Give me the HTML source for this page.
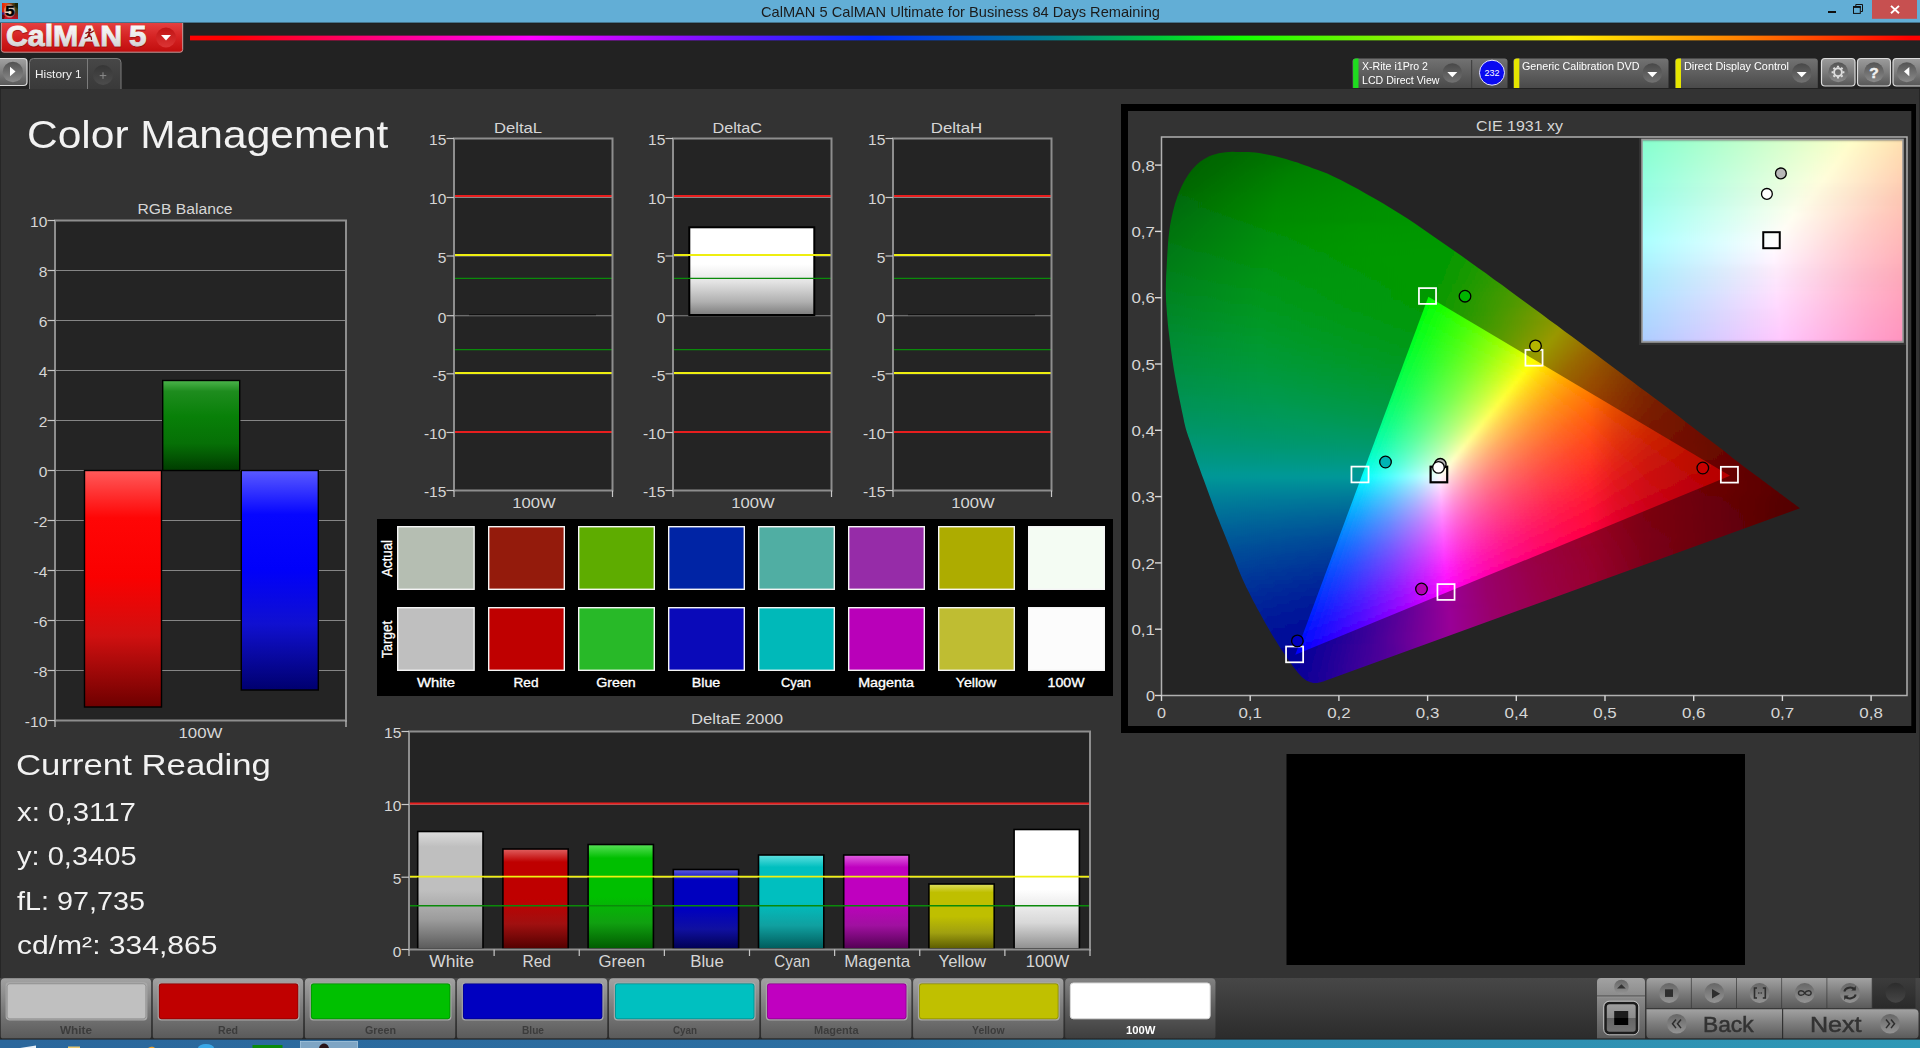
<!DOCTYPE html>
<html lang="en"><head><meta charset="utf-8"><title>CalMAN 5 CalMAN Ultimate for Business</title>
<style>html,body{margin:0;padding:0;background:#333;overflow:hidden}body{width:1920px;height:1048px;position:relative;font-family:"Liberation Sans",sans-serif}svg{position:absolute;left:0;top:0;display:block}svg text{font-family:"Liberation Sans",sans-serif}.t{position:absolute;margin:0;padding:0;white-space:nowrap;transform-origin:0 0;font-weight:normal}</style></head>
<body>
<svg width="1920" height="1048" viewBox="0 0 1920 1048">
<defs><linearGradient id="lg1" x1="0" y1="0" x2="1" y2="0"><stop offset="0" stop-color="#e82200"/><stop offset="0.25" stop-color="#f04818"/><stop offset="0.7" stop-color="#4a3a10"/><stop offset="1" stop-color="#085808"/></linearGradient><linearGradient id="lg2" x1="0" y1="0" x2="0" y2="1"><stop offset="0" stop-color="#a00818" stop-opacity="0"/><stop offset="0.45" stop-color="#a00818" stop-opacity="0.25"/><stop offset="1" stop-color="#c80828" stop-opacity="0.95"/></linearGradient><radialGradient id="ichalo" cx="0.5" cy="0.5" r="0.5"><stop offset="0" stop-color="#eef4d8" stop-opacity="0.95"/><stop offset="0.7" stop-color="#f0e0d0" stop-opacity="0.8"/><stop offset="1" stop-color="#f0d0c8" stop-opacity="0"/></radialGradient><linearGradient id="lg3" x1="0" y1="0" x2="0" y2="1"><stop offset="0" stop-color="#e44040"/><stop offset="0.45" stop-color="#d62424"/><stop offset="1" stop-color="#c00c0c"/></linearGradient><linearGradient id="lg4" x1="0" y1="0" x2="0" y2="1"><stop offset="0" stop-color="#ffffff"/><stop offset="0.5" stop-color="#ececec"/><stop offset="1" stop-color="#c8c8c8"/></linearGradient><linearGradient id="lg5" x1="0" y1="0" x2="0" y2="1"><stop offset="0" stop-color="#c01414"/><stop offset="1" stop-color="#dc3434"/></linearGradient><linearGradient id="lg6" x1="0" y1="0" x2="1" y2="0"><stop offset="0" stop-color="#ff0000"/><stop offset="0.023" stop-color="#ff0000"/><stop offset="0.11" stop-color="#ff0080"/><stop offset="0.197" stop-color="#ff00ff"/><stop offset="0.295" stop-color="#8010ff"/><stop offset="0.393" stop-color="#0028ff"/><stop offset="0.497" stop-color="#008090"/><stop offset="0.56" stop-color="#00c83c"/><stop offset="0.607" stop-color="#10ff00"/><stop offset="0.7" stop-color="#90f000"/><stop offset="0.798" stop-color="#ffee00"/><stop offset="0.896" stop-color="#ff8000"/><stop offset="0.994" stop-color="#ff0000"/></linearGradient><linearGradient id="lg7" x1="0" y1="0" x2="0" y2="1"><stop offset="0" stop-color="#a2a2a2"/><stop offset="0.5" stop-color="#7e7e7e"/><stop offset="1" stop-color="#585858"/></linearGradient><linearGradient id="lg8" x1="0" y1="0" x2="0" y2="1"><stop offset="0" stop-color="#525252"/><stop offset="1" stop-color="#8c8c8c"/></linearGradient><linearGradient id="lg9" x1="0" y1="0" x2="0" y2="1"><stop offset="0" stop-color="#474747"/><stop offset="1" stop-color="#393939"/></linearGradient><linearGradient id="lg10" x1="0" y1="0" x2="0" y2="1"><stop offset="0" stop-color="#363636"/><stop offset="1" stop-color="#4c4c4c"/></linearGradient><linearGradient id="lg11" x1="0" y1="0" x2="0" y2="1"><stop offset="0" stop-color="#727272"/><stop offset="0.5" stop-color="#5e5e5e"/><stop offset="1" stop-color="#4a4a4a"/></linearGradient><linearGradient id="lg12" x1="0" y1="0" x2="0" y2="1"><stop offset="0" stop-color="#484848"/><stop offset="1" stop-color="#727272"/></linearGradient><linearGradient id="lg13" x1="0" y1="0" x2="0" y2="1"><stop offset="0" stop-color="#484848"/><stop offset="1" stop-color="#727272"/></linearGradient><linearGradient id="lg14" x1="0" y1="0" x2="0" y2="1"><stop offset="0" stop-color="#484848"/><stop offset="1" stop-color="#727272"/></linearGradient><linearGradient id="lg15" x1="0" y1="0" x2="0" y2="1"><stop offset="0" stop-color="#9c9c9c"/><stop offset="0.5" stop-color="#7c7c7c"/><stop offset="1" stop-color="#565656"/></linearGradient><linearGradient id="lg16" x1="0" y1="0" x2="0" y2="1"><stop offset="0" stop-color="#545454"/><stop offset="1" stop-color="#8a8a8a"/></linearGradient><linearGradient id="lg17" x1="0" y1="0" x2="0" y2="1"><stop offset="0" stop-color="#545454"/><stop offset="1" stop-color="#8a8a8a"/></linearGradient><linearGradient id="lg18" x1="0" y1="0" x2="0" y2="1"><stop offset="0" stop-color="#545454"/><stop offset="1" stop-color="#8a8a8a"/></linearGradient><linearGradient id="lg19" x1="0" y1="0" x2="0" y2="1"><stop offset="0" stop-color="#ff5a5a"/><stop offset="0.2" stop-color="#ff0606"/><stop offset="0.45" stop-color="#fa0000"/><stop offset="0.7" stop-color="#d01010"/><stop offset="1" stop-color="#6e0000"/></linearGradient><linearGradient id="lg20" x1="0" y1="0" x2="0" y2="1"><stop offset="0" stop-color="#4cb44c"/><stop offset="0.12" stop-color="#1e8c1e"/><stop offset="0.4" stop-color="#088008"/><stop offset="0.7" stop-color="#067006"/><stop offset="1" stop-color="#003c00"/></linearGradient><linearGradient id="lg21" x1="0" y1="0" x2="0" y2="1"><stop offset="0" stop-color="#5a5aff"/><stop offset="0.2" stop-color="#0606ff"/><stop offset="0.45" stop-color="#0000fa"/><stop offset="0.7" stop-color="#1010d0"/><stop offset="1" stop-color="#00006e"/></linearGradient><linearGradient id="lg22" x1="0" y1="0" x2="0" y2="1"><stop offset="0" stop-color="#ffffff"/><stop offset="0.42" stop-color="#ffffff"/><stop offset="0.62" stop-color="#e4e4e4"/><stop offset="0.85" stop-color="#b0b0b0"/><stop offset="1" stop-color="#7c7c7c"/></linearGradient><linearGradient id="lg23" x1="0" y1="0" x2="0" y2="1"><stop offset="0" stop-color="#dcdcdc"/><stop offset="0.13" stop-color="#bfbfbf"/><stop offset="0.5" stop-color="#bfbfbf"/><stop offset="0.75" stop-color="#9c9c9c"/><stop offset="1" stop-color="#5a5a5a"/></linearGradient><linearGradient id="lg24" x1="0" y1="0" x2="0" y2="1"><stop offset="0" stop-color="#e06060"/><stop offset="0.13" stop-color="#bf0000"/><stop offset="0.5" stop-color="#bf0000"/><stop offset="0.75" stop-color="#a01010"/><stop offset="1" stop-color="#520000"/></linearGradient><linearGradient id="lg25" x1="0" y1="0" x2="0" y2="1"><stop offset="0" stop-color="#58e058"/><stop offset="0.13" stop-color="#00bf00"/><stop offset="0.5" stop-color="#00bf00"/><stop offset="0.75" stop-color="#10a010"/><stop offset="1" stop-color="#005a00"/></linearGradient><linearGradient id="lg26" x1="0" y1="0" x2="0" y2="1"><stop offset="0" stop-color="#6060e0"/><stop offset="0.13" stop-color="#0000bf"/><stop offset="0.5" stop-color="#0000bf"/><stop offset="0.75" stop-color="#1010a0"/><stop offset="1" stop-color="#000052"/></linearGradient><linearGradient id="lg27" x1="0" y1="0" x2="0" y2="1"><stop offset="0" stop-color="#60e0e0"/><stop offset="0.13" stop-color="#00bfbf"/><stop offset="0.5" stop-color="#00bfbf"/><stop offset="0.75" stop-color="#10a0a0"/><stop offset="1" stop-color="#005a5a"/></linearGradient><linearGradient id="lg28" x1="0" y1="0" x2="0" y2="1"><stop offset="0" stop-color="#e060e0"/><stop offset="0.13" stop-color="#bf00bf"/><stop offset="0.5" stop-color="#bf00bf"/><stop offset="0.75" stop-color="#a010a0"/><stop offset="1" stop-color="#520052"/></linearGradient><linearGradient id="lg29" x1="0" y1="0" x2="0" y2="1"><stop offset="0" stop-color="#e0e060"/><stop offset="0.13" stop-color="#bfbf00"/><stop offset="0.5" stop-color="#bfbf00"/><stop offset="0.75" stop-color="#a0a010"/><stop offset="1" stop-color="#5a5a00"/></linearGradient><linearGradient id="lg30" x1="0" y1="0" x2="0" y2="1"><stop offset="0" stop-color="#ffffff"/><stop offset="0.5" stop-color="#ffffff"/><stop offset="0.78" stop-color="#d8d8d8"/><stop offset="1" stop-color="#8e8e8e"/></linearGradient><clipPath id="hs"><polygon points="1324.5,681.1 1323.5,681.4 1322.1,681.8 1320.5,682.3 1319.2,682.6 1318.2,682.8 1317.2,682.9 1316.4,682.9 1315.5,682.9 1314.7,682.9 1313.9,682.9 1313.0,682.9 1311.9,682.6 1310.5,682.2 1308.9,681.6 1307.2,680.9 1305.6,680.0 1304.0,678.8 1302.4,677.4 1300.9,675.9 1299.3,674.2 1297.7,672.4 1296.2,670.5 1294.6,668.5 1293.0,666.4 1291.5,664.3 1290.0,662.2 1288.4,659.9 1286.7,657.4 1284.8,654.6 1282.7,651.5 1280.5,648.3 1278.3,644.8 1276.0,641.1 1273.6,637.2 1271.2,633.2 1268.8,629.1 1266.4,625.0 1264.0,620.7 1261.7,616.5 1259.4,612.3 1257.2,608.4 1255.2,604.5 1253.1,600.7 1251.0,596.5 1248.8,592.0 1246.4,587.4 1244.1,582.5 1241.8,577.4 1239.5,571.9 1237.2,566.2 1234.9,560.3 1232.6,554.5 1230.3,548.8 1228.0,543.0 1225.7,537.3 1223.4,531.6 1221.1,525.9 1218.8,520.1 1216.5,514.4 1214.3,508.7 1212.2,503.0 1210.1,497.2 1208.0,491.5 1205.9,485.8 1203.8,480.1 1201.7,474.4 1199.6,468.6 1197.5,462.9 1195.4,456.9 1193.3,450.8 1191.3,445.0 1189.6,440.0 1188.3,436.4 1187.4,433.7 1186.5,431.0 1185.5,427.4 1184.3,422.4 1183.1,416.6 1181.8,410.5 1180.6,404.5 1179.4,398.8 1178.2,393.1 1177.1,387.3 1176.0,381.6 1175.0,375.9 1174.0,370.2 1173.1,364.4 1172.2,358.7 1171.4,353.0 1170.6,347.2 1169.9,341.5 1169.2,335.8 1168.5,330.1 1167.9,324.4 1167.4,318.6 1166.9,312.9 1166.5,307.3 1166.1,301.8 1165.9,296.1 1165.8,290.0 1165.9,283.4 1166.1,276.5 1166.5,269.4 1166.9,262.1 1167.3,254.5 1167.8,246.5 1168.4,238.8 1169.2,231.6 1170.1,225.2 1171.2,219.4 1172.4,213.9 1173.7,208.7 1175.0,203.8 1176.5,199.2 1178.0,194.8 1179.8,190.4 1181.8,186.0 1184.1,181.6 1186.5,177.4 1189.0,173.6 1191.5,170.2 1194.2,167.2 1196.9,164.5 1199.7,162.1 1202.6,160.0 1205.6,158.2 1208.7,156.6 1211.9,155.3 1215.2,154.2 1218.7,153.3 1222.1,152.7 1225.6,152.2 1229.1,151.9 1232.6,151.8 1236.1,151.9 1239.4,151.9 1242.5,151.9 1245.4,151.9 1248.4,152.0 1251.6,152.2 1255.2,152.6 1259.1,153.1 1263.0,153.8 1266.9,154.5 1270.7,155.3 1274.5,156.1 1278.3,157.0 1282.1,158.0 1285.9,159.0 1289.7,160.2 1293.6,161.4 1297.4,162.6 1301.1,163.9 1304.7,165.2 1308.5,166.6 1312.7,168.2 1317.2,169.8 1321.9,171.6 1327.2,173.6 1333.4,176.4 1340.8,180.1 1349.2,184.4 1357.9,189.1 1366.4,193.9 1374.6,198.5 1382.8,203.3 1390.9,208.2 1399.0,213.2 1407.0,218.3 1414.9,223.6 1422.8,229.0 1430.7,234.4 1438.6,239.9 1446.6,245.4 1454.5,250.9 1462.4,256.5 1470.3,262.2 1478.3,267.9 1486.2,273.6 1494.1,279.4 1502.1,285.1 1510.0,290.9 1517.8,296.7 1525.7,302.5 1533.6,308.3 1541.5,314.1 1549.3,319.9 1557.1,325.6 1564.9,331.4 1572.6,337.1 1580.3,342.8 1587.9,348.5 1595.5,354.1 1603.0,359.7 1610.4,365.3 1617.8,370.8 1625.1,376.2 1632.3,381.6 1639.4,386.9 1646.4,392.1 1653.4,397.3 1660.2,402.3 1666.9,407.3 1673.4,412.2 1679.7,417.0 1685.8,421.9 1691.8,426.6 1697.6,431.1 1703.2,435.3 1708.6,439.3 1713.9,443.2 1718.9,447.0 1723.8,450.8 1728.5,454.6 1732.9,458.2 1737.3,461.6 1741.4,464.8 1745.4,467.7 1749.2,470.5 1752.9,473.2 1756.3,475.7 1759.6,478.1 1762.6,480.5 1765.5,482.6 1768.3,484.7 1770.9,486.6 1773.3,488.5 1775.7,490.2 1777.9,491.8 1779.9,493.4 1781.9,494.8 1783.7,496.2 1785.5,497.5 1787.1,498.7 1788.7,499.9 1790.2,501.0 1791.8,502.2 1793.3,503.3 1794.7,504.3 1795.6,505.0 1800.0,508.3"/></clipPath><clipPath id="tri"><polygon points="1730.0,475.8 1428.4,296.8 1295.3,654.8"/></clipPath><clipPath id="ins"><rect x="1642" y="139.5" width="261" height="202.5"/></clipPath><filter id="vb" x="-2%" y="-2%" width="104%" height="104%"><feGaussianBlur stdDeviation="0 1.6"/></filter><linearGradient id="o0" gradientUnits="userSpaceOnUse" x1="1199.96" x2="1289.96"><stop offset="0" stop-color="#006100"/><stop offset="1" stop-color="#070"/></linearGradient><linearGradient id="o1" gradientUnits="userSpaceOnUse" x1="1193.84" x2="1301.84"><stop offset="0" stop-color="#006100"/><stop offset="1" stop-color="#007a00"/></linearGradient><linearGradient id="o2" gradientUnits="userSpaceOnUse" x1="1189.4" x2="1313.4"><stop offset="0" stop-color="#006100"/><stop offset="1" stop-color="#007e00"/></linearGradient><linearGradient id="o3" gradientUnits="userSpaceOnUse" x1="1185.75" x2="1323.75"><stop offset="0" stop-color="#006101"/><stop offset="0.971" stop-color="#008000"/><stop offset="1" stop-color="#008100"/></linearGradient><linearGradient id="o4" gradientUnits="userSpaceOnUse" x1="1182.74" x2="1334.74"><stop offset="0" stop-color="#006102"/><stop offset="0.8289" stop-color="#008000"/><stop offset="1" stop-color="#008400"/></linearGradient><linearGradient id="o5" gradientUnits="userSpaceOnUse" x1="1180.17" x2="1344.17"><stop offset="0" stop-color="#006103"/><stop offset="0.7195" stop-color="#008000"/><stop offset="1" stop-color="#008600"/></linearGradient><linearGradient id="o6" gradientUnits="userSpaceOnUse" x1="1177.89" x2="1351.89"><stop offset="0" stop-color="#006103"/><stop offset="0.6437" stop-color="#008000"/><stop offset="1" stop-color="#080"/></linearGradient><linearGradient id="o7" gradientUnits="userSpaceOnUse" x1="1175.83" x2="1359.83"><stop offset="0" stop-color="#006204"/><stop offset="0.6087" stop-color="#008100"/><stop offset="1" stop-color="#008a00"/></linearGradient><linearGradient id="o8" gradientUnits="userSpaceOnUse" x1="1173.98" x2="1365.98"><stop offset="0" stop-color="#006305"/><stop offset="0.5833" stop-color="#008200"/><stop offset="1" stop-color="#008b00"/></linearGradient><linearGradient id="o9" gradientUnits="userSpaceOnUse" x1="1172.33" x2="1374.33"><stop offset="0" stop-color="#006405"/><stop offset="0.5545" stop-color="#008300"/><stop offset="1" stop-color="#008d00"/></linearGradient><linearGradient id="o10" gradientUnits="userSpaceOnUse" x1="1170.87" x2="1380.87"><stop offset="0" stop-color="#006506"/><stop offset="0.5333" stop-color="#008400"/><stop offset="1" stop-color="#008e00"/></linearGradient><linearGradient id="o11" gradientUnits="userSpaceOnUse" x1="1169.58" x2="1387.58"><stop offset="0" stop-color="#006707"/><stop offset="0.5046" stop-color="#008500"/><stop offset="1" stop-color="#009000"/></linearGradient><linearGradient id="o12" gradientUnits="userSpaceOnUse" x1="1168.43" x2="1394.43"><stop offset="0" stop-color="#006808"/><stop offset="0.4867" stop-color="#008600"/><stop offset="1" stop-color="#009100"/></linearGradient><linearGradient id="o13" gradientUnits="userSpaceOnUse" x1="1167.38" x2="1401.38"><stop offset="0" stop-color="#006909"/><stop offset="0.4701" stop-color="#008700"/><stop offset="1" stop-color="#009200"/></linearGradient><linearGradient id="o14" gradientUnits="userSpaceOnUse" x1="1166.39" x2="1406.39"><stop offset="0" stop-color="#006a09"/><stop offset="0.4583" stop-color="#080"/><stop offset="1" stop-color="#009300"/></linearGradient><linearGradient id="o15" gradientUnits="userSpaceOnUse" x1="1165.52" x2="1413.52"><stop offset="0" stop-color="#006b0a"/><stop offset="0.4435" stop-color="#008901"/><stop offset="1" stop-color="#009400"/></linearGradient><linearGradient id="o16" gradientUnits="userSpaceOnUse" x1="1164.73" x2="1418.73"><stop offset="0" stop-color="#006c0b"/><stop offset="0.4331" stop-color="#008a02"/><stop offset="1" stop-color="#009500"/></linearGradient><linearGradient id="o17" gradientUnits="userSpaceOnUse" x1="1164.02" x2="1426.02"><stop offset="0" stop-color="#006e0c"/><stop offset="0.4198" stop-color="#008a03"/><stop offset="1" stop-color="#009500"/></linearGradient><linearGradient id="o18" gradientUnits="userSpaceOnUse" x1="1163.43" x2="1431.43"><stop offset="0" stop-color="#006f0d"/><stop offset="0.4104" stop-color="#008b04"/><stop offset="0.9851" stop-color="#009600"/><stop offset="1" stop-color="#009600"/></linearGradient><linearGradient id="o19" gradientUnits="userSpaceOnUse" x1="1162.95" x2="1436.95"><stop offset="0" stop-color="#00700e"/><stop offset="0.3942" stop-color="#008c05"/><stop offset="0.7445" stop-color="#009500"/><stop offset="1" stop-color="#009600"/></linearGradient><linearGradient id="o20" gradientUnits="userSpaceOnUse" x1="1162.52" x2="1442.52"><stop offset="0" stop-color="#00710f"/><stop offset="0.3857" stop-color="#008d06"/><stop offset="0.7143" stop-color="#009500"/><stop offset="1" stop-color="#009700"/></linearGradient><linearGradient id="o21" gradientUnits="userSpaceOnUse" x1="1162.19" x2="1448.19"><stop offset="0" stop-color="#007210"/><stop offset="0.3776" stop-color="#008e07"/><stop offset="0.6993" stop-color="#009600"/><stop offset="1" stop-color="#009700"/></linearGradient><linearGradient id="o22" gradientUnits="userSpaceOnUse" x1="1161.88" x2="1453.88"><stop offset="0" stop-color="#007311"/><stop offset="0.3699" stop-color="#008e08"/><stop offset="0.6918" stop-color="#009600"/><stop offset="1" stop-color="#029800"/></linearGradient><linearGradient id="o23" gradientUnits="userSpaceOnUse" x1="1161.62" x2="1459.62"><stop offset="0" stop-color="#007512"/><stop offset="0.3624" stop-color="#008f09"/><stop offset="0.6913" stop-color="#009700"/><stop offset="0.9732" stop-color="#029800"/><stop offset="1" stop-color="#079800"/></linearGradient><linearGradient id="o24" gradientUnits="userSpaceOnUse" x1="1161.37" x2="1465.37"><stop offset="0" stop-color="#007613"/><stop offset="0.3553" stop-color="#00900a"/><stop offset="0.6974" stop-color="#009800"/><stop offset="0.9539" stop-color="#039800"/><stop offset="1" stop-color="#0c9800"/></linearGradient><linearGradient id="o25" gradientUnits="userSpaceOnUse" x1="1161.14" x2="1471.14"><stop offset="0" stop-color="#007714"/><stop offset="0.3484" stop-color="#00910b"/><stop offset="0.6968" stop-color="#009800"/><stop offset="0.929" stop-color="#029900"/><stop offset="1" stop-color="#129800"/></linearGradient><linearGradient id="o26" gradientUnits="userSpaceOnUse" x1="1160.91" x2="1476.91"><stop offset="0" stop-color="#007815"/><stop offset="0.3418" stop-color="#00910d"/><stop offset="0.7025" stop-color="#009800"/><stop offset="0.9114" stop-color="#039900"/><stop offset="1" stop-color="#179900"/></linearGradient><linearGradient id="o27" gradientUnits="userSpaceOnUse" x1="1160.68" x2="1482.68"><stop offset="0" stop-color="#007916"/><stop offset="0.3292" stop-color="#00920e"/><stop offset="0.7081" stop-color="#090"/><stop offset="0.8882" stop-color="#039900"/><stop offset="1" stop-color="#1d9900"/></linearGradient><linearGradient id="o28" gradientUnits="userSpaceOnUse" x1="1160.46" x2="1488.46"><stop offset="0" stop-color="#007a17"/><stop offset="0.3232" stop-color="#00920f"/><stop offset="0.7134" stop-color="#090"/><stop offset="0.8659" stop-color="#029900"/><stop offset="1" stop-color="#239900"/></linearGradient><linearGradient id="o29" gradientUnits="userSpaceOnUse" x1="1160.26" x2="1494.26"><stop offset="0" stop-color="#007b18"/><stop offset="0.3174" stop-color="#009310"/><stop offset="0.7186" stop-color="#090"/><stop offset="0.8503" stop-color="#039900"/><stop offset="1" stop-color="#299900"/></linearGradient><linearGradient id="o30" gradientUnits="userSpaceOnUse" x1="1160.09" x2="1500.09"><stop offset="0" stop-color="#007c1a"/><stop offset="0.3118" stop-color="#009312"/><stop offset="0.7235" stop-color="#090"/><stop offset="0.8294" stop-color="#039900"/><stop offset="1" stop-color="#309900"/></linearGradient><linearGradient id="o31" gradientUnits="userSpaceOnUse" x1="1160" x2="1504"><stop offset="0" stop-color="#007d1b"/><stop offset="0.3081" stop-color="#009413"/><stop offset="0.7326" stop-color="#090"/><stop offset="0.8198" stop-color="#049900"/><stop offset="1" stop-color="#359900"/></linearGradient><linearGradient id="o32" gradientUnits="userSpaceOnUse" x1="1160" x2="1510"><stop offset="0" stop-color="#007e1c"/><stop offset="0.3029" stop-color="#009514"/><stop offset="0.7371" stop-color="#090"/><stop offset="0.8" stop-color="#039900"/><stop offset="1" stop-color="#3c9900"/></linearGradient><linearGradient id="o33" gradientUnits="userSpaceOnUse" x1="1160" x2="1516"><stop offset="0" stop-color="#007f1d"/><stop offset="0.2921" stop-color="#009516"/><stop offset="0.7472" stop-color="#090"/><stop offset="0.7921" stop-color="#069900"/><stop offset="1" stop-color="#490"/></linearGradient><linearGradient id="o34" gradientUnits="userSpaceOnUse" x1="1160" x2="1522"><stop offset="0" stop-color="#00801f"/><stop offset="0.2873" stop-color="#009517"/><stop offset="0.7459" stop-color="#090"/><stop offset="0.9724" stop-color="#429900"/><stop offset="1" stop-color="#4c9900"/></linearGradient><linearGradient id="o35" gradientUnits="userSpaceOnUse" x1="1160" x2="1526"><stop offset="0" stop-color="#008120"/><stop offset="0.2842" stop-color="#009619"/><stop offset="0.7486" stop-color="#029900"/><stop offset="1" stop-color="#529900"/></linearGradient><linearGradient id="o36" gradientUnits="userSpaceOnUse" x1="1160" x2="1532"><stop offset="0" stop-color="#008121"/><stop offset="0.2796" stop-color="#00961a"/><stop offset="0.7312" stop-color="#029900"/><stop offset="0.9892" stop-color="#579900"/><stop offset="1" stop-color="#5b9900"/></linearGradient><linearGradient id="o37" gradientUnits="userSpaceOnUse" x1="1160" x2="1538"><stop offset="0" stop-color="#008223"/><stop offset="0.2751" stop-color="#00961c"/><stop offset="0.7143" stop-color="#029900"/><stop offset="0.963" stop-color="#590"/><stop offset="1" stop-color="#649900"/></linearGradient><linearGradient id="o38" gradientUnits="userSpaceOnUse" x1="1160" x2="1542"><stop offset="0" stop-color="#008324"/><stop offset="0.267" stop-color="#00971d"/><stop offset="0.7068" stop-color="#039902"/><stop offset="0.9529" stop-color="#589900"/><stop offset="1" stop-color="#6b9900"/></linearGradient><linearGradient id="o39" gradientUnits="userSpaceOnUse" x1="1160" x2="1548"><stop offset="0" stop-color="#008426"/><stop offset="0.2629" stop-color="#00971f"/><stop offset="0.6907" stop-color="#029903"/><stop offset="0.9278" stop-color="#569900"/><stop offset="1" stop-color="#759900"/></linearGradient><linearGradient id="o40" gradientUnits="userSpaceOnUse" x1="1160.15" x2="1554.15"><stop offset="0" stop-color="#008527"/><stop offset="0.2589" stop-color="#009720"/><stop offset="0.6751" stop-color="#029905"/><stop offset="0.8223" stop-color="#359900"/><stop offset="1" stop-color="#809900"/></linearGradient><linearGradient id="o41" gradientUnits="userSpaceOnUse" x1="1160.41" x2="1558.41"><stop offset="0" stop-color="#008529"/><stop offset="0.2563" stop-color="#009822"/><stop offset="0.6633" stop-color="#029907"/><stop offset="0.809" stop-color="#359900"/><stop offset="1" stop-color="#899900"/></linearGradient><linearGradient id="o42" gradientUnits="userSpaceOnUse" x1="1160.69" x2="1564.69"><stop offset="0" stop-color="#00862a"/><stop offset="0.2525" stop-color="#009824"/><stop offset="0.6485" stop-color="#029909"/><stop offset="0.802" stop-color="#3a9900"/><stop offset="0.995" stop-color="#929900"/><stop offset="1" stop-color="#959900"/></linearGradient><linearGradient id="o43" gradientUnits="userSpaceOnUse" x1="1160.99" x2="1570.99"><stop offset="0" stop-color="#00872c"/><stop offset="0.2439" stop-color="#009826"/><stop offset="0.6341" stop-color="#02990b"/><stop offset="0.8" stop-color="#409900"/><stop offset="0.9902" stop-color="#999600"/><stop offset="1" stop-color="#999100"/></linearGradient><linearGradient id="o44" gradientUnits="userSpaceOnUse" x1="1161.32" x2="1575.32"><stop offset="0" stop-color="#00882e"/><stop offset="0.2415" stop-color="#009827"/><stop offset="0.6232" stop-color="#01990d"/><stop offset="0.8019" stop-color="#479900"/><stop offset="0.971" stop-color="#999700"/><stop offset="1" stop-color="#980"/></linearGradient><linearGradient id="o45" gradientUnits="userSpaceOnUse" x1="1161.7" x2="1581.7"><stop offset="0" stop-color="#00882f"/><stop offset="0.2381" stop-color="#009829"/><stop offset="0.6095" stop-color="#01990f"/><stop offset="0.8048" stop-color="#519900"/><stop offset="0.9476" stop-color="#999700"/><stop offset="1" stop-color="#997d00"/></linearGradient><linearGradient id="o46" gradientUnits="userSpaceOnUse" x1="1162.11" x2="1586.11"><stop offset="0" stop-color="#008931"/><stop offset="0.2358" stop-color="#00992b"/><stop offset="0.6038" stop-color="#039911"/><stop offset="0.8019" stop-color="#579900"/><stop offset="0.9292" stop-color="#999700"/><stop offset="1" stop-color="#997600"/></linearGradient><linearGradient id="o47" gradientUnits="userSpaceOnUse" x1="1162.54" x2="1590.54"><stop offset="0" stop-color="#008a33"/><stop offset="0.229" stop-color="#00992d"/><stop offset="0.5935" stop-color="#039913"/><stop offset="0.7897" stop-color="#589900"/><stop offset="0.9112" stop-color="#999800"/><stop offset="1" stop-color="#996e00"/></linearGradient><linearGradient id="o48" gradientUnits="userSpaceOnUse" x1="1162.99" x2="1596.99"><stop offset="0" stop-color="#008a35"/><stop offset="0.2258" stop-color="#00992e"/><stop offset="0.5806" stop-color="#039915"/><stop offset="0.7696" stop-color="#579902"/><stop offset="0.8894" stop-color="#999800"/><stop offset="0.9908" stop-color="#976800"/><stop offset="1" stop-color="#946300"/></linearGradient><linearGradient id="o49" gradientUnits="userSpaceOnUse" x1="1163.46" x2="1601.46"><stop offset="0" stop-color="#008b36"/><stop offset="0.2237" stop-color="#009930"/><stop offset="0.5708" stop-color="#039917"/><stop offset="0.758" stop-color="#589904"/><stop offset="0.8721" stop-color="#990"/><stop offset="0.9635" stop-color="#996c00"/><stop offset="1" stop-color="#905b00"/></linearGradient><linearGradient id="o50" gradientUnits="userSpaceOnUse" x1="1163.94" x2="1607.94"><stop offset="0" stop-color="#008c38"/><stop offset="0.2207" stop-color="#009932"/><stop offset="0.5586" stop-color="#03991a"/><stop offset="0.7387" stop-color="#579907"/><stop offset="0.8378" stop-color="#909900"/><stop offset="0.8559" stop-color="#999600"/><stop offset="0.9459" stop-color="#996b00"/><stop offset="0.9865" stop-color="#905700"/><stop offset="1" stop-color="#8c5100"/></linearGradient><linearGradient id="o51" gradientUnits="userSpaceOnUse" x1="1164.45" x2="1612.45"><stop offset="0" stop-color="#008c3a"/><stop offset="0.2188" stop-color="#009934"/><stop offset="0.5491" stop-color="#03991c"/><stop offset="0.7277" stop-color="#58990a"/><stop offset="0.8348" stop-color="#989900"/><stop offset="0.9241" stop-color="#996c00"/><stop offset="0.9643" stop-color="#945b00"/><stop offset="1" stop-color="#8a4b00"/></linearGradient><linearGradient id="o52" gradientUnits="userSpaceOnUse" x1="1164.98" x2="1618.98"><stop offset="0" stop-color="#008d3c"/><stop offset="0.2115" stop-color="#009936"/><stop offset="0.533" stop-color="#01991f"/><stop offset="0.7048" stop-color="#55990d"/><stop offset="0.8194" stop-color="#999700"/><stop offset="0.9075" stop-color="#996a00"/><stop offset="0.9471" stop-color="#955a00"/><stop offset="1" stop-color="#864400"/></linearGradient><linearGradient id="o53" gradientUnits="userSpaceOnUse" x1="1165.52" x2="1623.52"><stop offset="0" stop-color="#008d3e"/><stop offset="0.2096" stop-color="#009938"/><stop offset="0.524" stop-color="#019921"/><stop offset="0.6943" stop-color="#569910"/><stop offset="0.8035" stop-color="#999702"/><stop offset="0.8865" stop-color="#996b00"/><stop offset="0.9345" stop-color="#965900"/><stop offset="1" stop-color="#843e00"/></linearGradient><linearGradient id="o54" gradientUnits="userSpaceOnUse" x1="1166.1" x2="1630.1"><stop offset="0" stop-color="#008e40"/><stop offset="0.2069" stop-color="#00993a"/><stop offset="0.5129" stop-color="#019924"/><stop offset="0.6767" stop-color="#559913"/><stop offset="0.7845" stop-color="#999705"/><stop offset="0.8664" stop-color="#996b00"/><stop offset="0.9224" stop-color="#965500"/><stop offset="1" stop-color="#813800"/></linearGradient><linearGradient id="o55" gradientUnits="userSpaceOnUse" x1="1166.7" x2="1634.7"><stop offset="0" stop-color="#008e42"/><stop offset="0.2051" stop-color="#00993c"/><stop offset="0.5043" stop-color="#019927"/><stop offset="0.6667" stop-color="#569916"/><stop offset="0.7692" stop-color="#999808"/><stop offset="0.8504" stop-color="#996b00"/><stop offset="0.9145" stop-color="#955200"/><stop offset="1" stop-color="#7f3400"/></linearGradient><linearGradient id="o56" gradientUnits="userSpaceOnUse" x1="1167.33" x2="1639.33"><stop offset="0" stop-color="#008f44"/><stop offset="0.2034" stop-color="#00993f"/><stop offset="0.4958" stop-color="#029929"/><stop offset="0.6525" stop-color="#559919"/><stop offset="0.7542" stop-color="#99980c"/><stop offset="0.8305" stop-color="#996c00"/><stop offset="0.9025" stop-color="#965100"/><stop offset="0.9958" stop-color="#7e3100"/><stop offset="1" stop-color="#7d3000"/></linearGradient><linearGradient id="o57" gradientUnits="userSpaceOnUse" x1="1167.98" x2="1645.98"><stop offset="0" stop-color="#008f47"/><stop offset="0.2008" stop-color="#009941"/><stop offset="0.4854" stop-color="#02992c"/><stop offset="0.6402" stop-color="#57991c"/><stop offset="0.7364" stop-color="#99980f"/><stop offset="0.8117" stop-color="#996c02"/><stop offset="0.8912" stop-color="#964d00"/><stop offset="0.9874" stop-color="#7d2e00"/><stop offset="1" stop-color="#7b2b00"/></linearGradient><linearGradient id="o58" gradientUnits="userSpaceOnUse" x1="1168.66" x2="1650.66"><stop offset="0" stop-color="#009049"/><stop offset="0.1992" stop-color="#009943"/><stop offset="0.4772" stop-color="#02992f"/><stop offset="0.6266" stop-color="#569920"/><stop offset="0.722" stop-color="#999813"/><stop offset="0.7967" stop-color="#996b05"/><stop offset="0.8797" stop-color="#974c00"/><stop offset="0.9751" stop-color="#7e2d00"/><stop offset="1" stop-color="#792800"/></linearGradient><linearGradient id="o59" gradientUnits="userSpaceOnUse" x1="1169.36" x2="1655.36"><stop offset="0" stop-color="#00904b"/><stop offset="0.1975" stop-color="#009946"/><stop offset="0.4691" stop-color="#029932"/><stop offset="0.6173" stop-color="#589923"/><stop offset="0.7078" stop-color="#999817"/><stop offset="0.7819" stop-color="#996b08"/><stop offset="0.8724" stop-color="#964900"/><stop offset="0.9671" stop-color="#7d2b00"/><stop offset="1" stop-color="#782400"/></linearGradient><linearGradient id="o60" gradientUnits="userSpaceOnUse" x1="1170.08" x2="1662.08"><stop offset="0" stop-color="#00914e"/><stop offset="0.1992" stop-color="#009948"/><stop offset="0.4593" stop-color="#029935"/><stop offset="0.6016" stop-color="#579926"/><stop offset="0.6911" stop-color="#99981b"/><stop offset="0.7602" stop-color="#996c0b"/><stop offset="0.8618" stop-color="#964600"/><stop offset="0.9593" stop-color="#7c2800"/><stop offset="1" stop-color="#762100"/></linearGradient><linearGradient id="o61" gradientUnits="userSpaceOnUse" x1="1170.84" x2="1666.84"><stop offset="0" stop-color="#009150"/><stop offset="0.1976" stop-color="#00994a"/><stop offset="0.4516" stop-color="#039938"/><stop offset="0.5887" stop-color="#56992a"/><stop offset="0.6774" stop-color="#99981f"/><stop offset="0.746" stop-color="#996c0e"/><stop offset="0.8508" stop-color="#974400"/><stop offset="0.9476" stop-color="#7d2700"/><stop offset="1" stop-color="#741e00"/></linearGradient><linearGradient id="o62" gradientUnits="userSpaceOnUse" x1="1171.62" x2="1671.62"><stop offset="0" stop-color="#009253"/><stop offset="0.2" stop-color="#00994d"/><stop offset="0.444" stop-color="#03993b"/><stop offset="0.58" stop-color="#58992e"/><stop offset="0.664" stop-color="#999823"/><stop offset="0.732" stop-color="#996b11"/><stop offset="0.844" stop-color="#964101"/><stop offset="0.944" stop-color="#7c2400"/><stop offset="1" stop-color="#731b00"/></linearGradient><linearGradient id="o63" gradientUnits="userSpaceOnUse" x1="1172.43" x2="1678.43"><stop offset="0" stop-color="#009255"/><stop offset="0.2016" stop-color="#00994f"/><stop offset="0.4308" stop-color="#01993f"/><stop offset="0.5613" stop-color="#549932"/><stop offset="0.6482" stop-color="#999827"/><stop offset="0.7115" stop-color="#996d15"/><stop offset="0.8103" stop-color="#994605"/><stop offset="0.8419" stop-color="#933b01"/><stop offset="0.9526" stop-color="#781f00"/><stop offset="1" stop-color="#711800"/></linearGradient><linearGradient id="o64" gradientUnits="userSpaceOnUse" x1="1173.25" x2="1683.25"><stop offset="0" stop-color="#009258"/><stop offset="0.2039" stop-color="#009952"/><stop offset="0.4235" stop-color="#029942"/><stop offset="0.5529" stop-color="#569936"/><stop offset="0.6353" stop-color="#99982b"/><stop offset="0.698" stop-color="#996c18"/><stop offset="0.7961" stop-color="#994507"/><stop offset="0.8275" stop-color="#953b03"/><stop offset="0.9333" stop-color="#7a2000"/><stop offset="1" stop-color="#701600"/></linearGradient><linearGradient id="o65" gradientUnits="userSpaceOnUse" x1="1174.08" x2="1688.08"><stop offset="0" stop-color="#00935a"/><stop offset="0.2101" stop-color="#009954"/><stop offset="0.4163" stop-color="#029946"/><stop offset="0.5409" stop-color="#55993a"/><stop offset="0.6226" stop-color="#999830"/><stop offset="0.6848" stop-color="#996c1b"/><stop offset="0.7821" stop-color="#994409"/><stop offset="0.8171" stop-color="#963a05"/><stop offset="0.9222" stop-color="#7b1f00"/><stop offset="1" stop-color="#6f1400"/></linearGradient><linearGradient id="o66" gradientUnits="userSpaceOnUse" x1="1174.91" x2="1692.91"><stop offset="0" stop-color="#00935d"/><stop offset="0.2162" stop-color="#009957"/><stop offset="0.4093" stop-color="#029949"/><stop offset="0.5328" stop-color="#57993e"/><stop offset="0.61" stop-color="#999834"/><stop offset="0.6718" stop-color="#996b1f"/><stop offset="0.7645" stop-color="#99450c"/><stop offset="0.8108" stop-color="#953706"/><stop offset="0.9151" stop-color="#7a1d00"/><stop offset="1" stop-color="#6e1200"/></linearGradient><linearGradient id="o67" gradientUnits="userSpaceOnUse" x1="1175.73" x2="1697.73"><stop offset="0" stop-color="#009360"/><stop offset="0.2222" stop-color="#009959"/><stop offset="0.4023" stop-color="#03994d"/><stop offset="0.5211" stop-color="#569942"/><stop offset="0.5977" stop-color="#999839"/><stop offset="0.6552" stop-color="#996d23"/><stop offset="0.7433" stop-color="#994610"/><stop offset="0.8008" stop-color="#963507"/><stop offset="0.9004" stop-color="#7b1d00"/><stop offset="1" stop-color="#6d1000"/></linearGradient><linearGradient id="o68" gradientUnits="userSpaceOnUse" x1="1176.55" x2="1702.55"><stop offset="0" stop-color="#009463"/><stop offset="0.2319" stop-color="#00995c"/><stop offset="0.3916" stop-color="#019951"/><stop offset="0.5095" stop-color="#559947"/><stop offset="0.5856" stop-color="#99983e"/><stop offset="0.6426" stop-color="#996c27"/><stop offset="0.73" stop-color="#994512"/><stop offset="0.7947" stop-color="#953308"/><stop offset="0.8973" stop-color="#7a1a00"/><stop offset="1" stop-color="#6c0e00"/></linearGradient><linearGradient id="o69" gradientUnits="userSpaceOnUse" x1="1177.38" x2="1709.38"><stop offset="0" stop-color="#009466"/><stop offset="0.2444" stop-color="#00995e"/><stop offset="0.3835" stop-color="#019955"/><stop offset="0.4962" stop-color="#54994c"/><stop offset="0.5714" stop-color="#999743"/><stop offset="0.6278" stop-color="#996b2a"/><stop offset="0.7143" stop-color="#994515"/><stop offset="0.782" stop-color="#96310a"/><stop offset="0.8797" stop-color="#7b1a00"/><stop offset="1" stop-color="#6a0c00"/></linearGradient><linearGradient id="o70" gradientUnits="userSpaceOnUse" x1="1178.24" x2="1714.24"><stop offset="0" stop-color="#009469"/><stop offset="0.2612" stop-color="#009961"/><stop offset="0.3769" stop-color="#02995a"/><stop offset="0.4888" stop-color="#579950"/><stop offset="0.5597" stop-color="#999748"/><stop offset="0.6157" stop-color="#996a2e"/><stop offset="0.7015" stop-color="#994417"/><stop offset="0.7761" stop-color="#962e0b"/><stop offset="0.8769" stop-color="#7b1801"/><stop offset="1" stop-color="#690b00"/></linearGradient><linearGradient id="o71" gradientUnits="userSpaceOnUse" x1="1179.17" x2="1719.17"><stop offset="0" stop-color="#00956c"/><stop offset="0.2889" stop-color="#009963"/><stop offset="0.3704" stop-color="#02995e"/><stop offset="0.4778" stop-color="#569955"/><stop offset="0.5481" stop-color="#99974d"/><stop offset="0.6" stop-color="#996c33"/><stop offset="0.6815" stop-color="#99451b"/><stop offset="0.7667" stop-color="#962d0c"/><stop offset="0.863" stop-color="#7c1702"/><stop offset="1" stop-color="#680900"/></linearGradient><linearGradient id="o72" gradientUnits="userSpaceOnUse" x1="1180.21" x2="1724.21"><stop offset="0" stop-color="#009570"/><stop offset="0.3162" stop-color="#009965"/><stop offset="0.364" stop-color="#039962"/><stop offset="0.4706" stop-color="#58995a"/><stop offset="0.5368" stop-color="#999653"/><stop offset="0.5882" stop-color="#996b37"/><stop offset="0.6691" stop-color="#99441e"/><stop offset="0.761" stop-color="#962a0d"/><stop offset="0.8566" stop-color="#7b1602"/><stop offset="1" stop-color="#670800"/></linearGradient><linearGradient id="o73" gradientUnits="userSpaceOnUse" x1="1181.47" x2="1729.47"><stop offset="0" stop-color="#009573"/><stop offset="0.3285" stop-color="#009969"/><stop offset="0.3577" stop-color="#049967"/><stop offset="0.4599" stop-color="#589960"/><stop offset="0.5219" stop-color="#99995a"/><stop offset="0.573" stop-color="#996c3c"/><stop offset="0.6496" stop-color="#994622"/><stop offset="0.7518" stop-color="#96290f"/><stop offset="0.8467" stop-color="#7b1503"/><stop offset="1" stop-color="#650600"/></linearGradient><linearGradient id="o74" gradientUnits="userSpaceOnUse" x1="1182.9" x2="1734.9"><stop offset="0" stop-color="#009577"/><stop offset="0.3478" stop-color="#03996c"/><stop offset="0.4457" stop-color="#596"/><stop offset="0.5109" stop-color="#999860"/><stop offset="0.5616" stop-color="#996b40"/><stop offset="0.6377" stop-color="#994425"/><stop offset="0.7428" stop-color="#972710"/><stop offset="0.837" stop-color="#7c1304"/><stop offset="1" stop-color="#640500"/></linearGradient><linearGradient id="o75" gradientUnits="userSpaceOnUse" x1="1184.28" x2="1740.28"><stop offset="0" stop-color="#00967a"/><stop offset="0.3381" stop-color="#019971"/><stop offset="0.4353" stop-color="#55996c"/><stop offset="0.5" stop-color="#999665"/><stop offset="0.5468" stop-color="#996c46"/><stop offset="0.6187" stop-color="#994629"/><stop offset="0.7338" stop-color="#972511"/><stop offset="0.8273" stop-color="#7c1205"/><stop offset="1" stop-color="#630400"/></linearGradient><linearGradient id="o76" gradientUnits="userSpaceOnUse" x1="1185.64" x2="1745.64"><stop offset="0" stop-color="#00967e"/><stop offset="0.3321" stop-color="#029977"/><stop offset="0.425" stop-color="#559972"/><stop offset="0.4857" stop-color="#98996e"/><stop offset="0.5357" stop-color="#996a4a"/><stop offset="0.6071" stop-color="#99442c"/><stop offset="0.7286" stop-color="#962212"/><stop offset="0.8214" stop-color="#7b1106"/><stop offset="1" stop-color="#610300"/></linearGradient><linearGradient id="o77" gradientUnits="userSpaceOnUse" x1="1187.01" x2="1751.01"><stop offset="0" stop-color="#009682"/><stop offset="0.3227" stop-color="#01997c"/><stop offset="0.4149" stop-color="#549978"/><stop offset="0.4752" stop-color="#999874"/><stop offset="0.5213" stop-color="#996b50"/><stop offset="0.5922" stop-color="#994430"/><stop offset="0.7092" stop-color="#992315"/><stop offset="0.8191" stop-color="#7a0f06"/><stop offset="1" stop-color="#600200"/></linearGradient><linearGradient id="o78" gradientUnits="userSpaceOnUse" x1="1188.39" x2="1756.39"><stop offset="0" stop-color="#009686"/><stop offset="0.3169" stop-color="#029982"/><stop offset="0.4049" stop-color="#54997f"/><stop offset="0.4648" stop-color="#99977a"/><stop offset="0.5106" stop-color="#996a54"/><stop offset="0.581" stop-color="#994333"/><stop offset="0.6972" stop-color="#992217"/><stop offset="0.8204" stop-color="#790c06"/><stop offset="1" stop-color="#5f0000"/></linearGradient><linearGradient id="o79" gradientUnits="userSpaceOnUse" x1="1189.78" x2="1761.78"><stop offset="0" stop-color="#00978b"/><stop offset="0.3077" stop-color="#098"/><stop offset="0.3951" stop-color="#549985"/><stop offset="0.451" stop-color="#989984"/><stop offset="0.4965" stop-color="#996b5b"/><stop offset="0.5629" stop-color="#994439"/><stop offset="0.6713" stop-color="#99241b"/><stop offset="0.7063" stop-color="#961c15"/><stop offset="0.7972" stop-color="#7b0d08"/><stop offset="0.986" stop-color="#5f0000"/><stop offset="1" stop-color="#5d0000"/></linearGradient><linearGradient id="o80" gradientUnits="userSpaceOnUse" x1="1191.18" x2="1767.18"><stop offset="0" stop-color="#00978f"/><stop offset="0.3021" stop-color="#02998e"/><stop offset="0.3854" stop-color="#54998d"/><stop offset="0.441" stop-color="#99988b"/><stop offset="0.4826" stop-color="#996c62"/><stop offset="0.5451" stop-color="#99463e"/><stop offset="0.6493" stop-color="#992520"/><stop offset="0.6979" stop-color="#961b16"/><stop offset="0.7882" stop-color="#7c0c09"/><stop offset="0.9826" stop-color="#5e0000"/><stop offset="1" stop-color="#5c0000"/></linearGradient><linearGradient id="o81" gradientUnits="userSpaceOnUse" x1="1192.62" x2="1772.62"><stop offset="0" stop-color="#009794"/><stop offset="0.2931" stop-color="#009995"/><stop offset="0.3759" stop-color="#549994"/><stop offset="0.431" stop-color="#999792"/><stop offset="0.4724" stop-color="#996a66"/><stop offset="0.5345" stop-color="#994442"/><stop offset="0.6379" stop-color="#992422"/><stop offset="0.6931" stop-color="#951817"/><stop offset="0.7862" stop-color="#7a0a09"/><stop offset="0.9862" stop-color="#5c0000"/><stop offset="1" stop-color="#5a0000"/></linearGradient><linearGradient id="o82" gradientUnits="userSpaceOnUse" x1="1194.07" x2="1776.07"><stop offset="0" stop-color="#009697"/><stop offset="0.2887" stop-color="#029799"/><stop offset="0.3711" stop-color="#579699"/><stop offset="0.4227" stop-color="#999598"/><stop offset="0.4639" stop-color="#99696b"/><stop offset="0.5258" stop-color="#994345"/><stop offset="0.6289" stop-color="#992224"/><stop offset="0.6873" stop-color="#961718"/><stop offset="0.7766" stop-color="#7b090a"/><stop offset="0.9759" stop-color="#5d0000"/><stop offset="1" stop-color="#590000"/></linearGradient><linearGradient id="o83" gradientUnits="userSpaceOnUse" x1="1195.54" x2="1781.54"><stop offset="0" stop-color="#009297"/><stop offset="0.2833" stop-color="#039099"/><stop offset="0.3652" stop-color="#568f99"/><stop offset="0.4164" stop-color="#988d99"/><stop offset="0.4608" stop-color="#99616a"/><stop offset="0.5256" stop-color="#993d43"/><stop offset="0.6314" stop-color="#991e23"/><stop offset="0.6792" stop-color="#961519"/><stop offset="0.7679" stop-color="#7b080b"/><stop offset="0.9556" stop-color="#5f0000"/><stop offset="1" stop-color="#570000"/></linearGradient><linearGradient id="o84" gradientUnits="userSpaceOnUse" x1="1197.02" x2="1787.02"><stop offset="0" stop-color="#008d97"/><stop offset="0.2746" stop-color="#018a99"/><stop offset="0.3593" stop-color="#568799"/><stop offset="0.4136" stop-color="#998497"/><stop offset="0.4542" stop-color="#995d6c"/><stop offset="0.5186" stop-color="#993a45"/><stop offset="0.6237" stop-color="#991c24"/><stop offset="0.6712" stop-color="#97131a"/><stop offset="0.7593" stop-color="#7c070c"/><stop offset="0.9356" stop-color="#610000"/><stop offset="1" stop-color="#560000"/></linearGradient><linearGradient id="o85" gradientUnits="userSpaceOnUse" x1="1198.5" x2="1792.5"><stop offset="0" stop-color="#008998"/><stop offset="0.2694" stop-color="#038499"/><stop offset="0.3535" stop-color="#568099"/><stop offset="0.4074" stop-color="#997e99"/><stop offset="0.4478" stop-color="#99596e"/><stop offset="0.5118" stop-color="#993747"/><stop offset="0.6162" stop-color="#991a25"/><stop offset="0.6667" stop-color="#95111b"/><stop offset="0.7576" stop-color="#7b050c"/><stop offset="0.9394" stop-color="#5f0000"/><stop offset="1" stop-color="#540000"/></linearGradient><linearGradient id="o86" gradientUnits="userSpaceOnUse" x1="1199.97" x2="1797.97"><stop offset="0" stop-color="#008598"/><stop offset="0.2609" stop-color="#017e99"/><stop offset="0.3478" stop-color="#567a99"/><stop offset="0.4047" stop-color="#997496"/><stop offset="0.4482" stop-color="#99506a"/><stop offset="0.5151" stop-color="#993044"/><stop offset="0.6254" stop-color="#991523"/><stop offset="0.6589" stop-color="#96101c"/><stop offset="0.7458" stop-color="#7b050d"/><stop offset="0.9398" stop-color="#5d0000"/><stop offset="1" stop-color="#520000"/></linearGradient><linearGradient id="o87" gradientUnits="userSpaceOnUse" x1="1201.43" x2="1803.43"><stop offset="0" stop-color="#008098"/><stop offset="0.2558" stop-color="#027899"/><stop offset="0.3422" stop-color="#557399"/><stop offset="0.3987" stop-color="#996f98"/><stop offset="0.4419" stop-color="#994c6c"/><stop offset="0.5083" stop-color="#992d45"/><stop offset="0.6179" stop-color="#991324"/><stop offset="0.6512" stop-color="#960e1d"/><stop offset="0.7375" stop-color="#7b040e"/><stop offset="0.9734" stop-color="#500"/><stop offset="1" stop-color="#500000"/></linearGradient><linearGradient id="o88" gradientUnits="userSpaceOnUse" x1="1202.88" x2="1806.88"><stop offset="0" stop-color="#007c98"/><stop offset="0.2483" stop-color="#017399"/><stop offset="0.3377" stop-color="#556d99"/><stop offset="0.394" stop-color="#986999"/><stop offset="0.4404" stop-color="#99466b"/><stop offset="0.5066" stop-color="#992a45"/><stop offset="0.6192" stop-color="#991024"/><stop offset="0.649" stop-color="#950c1e"/><stop offset="0.7384" stop-color="#7a020e"/><stop offset="0.9768" stop-color="#530000"/><stop offset="1" stop-color="#4f0000"/></linearGradient><linearGradient id="o89" gradientUnits="userSpaceOnUse" x1="1204.33" x2="1806.33"><stop offset="0" stop-color="#007898"/><stop offset="0.2458" stop-color="#026e99"/><stop offset="0.3355" stop-color="#556799"/><stop offset="0.3953" stop-color="#996197"/><stop offset="0.4419" stop-color="#99406a"/><stop offset="0.5116" stop-color="#992544"/><stop offset="0.6279" stop-color="#990d23"/><stop offset="0.6545" stop-color="#93091d"/><stop offset="0.7475" stop-color="#79000d"/><stop offset="0.9934" stop-color="#500000"/><stop offset="1" stop-color="#4f0000"/></linearGradient><linearGradient id="o90" gradientUnits="userSpaceOnUse" x1="1205.79" x2="1807.79"><stop offset="0" stop-color="#007498"/><stop offset="0.2392" stop-color="#016999"/><stop offset="0.3322" stop-color="#556299"/><stop offset="0.392" stop-color="#995c99"/><stop offset="0.4385" stop-color="#993d6c"/><stop offset="0.5083" stop-color="#992245"/><stop offset="0.6246" stop-color="#990c24"/><stop offset="0.6512" stop-color="#93081e"/><stop offset="0.7442" stop-color="#79000e"/><stop offset="0.9967" stop-color="#4f0000"/><stop offset="1" stop-color="#4e0000"/></linearGradient><linearGradient id="o91" gradientUnits="userSpaceOnUse" x1="1207.29" x2="1807.29"><stop offset="0" stop-color="#007098"/><stop offset="0.2367" stop-color="#026499"/><stop offset="0.3333" stop-color="#585c99"/><stop offset="0.3933" stop-color="#995496"/><stop offset="0.44" stop-color="#99386b"/><stop offset="0.5133" stop-color="#991e44"/><stop offset="0.6333" stop-color="#990923"/><stop offset="0.7333" stop-color="#7b0010"/><stop offset="0.99" stop-color="#500000"/><stop offset="1" stop-color="#4e0000"/></linearGradient><linearGradient id="o92" gradientUnits="userSpaceOnUse" x1="1208.8" x2="1802.8"><stop offset="0" stop-color="#006d98"/><stop offset="0.2323" stop-color="#015f99"/><stop offset="0.33" stop-color="#545799"/><stop offset="0.3939" stop-color="#994f98"/><stop offset="0.4411" stop-color="#99346d"/><stop offset="0.5152" stop-color="#991c46"/><stop offset="0.6364" stop-color="#990724"/><stop offset="0.7407" stop-color="#7a0010"/><stop offset="1" stop-color="#500000"/></linearGradient><linearGradient id="o93" gradientUnits="userSpaceOnUse" x1="1210.36" x2="1790.36"><stop offset="0" stop-color="#006998"/><stop offset="0.2345" stop-color="#025b99"/><stop offset="0.3379" stop-color="#585199"/><stop offset="0.4" stop-color="#994a99"/><stop offset="0.4517" stop-color="#992f6c"/><stop offset="0.5276" stop-color="#991846"/><stop offset="0.6586" stop-color="#970423"/><stop offset="0.7483" stop-color="#7c0012"/><stop offset="1" stop-color="#540001"/></linearGradient><linearGradient id="o94" gradientUnits="userSpaceOnUse" x1="1211.95" x2="1779.95"><stop offset="0" stop-color="#006598"/><stop offset="0.2324" stop-color="#015799"/><stop offset="0.338" stop-color="#544d99"/><stop offset="0.4085" stop-color="#994397"/><stop offset="0.4613" stop-color="#992a6b"/><stop offset="0.5423" stop-color="#991544"/><stop offset="0.6725" stop-color="#960223"/><stop offset="0.7641" stop-color="#7b0012"/><stop offset="1" stop-color="#570002"/></linearGradient><linearGradient id="o95" gradientUnits="userSpaceOnUse" x1="1213.54" x2="1769.54"><stop offset="0" stop-color="#006198"/><stop offset="0.2338" stop-color="#025299"/><stop offset="0.3453" stop-color="#584899"/><stop offset="0.4137" stop-color="#993f98"/><stop offset="0.4676" stop-color="#99276c"/><stop offset="0.5504" stop-color="#991246"/><stop offset="0.6835" stop-color="#960124"/><stop offset="0.777" stop-color="#7b0013"/><stop offset="1" stop-color="#5a0003"/></linearGradient><linearGradient id="o96" gradientUnits="userSpaceOnUse" x1="1215.15" x2="1759.15"><stop offset="0" stop-color="#005e98"/><stop offset="0.2316" stop-color="#014f99"/><stop offset="0.3456" stop-color="#554399"/><stop offset="0.4191" stop-color="#993a99"/><stop offset="0.4779" stop-color="#99236b"/><stop offset="0.5662" stop-color="#990f44"/><stop offset="0.6949" stop-color="#960025"/><stop offset="0.7904" stop-color="#7c0014"/><stop offset="1" stop-color="#5d0004"/></linearGradient><linearGradient id="o97" gradientUnits="userSpaceOnUse" x1="1216.76" x2="1746.76"><stop offset="0" stop-color="#005a98"/><stop offset="0.234" stop-color="#024a99"/><stop offset="0.3547" stop-color="#583f99"/><stop offset="0.4302" stop-color="#993497"/><stop offset="0.4906" stop-color="#991f6a"/><stop offset="0.5811" stop-color="#990c44"/><stop offset="0.7094" stop-color="#970026"/><stop offset="0.8075" stop-color="#7c0015"/><stop offset="1" stop-color="#600006"/></linearGradient><linearGradient id="o98" gradientUnits="userSpaceOnUse" x1="1218.36" x2="1736.36"><stop offset="0" stop-color="#005798"/><stop offset="0.2317" stop-color="#014799"/><stop offset="0.3552" stop-color="#553b99"/><stop offset="0.4363" stop-color="#993098"/><stop offset="0.4981" stop-color="#991c6c"/><stop offset="0.5907" stop-color="#990a45"/><stop offset="0.7143" stop-color="#990029"/><stop offset="0.8263" stop-color="#7b0015"/><stop offset="1" stop-color="#630007"/></linearGradient><linearGradient id="o99" gradientUnits="userSpaceOnUse" x1="1219.96" x2="1725.96"><stop offset="0" stop-color="#005398"/><stop offset="0.2332" stop-color="#024399"/><stop offset="0.3636" stop-color="#583699"/><stop offset="0.4427" stop-color="#992c99"/><stop offset="0.5059" stop-color="#99196d"/><stop offset="0.6047" stop-color="#990745"/><stop offset="0.7154" stop-color="#99002c"/><stop offset="0.7431" stop-color="#940027"/><stop offset="0.8538" stop-color="#790014"/><stop offset="1" stop-color="#650008"/></linearGradient><linearGradient id="o100" gradientUnits="userSpaceOnUse" x1="1221.57" x2="1713.57"><stop offset="0" stop-color="#005098"/><stop offset="0.2317" stop-color="#014099"/><stop offset="0.3659" stop-color="#539"/><stop offset="0.4553" stop-color="#992797"/><stop offset="0.5244" stop-color="#99146a"/><stop offset="0.6301" stop-color="#990443"/><stop offset="0.7561" stop-color="#960029"/><stop offset="0.8659" stop-color="#7b0016"/><stop offset="1" stop-color="#68000a"/></linearGradient><linearGradient id="o101" gradientUnits="userSpaceOnUse" x1="1223.18" x2="1703.18"><stop offset="0" stop-color="#004c98"/><stop offset="0.2333" stop-color="#033c99"/><stop offset="0.375" stop-color="#582e99"/><stop offset="0.4625" stop-color="#992398"/><stop offset="0.5333" stop-color="#99116b"/><stop offset="0.6417" stop-color="#990244"/><stop offset="0.7708" stop-color="#96002a"/><stop offset="0.8833" stop-color="#7b0016"/><stop offset="1" stop-color="#6b000c"/></linearGradient><linearGradient id="o102" gradientUnits="userSpaceOnUse" x1="1224.79" x2="1692.79"><stop offset="0" stop-color="#004998"/><stop offset="0.2308" stop-color="#023999"/><stop offset="0.3761" stop-color="#552b99"/><stop offset="0.4701" stop-color="#991f99"/><stop offset="0.5427" stop-color="#990e6c"/><stop offset="0.6538" stop-color="#990045"/><stop offset="0.7863" stop-color="#97002b"/><stop offset="0.9017" stop-color="#7b0017"/><stop offset="1" stop-color="#6d000e"/></linearGradient><linearGradient id="o103" gradientUnits="userSpaceOnUse" x1="1226.4" x2="1680.4"><stop offset="0" stop-color="#004698"/><stop offset="0.2335" stop-color="#033699"/><stop offset="0.3877" stop-color="#582799"/><stop offset="0.4846" stop-color="#991a97"/><stop offset="0.5595" stop-color="#990b6b"/><stop offset="0.6784" stop-color="#904"/><stop offset="0.8062" stop-color="#97002c"/><stop offset="0.9251" stop-color="#7b0018"/><stop offset="1" stop-color="#700011"/></linearGradient><linearGradient id="o104" gradientUnits="userSpaceOnUse" x1="1227.98" x2="1669.98"><stop offset="0" stop-color="#004398"/><stop offset="0.2308" stop-color="#023399"/><stop offset="0.3891" stop-color="#552499"/><stop offset="0.4932" stop-color="#991798"/><stop offset="0.5701" stop-color="#99086d"/><stop offset="0.6787" stop-color="#990049"/><stop offset="0.8281" stop-color="#96002c"/><stop offset="0.9502" stop-color="#7a0018"/><stop offset="1" stop-color="#730013"/></linearGradient><linearGradient id="o105" gradientUnits="userSpaceOnUse" x1="1229.56" x2="1659.56"><stop offset="0" stop-color="#003f98"/><stop offset="0.2326" stop-color="#032f99"/><stop offset="0.4" stop-color="#582099"/><stop offset="0.5023" stop-color="#991399"/><stop offset="0.586" stop-color="#99056c"/><stop offset="0.693" stop-color="#99004a"/><stop offset="0.8465" stop-color="#96002d"/><stop offset="0.9767" stop-color="#7a0018"/><stop offset="1" stop-color="#760016"/></linearGradient><linearGradient id="o106" gradientUnits="userSpaceOnUse" x1="1231.13" x2="1649.13"><stop offset="0" stop-color="#003c98"/><stop offset="0.2297" stop-color="#022d99"/><stop offset="0.4067" stop-color="#581c99"/><stop offset="0.5167" stop-color="#990f97"/><stop offset="0.6029" stop-color="#99026b"/><stop offset="0.7368" stop-color="#904"/><stop offset="0.866" stop-color="#97002e"/><stop offset="1" stop-color="#7a0019"/></linearGradient><linearGradient id="o107" gradientUnits="userSpaceOnUse" x1="1232.72" x2="1636.72"><stop offset="0" stop-color="#003998"/><stop offset="0.2327" stop-color="#032a99"/><stop offset="0.4158" stop-color="#581999"/><stop offset="0.5297" stop-color="#990c98"/><stop offset="0.6188" stop-color="#99006c"/><stop offset="0.7574" stop-color="#990045"/><stop offset="0.8911" stop-color="#97002e"/><stop offset="1" stop-color="#7e001d"/></linearGradient><linearGradient id="o108" gradientUnits="userSpaceOnUse" x1="1234.37" x2="1626.37"><stop offset="0" stop-color="#003698"/><stop offset="0.2296" stop-color="#022799"/><stop offset="0.4235" stop-color="#581699"/><stop offset="0.5459" stop-color="#990896"/><stop offset="0.6429" stop-color="#99006a"/><stop offset="0.7908" stop-color="#990043"/><stop offset="0.9133" stop-color="#97002f"/><stop offset="1" stop-color="#830021"/></linearGradient><linearGradient id="o109" gradientUnits="userSpaceOnUse" x1="1236.07" x2="1616.07"><stop offset="0" stop-color="#003398"/><stop offset="0.2316" stop-color="#032499"/><stop offset="0.4316" stop-color="#581399"/><stop offset="0.5579" stop-color="#990597"/><stop offset="0.6579" stop-color="#99006b"/><stop offset="0.8105" stop-color="#904"/><stop offset="0.9421" stop-color="#96002f"/><stop offset="1" stop-color="#880025"/></linearGradient><linearGradient id="o110" gradientUnits="userSpaceOnUse" x1="1237.88" x2="1603.88"><stop offset="0" stop-color="#003098"/><stop offset="0.2295" stop-color="#022299"/><stop offset="0.4426" stop-color="#581099"/><stop offset="0.5738" stop-color="#990297"/><stop offset="0.6776" stop-color="#99006b"/><stop offset="0.8361" stop-color="#990045"/><stop offset="0.9727" stop-color="#960030"/><stop offset="1" stop-color="#8f002b"/></linearGradient><linearGradient id="o111" gradientUnits="userSpaceOnUse" x1="1239.78" x2="1593.78"><stop offset="0" stop-color="#002d98"/><stop offset="0.226" stop-color="#021f99"/><stop offset="0.4463" stop-color="#560d99"/><stop offset="0.5876" stop-color="#990098"/><stop offset="0.6949" stop-color="#99006c"/><stop offset="0.8644" stop-color="#990045"/><stop offset="1" stop-color="#960031"/></linearGradient><linearGradient id="o112" gradientUnits="userSpaceOnUse" x1="1241.74" x2="1581.74"><stop offset="0" stop-color="#002a98"/><stop offset="0.2294" stop-color="#031c99"/><stop offset="0.4647" stop-color="#590a99"/><stop offset="0.6059" stop-color="#990098"/><stop offset="0.7235" stop-color="#99006b"/><stop offset="0.9" stop-color="#990045"/><stop offset="1" stop-color="#990037"/></linearGradient><linearGradient id="o113" gradientUnits="userSpaceOnUse" x1="1243.74" x2="1571.74"><stop offset="0" stop-color="#002898"/><stop offset="0.2256" stop-color="#031a99"/><stop offset="0.4695" stop-color="#570799"/><stop offset="0.5976" stop-color="#8e0099"/><stop offset="0.628" stop-color="#990096"/><stop offset="0.75" stop-color="#99006a"/><stop offset="0.939" stop-color="#904"/><stop offset="1" stop-color="#99003b"/></linearGradient><linearGradient id="o114" gradientUnits="userSpaceOnUse" x1="1245.77" x2="1559.77"><stop offset="0" stop-color="#002598"/><stop offset="0.2229" stop-color="#021899"/><stop offset="0.4841" stop-color="#570599"/><stop offset="0.6369" stop-color="#960099"/><stop offset="0.7962" stop-color="#906"/><stop offset="1" stop-color="#990041"/></linearGradient><linearGradient id="o115" gradientUnits="userSpaceOnUse" x1="1247.84" x2="1549.84"><stop offset="0" stop-color="#002298"/><stop offset="0.2185" stop-color="#021699"/><stop offset="0.4901" stop-color="#550299"/><stop offset="0.6689" stop-color="#990096"/><stop offset="0.8079" stop-color="#99006a"/><stop offset="1" stop-color="#990046"/></linearGradient><linearGradient id="o116" gradientUnits="userSpaceOnUse" x1="1249.97" x2="1537.97"><stop offset="0" stop-color="#001f98"/><stop offset="0.2222" stop-color="#031399"/><stop offset="0.5139" stop-color="#580099"/><stop offset="0.6944" stop-color="#990097"/><stop offset="0.8403" stop-color="#99006a"/><stop offset="1" stop-color="#99004d"/></linearGradient><linearGradient id="o117" gradientUnits="userSpaceOnUse" x1="1252.14" x2="1528.14"><stop offset="0" stop-color="#001c98"/><stop offset="0.2174" stop-color="#031199"/><stop offset="0.5217" stop-color="#570099"/><stop offset="0.7174" stop-color="#990097"/><stop offset="0.8696" stop-color="#99006b"/><stop offset="1" stop-color="#990053"/></linearGradient><linearGradient id="o118" gradientUnits="userSpaceOnUse" x1="1254.33" x2="1516.33"><stop offset="0" stop-color="#001a98"/><stop offset="0.2137" stop-color="#020f99"/><stop offset="0.5191" stop-color="#510099"/><stop offset="0.7481" stop-color="#990097"/><stop offset="0.9084" stop-color="#99006b"/><stop offset="1" stop-color="#99005a"/></linearGradient><linearGradient id="o119" gradientUnits="userSpaceOnUse" x1="1256.53" x2="1504.53"><stop offset="0" stop-color="#001798"/><stop offset="0.2097" stop-color="#020d99"/><stop offset="0.5081" stop-color="#490099"/><stop offset="0.7823" stop-color="#990097"/><stop offset="0.9597" stop-color="#99006a"/><stop offset="1" stop-color="#990063"/></linearGradient><linearGradient id="o120" gradientUnits="userSpaceOnUse" x1="1258.76" x2="1494.76"><stop offset="0" stop-color="#001498"/><stop offset="0.2034" stop-color="#020b99"/><stop offset="0.4831" stop-color="#3f0099"/><stop offset="0.8136" stop-color="#990097"/><stop offset="1" stop-color="#99006b"/></linearGradient><linearGradient id="o121" gradientUnits="userSpaceOnUse" x1="1261.02" x2="1483.02"><stop offset="0" stop-color="#001298"/><stop offset="0.2072" stop-color="#030999"/><stop offset="0.4775" stop-color="#3a0099"/><stop offset="0.8288" stop-color="#930099"/><stop offset="0.8739" stop-color="#990092"/><stop offset="1" stop-color="#990075"/></linearGradient><linearGradient id="o122" gradientUnits="userSpaceOnUse" x1="1263.33" x2="1471.33"><stop offset="0" stop-color="#000f98"/><stop offset="0.2019" stop-color="#030799"/><stop offset="0.4712" stop-color="#350099"/><stop offset="0.8558" stop-color="#8e0099"/><stop offset="0.9038" stop-color="#990097"/><stop offset="1" stop-color="#990080"/></linearGradient><linearGradient id="o123" gradientUnits="userSpaceOnUse" x1="1265.69" x2="1461.69"><stop offset="0" stop-color="#000d98"/><stop offset="0.1939" stop-color="#030599"/><stop offset="0.5" stop-color="#380099"/><stop offset="0.9082" stop-color="#910099"/><stop offset="0.9592" stop-color="#990094"/><stop offset="1" stop-color="#99008b"/></linearGradient><linearGradient id="o124" gradientUnits="userSpaceOnUse" x1="1268.09" x2="1450.09"><stop offset="0" stop-color="#000a98"/><stop offset="0.1868" stop-color="#030399"/><stop offset="0.6923" stop-color="#580099"/><stop offset="1" stop-color="#909"/></linearGradient><linearGradient id="o125" gradientUnits="userSpaceOnUse" x1="1270.55" x2="1438.55"><stop offset="0" stop-color="#000797"/><stop offset="0.1786" stop-color="#030199"/><stop offset="0.7381" stop-color="#580099"/><stop offset="1" stop-color="#8a0099"/></linearGradient><linearGradient id="o126" gradientUnits="userSpaceOnUse" x1="1273.07" x2="1429.07"><stop offset="0" stop-color="#000597"/><stop offset="0.1667" stop-color="#030099"/><stop offset="0.7692" stop-color="#570099"/><stop offset="1" stop-color="#7f0099"/></linearGradient><linearGradient id="o127" gradientUnits="userSpaceOnUse" x1="1275.69" x2="1417.69"><stop offset="0" stop-color="#000297"/><stop offset="0.1549" stop-color="#030098"/><stop offset="0.831" stop-color="#580099"/><stop offset="1" stop-color="#720099"/></linearGradient><linearGradient id="o128" gradientUnits="userSpaceOnUse" x1="1278.38" x2="1406.38"><stop offset="0" stop-color="#000097"/><stop offset="0.1406" stop-color="#030098"/><stop offset="0.8906" stop-color="#570099"/><stop offset="1" stop-color="#609"/></linearGradient><linearGradient id="o129" gradientUnits="userSpaceOnUse" x1="1281.11" x2="1395.11"><stop offset="0" stop-color="#000097"/><stop offset="0.1404" stop-color="#040098"/><stop offset="1" stop-color="#5b0099"/></linearGradient><linearGradient id="o130" gradientUnits="userSpaceOnUse" x1="1283.84" x2="1383.84"><stop offset="0" stop-color="#000097"/><stop offset="0.18" stop-color="#090098"/><stop offset="1" stop-color="#500099"/></linearGradient><linearGradient id="o131" gradientUnits="userSpaceOnUse" x1="1286.71" x2="1372.71"><stop offset="0" stop-color="#000097"/><stop offset="1" stop-color="#460099"/></linearGradient><linearGradient id="o132" gradientUnits="userSpaceOnUse" x1="1289.76" x2="1361.76"><stop offset="0" stop-color="#020096"/><stop offset="1" stop-color="#3c0099"/></linearGradient><linearGradient id="o133" gradientUnits="userSpaceOnUse" x1="1293.12" x2="1351.12"><stop offset="0" stop-color="#060096"/><stop offset="1" stop-color="#340099"/></linearGradient><linearGradient id="o134" gradientUnits="userSpaceOnUse" x1="1297.1" x2="1339.1"><stop offset="0" stop-color="#090096"/><stop offset="1" stop-color="#2a0098"/></linearGradient><linearGradient id="i0" gradientUnits="userSpaceOnUse" x1="1420.1" x2="1446.1"><stop offset="0" stop-color="#00ff02"/><stop offset="0.3846" stop-color="#02ff00"/><stop offset="1" stop-color="#16ff00"/></linearGradient><linearGradient id="i1" gradientUnits="userSpaceOnUse" x1="1418.98" x2="1450.98"><stop offset="0" stop-color="#00ff04"/><stop offset="0.3125" stop-color="#02ff01"/><stop offset="1" stop-color="#1fff00"/></linearGradient><linearGradient id="i2" gradientUnits="userSpaceOnUse" x1="1417.87" x2="1455.87"><stop offset="0" stop-color="#00ff06"/><stop offset="0.2632" stop-color="#02ff03"/><stop offset="0.7368" stop-color="#1aff00"/><stop offset="1" stop-color="#28ff00"/></linearGradient><linearGradient id="i3" gradientUnits="userSpaceOnUse" x1="1416.75" x2="1460.75"><stop offset="0" stop-color="#00ff09"/><stop offset="0.2273" stop-color="#02ff05"/><stop offset="0.6818" stop-color="#1dff00"/><stop offset="1" stop-color="#30ff00"/></linearGradient><linearGradient id="i4" gradientUnits="userSpaceOnUse" x1="1415.64" x2="1465.64"><stop offset="0" stop-color="#00ff0b"/><stop offset="0.2" stop-color="#02ff07"/><stop offset="0.72" stop-color="#25ff00"/><stop offset="1" stop-color="#3aff00"/></linearGradient><linearGradient id="i5" gradientUnits="userSpaceOnUse" x1="1414.52" x2="1470.52"><stop offset="0" stop-color="#00ff0d"/><stop offset="0.1786" stop-color="#02ff0a"/><stop offset="0.75" stop-color="#2eff00"/><stop offset="1" stop-color="#43ff00"/></linearGradient><linearGradient id="i6" gradientUnits="userSpaceOnUse" x1="1413.41" x2="1475.41"><stop offset="0" stop-color="#00ff0f"/><stop offset="0.1613" stop-color="#02ff0c"/><stop offset="0.7742" stop-color="#38ff00"/><stop offset="1" stop-color="#4dff00"/></linearGradient><linearGradient id="i7" gradientUnits="userSpaceOnUse" x1="1412.29" x2="1480.29"><stop offset="0" stop-color="#00ff12"/><stop offset="0.1471" stop-color="#02ff0e"/><stop offset="0.7941" stop-color="#42ff00"/><stop offset="1" stop-color="#58ff00"/></linearGradient><linearGradient id="i8" gradientUnits="userSpaceOnUse" x1="1411.18" x2="1487.18"><stop offset="0" stop-color="#00ff14"/><stop offset="0.1316" stop-color="#02ff11"/><stop offset="0.7895" stop-color="#4cff00"/><stop offset="1" stop-color="#6f0"/></linearGradient><linearGradient id="i9" gradientUnits="userSpaceOnUse" x1="1410.06" x2="1492.06"><stop offset="0" stop-color="#00ff16"/><stop offset="0.122" stop-color="#02ff13"/><stop offset="0.7317" stop-color="#4cff01"/><stop offset="1" stop-color="#71ff00"/></linearGradient><linearGradient id="i10" gradientUnits="userSpaceOnUse" x1="1408.95" x2="1496.95"><stop offset="0" stop-color="#00ff19"/><stop offset="0.1136" stop-color="#02ff16"/><stop offset="0.6818" stop-color="#4dff03"/><stop offset="0.8409" stop-color="#65ff00"/><stop offset="1" stop-color="#7dff00"/></linearGradient><linearGradient id="i11" gradientUnits="userSpaceOnUse" x1="1407.83" x2="1501.83"><stop offset="0" stop-color="#00ff1b"/><stop offset="0.1064" stop-color="#02ff18"/><stop offset="0.6383" stop-color="#4eff06"/><stop offset="0.8298" stop-color="#6cff00"/><stop offset="1" stop-color="#89ff00"/></linearGradient><linearGradient id="i12" gradientUnits="userSpaceOnUse" x1="1406.72" x2="1506.72"><stop offset="0" stop-color="#00ff1e"/><stop offset="0.1" stop-color="#02ff1b"/><stop offset="0.58" stop-color="#4bff09"/><stop offset="0.84" stop-color="#78ff00"/><stop offset="1" stop-color="#96ff00"/></linearGradient><linearGradient id="i13" gradientUnits="userSpaceOnUse" x1="1405.6" x2="1511.6"><stop offset="0" stop-color="#00ff21"/><stop offset="0.0943" stop-color="#02ff1d"/><stop offset="0.5472" stop-color="#4cff0c"/><stop offset="0.8491" stop-color="#85ff00"/><stop offset="1" stop-color="#a3ff00"/></linearGradient><linearGradient id="i14" gradientUnits="userSpaceOnUse" x1="1404.49" x2="1516.49"><stop offset="0" stop-color="#00ff23"/><stop offset="0.0893" stop-color="#02ff20"/><stop offset="0.5179" stop-color="#4dff0e"/><stop offset="0.8571" stop-color="#92ff00"/><stop offset="1" stop-color="#b1ff00"/></linearGradient><linearGradient id="i15" gradientUnits="userSpaceOnUse" x1="1403.37" x2="1521.37"><stop offset="0" stop-color="#00ff26"/><stop offset="0.0847" stop-color="#02ff23"/><stop offset="0.4915" stop-color="#4eff11"/><stop offset="0.8475" stop-color="#9bff00"/><stop offset="1" stop-color="#c0ff00"/></linearGradient><linearGradient id="i16" gradientUnits="userSpaceOnUse" x1="1402.26" x2="1526.26"><stop offset="0" stop-color="#00ff29"/><stop offset="0.0806" stop-color="#02ff25"/><stop offset="0.4677" stop-color="#4fff14"/><stop offset="0.8065" stop-color="#9dff02"/><stop offset="0.9516" stop-color="#c2ff00"/><stop offset="1" stop-color="#cfff00"/></linearGradient><linearGradient id="i17" gradientUnits="userSpaceOnUse" x1="1401.14" x2="1531.14"><stop offset="0" stop-color="#00ff2c"/><stop offset="0.0769" stop-color="#02ff28"/><stop offset="0.4308" stop-color="#4cff18"/><stop offset="0.7538" stop-color="#9aff06"/><stop offset="0.8769" stop-color="#bcff00"/><stop offset="1" stop-color="#dfff00"/></linearGradient><linearGradient id="i18" gradientUnits="userSpaceOnUse" x1="1400.03" x2="1536.03"><stop offset="0" stop-color="#00ff2e"/><stop offset="0.0735" stop-color="#02ff2b"/><stop offset="0.4118" stop-color="#4dff1b"/><stop offset="0.7206" stop-color="#9cff09"/><stop offset="0.8824" stop-color="#cbff00"/><stop offset="1" stop-color="#f0ff00"/></linearGradient><linearGradient id="i19" gradientUnits="userSpaceOnUse" x1="1398.91" x2="1540.91"><stop offset="0" stop-color="#00ff31"/><stop offset="0.0704" stop-color="#02ff2e"/><stop offset="0.3944" stop-color="#4eff1e"/><stop offset="0.6761" stop-color="#9aff0d"/><stop offset="0.8873" stop-color="#dbff00"/><stop offset="0.9859" stop-color="#fcff00"/><stop offset="1" stop-color="#fffd00"/></linearGradient><linearGradient id="i20" gradientUnits="userSpaceOnUse" x1="1397.8" x2="1547.8"><stop offset="0" stop-color="#00ff34"/><stop offset="0.0667" stop-color="#02ff31"/><stop offset="0.3733" stop-color="#4eff21"/><stop offset="0.64" stop-color="#9cff10"/><stop offset="0.88" stop-color="#ecff00"/><stop offset="0.9333" stop-color="#fffe00"/><stop offset="1" stop-color="#ffe800"/></linearGradient><linearGradient id="i21" gradientUnits="userSpaceOnUse" x1="1396.68" x2="1552.68"><stop offset="0" stop-color="#00ff37"/><stop offset="0.0513" stop-color="#00ff35"/><stop offset="0.2564" stop-color="#33ff2a"/><stop offset="0.5256" stop-color="#81ff19"/><stop offset="0.7564" stop-color="#ceff09"/><stop offset="0.8846" stop-color="#feff00"/><stop offset="1" stop-color="#ffd800"/></linearGradient><linearGradient id="i22" gradientUnits="userSpaceOnUse" x1="1395.57" x2="1557.57"><stop offset="0" stop-color="#00ff3b"/><stop offset="0.0494" stop-color="#00ff38"/><stop offset="0.2469" stop-color="#33ff2d"/><stop offset="0.4938" stop-color="#7eff1d"/><stop offset="0.716" stop-color="#ccff0d"/><stop offset="0.8395" stop-color="#fcff03"/><stop offset="0.8642" stop-color="#fff801"/><stop offset="0.9877" stop-color="#ffce00"/><stop offset="1" stop-color="#ffca00"/></linearGradient><linearGradient id="i23" gradientUnits="userSpaceOnUse" x1="1394.45" x2="1562.45"><stop offset="0" stop-color="#00ff3e"/><stop offset="0.0476" stop-color="#00ff3b"/><stop offset="0.2381" stop-color="#34ff30"/><stop offset="0.4762" stop-color="#80ff21"/><stop offset="0.6905" stop-color="#ceff11"/><stop offset="0.8095" stop-color="#ffff06"/><stop offset="0.8929" stop-color="#ffdf00"/><stop offset="1" stop-color="#ffbe00"/></linearGradient><linearGradient id="i24" gradientUnits="userSpaceOnUse" x1="1393.34" x2="1567.34"><stop offset="0" stop-color="#00ff41"/><stop offset="0.046" stop-color="#00ff3e"/><stop offset="0.2184" stop-color="#31ff34"/><stop offset="0.4483" stop-color="#7dff25"/><stop offset="0.6552" stop-color="#ccff15"/><stop offset="0.7701" stop-color="#feff0b"/><stop offset="0.8966" stop-color="#ffd000"/><stop offset="1" stop-color="#ffb200"/></linearGradient><linearGradient id="i25" gradientUnits="userSpaceOnUse" x1="1392.22" x2="1572.22"><stop offset="0" stop-color="#0f4"/><stop offset="0.0444" stop-color="#00ff42"/><stop offset="0.2111" stop-color="#32ff38"/><stop offset="0.4333" stop-color="#7fff28"/><stop offset="0.6333" stop-color="#cfff18"/><stop offset="0.7333" stop-color="#fcff10"/><stop offset="0.7444" stop-color="#fffd0e"/><stop offset="0.8444" stop-color="#ffd504"/><stop offset="0.9111" stop-color="#ffbf00"/><stop offset="1" stop-color="#ffa600"/></linearGradient><linearGradient id="i26" gradientUnits="userSpaceOnUse" x1="1391.11" x2="1577.11"><stop offset="0" stop-color="#00ff48"/><stop offset="0.043" stop-color="#00ff45"/><stop offset="0.2043" stop-color="#32ff3b"/><stop offset="0.4194" stop-color="#80ff2c"/><stop offset="0.6129" stop-color="#d2ff1c"/><stop offset="0.7097" stop-color="#ffff13"/><stop offset="0.8065" stop-color="#ffd508"/><stop offset="0.914" stop-color="#ffb200"/><stop offset="1" stop-color="#ff9c00"/></linearGradient><linearGradient id="i27" gradientUnits="userSpaceOnUse" x1="1389.99" x2="1581.99"><stop offset="0" stop-color="#00ff4b"/><stop offset="0.0417" stop-color="#00ff49"/><stop offset="0.1979" stop-color="#33ff3f"/><stop offset="0.3958" stop-color="#7eff30"/><stop offset="0.5729" stop-color="#cbff22"/><stop offset="0.6771" stop-color="#fdff18"/><stop offset="0.7917" stop-color="#ffcf0a"/><stop offset="0.9062" stop-color="#fa0"/><stop offset="1" stop-color="#ff9200"/></linearGradient><linearGradient id="i28" gradientUnits="userSpaceOnUse" x1="1388.88" x2="1586.88"><stop offset="0" stop-color="#00ff4f"/><stop offset="0.0404" stop-color="#00ff4c"/><stop offset="0.1818" stop-color="#30ff43"/><stop offset="0.3737" stop-color="#7bff35"/><stop offset="0.5455" stop-color="#c8ff26"/><stop offset="0.6465" stop-color="#fcff1d"/><stop offset="0.6566" stop-color="#fffd1c"/><stop offset="0.7475" stop-color="#ffd30f"/><stop offset="0.8586" stop-color="#ffad04"/><stop offset="0.9293" stop-color="#ff9a00"/><stop offset="1" stop-color="#ff8900"/></linearGradient><linearGradient id="i29" gradientUnits="userSpaceOnUse" x1="1387.76" x2="1591.76"><stop offset="0" stop-color="#00ff52"/><stop offset="0.0392" stop-color="#00ff50"/><stop offset="0.1765" stop-color="#30ff47"/><stop offset="0.3627" stop-color="#7cff39"/><stop offset="0.5294" stop-color="#cbff2a"/><stop offset="0.6275" stop-color="#ffff21"/><stop offset="0.7157" stop-color="#ffd413"/><stop offset="0.8235" stop-color="#ffae07"/><stop offset="0.9216" stop-color="#ff9200"/><stop offset="0.9902" stop-color="#ff8300"/><stop offset="1" stop-color="#fd8000"/></linearGradient><linearGradient id="i30" gradientUnits="userSpaceOnUse" x1="1386.65" x2="1596.65"><stop offset="0" stop-color="#00ff56"/><stop offset="0.0381" stop-color="#00ff53"/><stop offset="0.1714" stop-color="#31ff4a"/><stop offset="0.3524" stop-color="#7eff3d"/><stop offset="0.5143" stop-color="#ceff2e"/><stop offset="0.6" stop-color="#fdff26"/><stop offset="0.6571" stop-color="#ffe31c"/><stop offset="0.7524" stop-color="#ffbb0f"/><stop offset="0.8667" stop-color="#ff9704"/><stop offset="0.9429" stop-color="#ff8500"/><stop offset="0.9714" stop-color="#fe7e00"/><stop offset="1" stop-color="#f67500"/></linearGradient><linearGradient id="i31" gradientUnits="userSpaceOnUse" x1="1385.53" x2="1601.53"><stop offset="0" stop-color="#00ff5a"/><stop offset="0.037" stop-color="#00ff57"/><stop offset="0.1574" stop-color="#2eff4f"/><stop offset="0.3333" stop-color="#7bff41"/><stop offset="0.4907" stop-color="#cf3"/><stop offset="0.5741" stop-color="#fbff2b"/><stop offset="0.5833" stop-color="#fffd2a"/><stop offset="0.6574" stop-color="#ffd61c"/><stop offset="0.75" stop-color="#ffb110"/><stop offset="0.8704" stop-color="#ff8e04"/><stop offset="0.9444" stop-color="#ff7c00"/><stop offset="1" stop-color="#f16b00"/></linearGradient><linearGradient id="i32" gradientUnits="userSpaceOnUse" x1="1384.42" x2="1608.42"><stop offset="0" stop-color="#00ff5d"/><stop offset="0.0357" stop-color="#00ff5b"/><stop offset="0.1518" stop-color="#2eff53"/><stop offset="0.3214" stop-color="#7dff45"/><stop offset="0.4643" stop-color="#c9ff38"/><stop offset="0.5536" stop-color="#ffff2f"/><stop offset="0.625" stop-color="#ffd821"/><stop offset="0.7143" stop-color="#ffb214"/><stop offset="0.8304" stop-color="#ff8e07"/><stop offset="0.9196" stop-color="#fe7800"/><stop offset="1" stop-color="#e96000"/></linearGradient><linearGradient id="i33" gradientUnits="userSpaceOnUse" x1="1383.3" x2="1613.3"><stop offset="0" stop-color="#00ff61"/><stop offset="0.0348" stop-color="#00ff5f"/><stop offset="0.1478" stop-color="#2fff57"/><stop offset="0.3043" stop-color="#7aff4a"/><stop offset="0.4435" stop-color="#c7ff3e"/><stop offset="0.5304" stop-color="#fdff34"/><stop offset="0.5565" stop-color="#fff12f"/><stop offset="0.6348" stop-color="#ffc820"/><stop offset="0.7304" stop-color="#ffa312"/><stop offset="0.8522" stop-color="#ff8005"/><stop offset="0.9043" stop-color="#fd7401"/><stop offset="1" stop-color="#e55800"/></linearGradient><linearGradient id="i34" gradientUnits="userSpaceOnUse" x1="1382.19" x2="1618.19"><stop offset="0" stop-color="#00ff65"/><stop offset="0.0339" stop-color="#00ff63"/><stop offset="0.1356" stop-color="#2bff5c"/><stop offset="0.2881" stop-color="#77ff4f"/><stop offset="0.4237" stop-color="#c4ff43"/><stop offset="0.5085" stop-color="#fbff3a"/><stop offset="0.5169" stop-color="#fffd39"/><stop offset="0.5847" stop-color="#ffd529"/><stop offset="0.6695" stop-color="#ffb01a"/><stop offset="0.7797" stop-color="#ff8b0c"/><stop offset="0.8814" stop-color="#ff7203"/><stop offset="0.9576" stop-color="#ea5b00"/><stop offset="1" stop-color="#e05100"/></linearGradient><linearGradient id="i35" gradientUnits="userSpaceOnUse" x1="1381.08" x2="1623.08"><stop offset="0" stop-color="#00ff69"/><stop offset="0.0331" stop-color="#00ff67"/><stop offset="0.1322" stop-color="#2cff60"/><stop offset="0.281" stop-color="#78ff54"/><stop offset="0.4132" stop-color="#c7ff47"/><stop offset="0.4959" stop-color="#ffff3f"/><stop offset="0.562" stop-color="#ffd62e"/><stop offset="0.6446" stop-color="#ffb01f"/><stop offset="0.7521" stop-color="#ff8b10"/><stop offset="0.8678" stop-color="#fe6e04"/><stop offset="0.9421" stop-color="#e95700"/><stop offset="1" stop-color="#dc4a00"/></linearGradient><linearGradient id="i36" gradientUnits="userSpaceOnUse" x1="1379.96" x2="1627.96"><stop offset="0" stop-color="#00ff6e"/><stop offset="0.0323" stop-color="#00ff6b"/><stop offset="0.129" stop-color="#2cff64"/><stop offset="0.2742" stop-color="#7aff58"/><stop offset="0.4032" stop-color="#caff4c"/><stop offset="0.4758" stop-color="#fdff44"/><stop offset="0.4919" stop-color="#fff640"/><stop offset="0.5565" stop-color="#ffcf30"/><stop offset="0.6371" stop-color="#ffaa20"/><stop offset="0.7419" stop-color="#ff8611"/><stop offset="0.8468" stop-color="#ff6c06"/><stop offset="0.9355" stop-color="#e65200"/><stop offset="1" stop-color="#d94400"/></linearGradient><linearGradient id="i37" gradientUnits="userSpaceOnUse" x1="1378.85" x2="1632.85"><stop offset="0" stop-color="#00ff72"/><stop offset="0.0315" stop-color="#00ff70"/><stop offset="0.1181" stop-color="#29ff69"/><stop offset="0.2598" stop-color="#77ff5e"/><stop offset="0.3858" stop-color="#c8ff52"/><stop offset="0.4646" stop-color="#fffd49"/><stop offset="0.5276" stop-color="#ffd437"/><stop offset="0.6063" stop-color="#ffad26"/><stop offset="0.7008" stop-color="#ff8b17"/><stop offset="0.8346" stop-color="#fe6807"/><stop offset="0.9291" stop-color="#e34d00"/><stop offset="1" stop-color="#d53e00"/></linearGradient><linearGradient id="i38" gradientUnits="userSpaceOnUse" x1="1377.73" x2="1637.73"><stop offset="0" stop-color="#00ff76"/><stop offset="0.0308" stop-color="#00ff74"/><stop offset="0.1154" stop-color="#29ff6e"/><stop offset="0.2462" stop-color="#74ff63"/><stop offset="0.3692" stop-color="#c5ff58"/><stop offset="0.4462" stop-color="#ffff4f"/><stop offset="0.5077" stop-color="#ffd53c"/><stop offset="0.5846" stop-color="#ffae2a"/><stop offset="0.6769" stop-color="#ff8b1a"/><stop offset="0.8" stop-color="#ff6a0b"/><stop offset="0.8154" stop-color="#ff660a"/><stop offset="0.9077" stop-color="#e44b01"/><stop offset="1" stop-color="#d23900"/></linearGradient><linearGradient id="i39" gradientUnits="userSpaceOnUse" x1="1376.62" x2="1642.62"><stop offset="0" stop-color="#00ff7b"/><stop offset="0.0301" stop-color="#00ff79"/><stop offset="0.1053" stop-color="#26ff73"/><stop offset="0.2331" stop-color="#71ff69"/><stop offset="0.3459" stop-color="#bdff5e"/><stop offset="0.4286" stop-color="#fcff55"/><stop offset="0.4436" stop-color="#fff650"/><stop offset="0.5038" stop-color="#ffcd3d"/><stop offset="0.5789" stop-color="#ffa82c"/><stop offset="0.6767" stop-color="#ff841b"/><stop offset="0.8045" stop-color="#fe620b"/><stop offset="0.8947" stop-color="#e44802"/><stop offset="1" stop-color="#cf3500"/></linearGradient><linearGradient id="i40" gradientUnits="userSpaceOnUse" x1="1375.5" x2="1647.5"><stop offset="0" stop-color="#00ff80"/><stop offset="0.0294" stop-color="#00ff7e"/><stop offset="0.0956" stop-color="#22ff79"/><stop offset="0.2206" stop-color="#6eff6f"/><stop offset="0.3309" stop-color="#baff64"/><stop offset="0.4191" stop-color="#fffe5a"/><stop offset="0.4706" stop-color="#ffd848"/><stop offset="0.5368" stop-color="#ffb235"/><stop offset="0.625" stop-color="#ff8e23"/><stop offset="0.7353" stop-color="#ff6d13"/><stop offset="0.7868" stop-color="#ff600d"/><stop offset="0.8824" stop-color="#e34503"/><stop offset="0.9706" stop-color="#d13500"/><stop offset="1" stop-color="#cd3000"/></linearGradient><linearGradient id="i41" gradientUnits="userSpaceOnUse" x1="1374.39" x2="1652.39"><stop offset="0" stop-color="#00ff84"/><stop offset="0.0288" stop-color="#00ff82"/><stop offset="0.0935" stop-color="#23ff7e"/><stop offset="0.2158" stop-color="#6fff74"/><stop offset="0.3237" stop-color="#bdff6a"/><stop offset="0.4029" stop-color="#feff61"/><stop offset="0.4604" stop-color="#ffd44b"/><stop offset="0.5252" stop-color="#ffaf38"/><stop offset="0.6115" stop-color="#ff8b26"/><stop offset="0.7194" stop-color="#ff6a15"/><stop offset="0.777" stop-color="#fe5d0e"/><stop offset="0.8633" stop-color="#e44405"/><stop offset="0.9568" stop-color="#d13200"/><stop offset="1" stop-color="#ca2c00"/></linearGradient><linearGradient id="i42" gradientUnits="userSpaceOnUse" x1="1373.27" x2="1657.27"><stop offset="0" stop-color="#00ff89"/><stop offset="0.0282" stop-color="#00ff87"/><stop offset="0.0845" stop-color="#1fff83"/><stop offset="0.2042" stop-color="#6cff7a"/><stop offset="0.3099" stop-color="#bbff70"/><stop offset="0.3873" stop-color="#fcff68"/><stop offset="0.4014" stop-color="#fff562"/><stop offset="0.4577" stop-color="#ffcc4c"/><stop offset="0.5282" stop-color="#ffa538"/><stop offset="0.6127" stop-color="#ff8326"/><stop offset="0.7254" stop-color="#ff6315"/><stop offset="0.7676" stop-color="#fd590f"/><stop offset="0.8521" stop-color="#e34106"/><stop offset="0.9577" stop-color="#ce2e00"/><stop offset="1" stop-color="#c82800"/></linearGradient><linearGradient id="i43" gradientUnits="userSpaceOnUse" x1="1372.16" x2="1664.16"><stop offset="0" stop-color="#00ff8e"/><stop offset="0.0274" stop-color="#00ff8c"/><stop offset="0.0822" stop-color="#1fff88"/><stop offset="0.1918" stop-color="#68ff80"/><stop offset="0.2945" stop-color="#b8ff76"/><stop offset="0.3767" stop-color="#fffe6d"/><stop offset="0.4247" stop-color="#ffd657"/><stop offset="0.4863" stop-color="#ffb042"/><stop offset="0.5616" stop-color="#ff8d2f"/><stop offset="0.6575" stop-color="#ff6d1e"/><stop offset="0.7466" stop-color="#ff5711"/><stop offset="0.8288" stop-color="#e44008"/><stop offset="0.9384" stop-color="#cd2c00"/><stop offset="1" stop-color="#c52400"/></linearGradient><linearGradient id="i44" gradientUnits="userSpaceOnUse" x1="1371.04" x2="1669.04"><stop offset="0" stop-color="#00ff93"/><stop offset="0.0268" stop-color="#00ff91"/><stop offset="0.0738" stop-color="#1bff8e"/><stop offset="0.1812" stop-color="#65ff86"/><stop offset="0.2819" stop-color="#b5ff7d"/><stop offset="0.3624" stop-color="#feff74"/><stop offset="0.4161" stop-color="#ffd35b"/><stop offset="0.4765" stop-color="#ffad45"/><stop offset="0.5503" stop-color="#ff8b32"/><stop offset="0.651" stop-color="#ff691f"/><stop offset="0.7383" stop-color="#fe5313"/><stop offset="0.8188" stop-color="#e33d09"/><stop offset="0.9262" stop-color="#cd2a00"/><stop offset="1" stop-color="#c32100"/></linearGradient><linearGradient id="i45" gradientUnits="userSpaceOnUse" x1="1369.93" x2="1673.93"><stop offset="0" stop-color="#00ff98"/><stop offset="0.0263" stop-color="#00ff97"/><stop offset="0.0724" stop-color="#1cff94"/><stop offset="0.1776" stop-color="#66ff8b"/><stop offset="0.2697" stop-color="#b2ff83"/><stop offset="0.3487" stop-color="#fcff7b"/><stop offset="0.3553" stop-color="#fffc79"/><stop offset="0.4013" stop-color="#ffd462"/><stop offset="0.4605" stop-color="#ffad4b"/><stop offset="0.5329" stop-color="#ff8b36"/><stop offset="0.625" stop-color="#ff6b23"/><stop offset="0.7237" stop-color="#ff5215"/><stop offset="0.8092" stop-color="#e23a0a"/><stop offset="0.9145" stop-color="#cc2701"/><stop offset="1" stop-color="#c21d00"/></linearGradient><linearGradient id="i46" gradientUnits="userSpaceOnUse" x1="1368.81" x2="1678.81"><stop offset="0" stop-color="#00ff9e"/><stop offset="0.0258" stop-color="#00ff9c"/><stop offset="0.0645" stop-color="#18ff9a"/><stop offset="0.1677" stop-color="#63ff92"/><stop offset="0.2581" stop-color="#afff8a"/><stop offset="0.3419" stop-color="#fffe81"/><stop offset="0.3871" stop-color="#ffd568"/><stop offset="0.4452" stop-color="#ffae50"/><stop offset="0.5161" stop-color="#ff8b3b"/><stop offset="0.6065" stop-color="#ff6a27"/><stop offset="0.7161" stop-color="#fe4e16"/><stop offset="0.7935" stop-color="#e3380b"/><stop offset="0.8968" stop-color="#cd2602"/><stop offset="0.9935" stop-color="#c11b00"/><stop offset="1" stop-color="#c01b00"/></linearGradient><linearGradient id="i47" gradientUnits="userSpaceOnUse" x1="1367.7" x2="1683.7"><stop offset="0" stop-color="#00ffa3"/><stop offset="0.0253" stop-color="#00ffa2"/><stop offset="0.0633" stop-color="#18ff9f"/><stop offset="0.1646" stop-color="#64ff98"/><stop offset="0.2532" stop-color="#b2ff90"/><stop offset="0.3291" stop-color="#feff89"/><stop offset="0.3797" stop-color="#ffd16c"/><stop offset="0.4367" stop-color="#ffab54"/><stop offset="0.5063" stop-color="#ff883d"/><stop offset="0.5949" stop-color="#ff6829"/><stop offset="0.7025" stop-color="#ff4c18"/><stop offset="0.7848" stop-color="#e3360c"/><stop offset="0.8861" stop-color="#cd2403"/><stop offset="0.9747" stop-color="#c11a00"/><stop offset="1" stop-color="#bf1800"/></linearGradient><linearGradient id="i48" gradientUnits="userSpaceOnUse" x1="1366.58" x2="1688.58"><stop offset="0" stop-color="#00ffa9"/><stop offset="0.0248" stop-color="#00ffa8"/><stop offset="0.0621" stop-color="#19ffa5"/><stop offset="0.1615" stop-color="#66ff9e"/><stop offset="0.2484" stop-color="#b5ff97"/><stop offset="0.3168" stop-color="#fcff91"/><stop offset="0.323" stop-color="#fffc8e"/><stop offset="0.3665" stop-color="#ffd373"/><stop offset="0.4224" stop-color="#ffab59"/><stop offset="0.4907" stop-color="#ff8842"/><stop offset="0.5776" stop-color="#ff672d"/><stop offset="0.6957" stop-color="#fe4919"/><stop offset="0.7702" stop-color="#e4340e"/><stop offset="0.8696" stop-color="#cd2305"/><stop offset="0.9689" stop-color="#c01800"/><stop offset="1" stop-color="#bd1500"/></linearGradient><linearGradient id="i49" gradientUnits="userSpaceOnUse" x1="1365.47" x2="1693.47"><stop offset="0" stop-color="#00ffaf"/><stop offset="0.0244" stop-color="#00ffae"/><stop offset="0.0549" stop-color="#14ffac"/><stop offset="0.1463" stop-color="#5dffa6"/><stop offset="0.2317" stop-color="#acff9f"/><stop offset="0.311" stop-color="#fffe97"/><stop offset="0.3537" stop-color="#ffd47b"/><stop offset="0.4024" stop-color="#ffaf62"/><stop offset="0.4634" stop-color="#ff8d4b"/><stop offset="0.5427" stop-color="#ff6d35"/><stop offset="0.6463" stop-color="#ff4f20"/><stop offset="0.6829" stop-color="#ff471b"/><stop offset="0.7683" stop-color="#e1300e"/><stop offset="0.8659" stop-color="#cc2005"/><stop offset="0.9695" stop-color="#bf1500"/><stop offset="1" stop-color="#bc1300"/></linearGradient><linearGradient id="i50" gradientUnits="userSpaceOnUse" x1="1364.35" x2="1698.35"><stop offset="0" stop-color="#00ffb5"/><stop offset="0.024" stop-color="#00ffb4"/><stop offset="0.0539" stop-color="#15ffb2"/><stop offset="0.1437" stop-color="#5fffac"/><stop offset="0.2275" stop-color="#afffa6"/><stop offset="0.2994" stop-color="#feffa0"/><stop offset="0.3473" stop-color="#ffd07e"/><stop offset="0.3952" stop-color="#ffac65"/><stop offset="0.4611" stop-color="#ff874c"/><stop offset="0.5449" stop-color="#ff6634"/><stop offset="0.6527" stop-color="#ff4920"/><stop offset="0.6766" stop-color="#ff441c"/><stop offset="0.7485" stop-color="#e43010"/><stop offset="0.8443" stop-color="#cd2007"/><stop offset="0.9701" stop-color="#bd1300"/><stop offset="1" stop-color="#bb1000"/></linearGradient><linearGradient id="i51" gradientUnits="userSpaceOnUse" x1="1363.24" x2="1703.24"><stop offset="0" stop-color="#0fb"/><stop offset="0.0235" stop-color="#00ffba"/><stop offset="0.0529" stop-color="#15ffb8"/><stop offset="0.1412" stop-color="#60ffb3"/><stop offset="0.2176" stop-color="#abffae"/><stop offset="0.2882" stop-color="#fbffa8"/><stop offset="0.2941" stop-color="#fffca5"/><stop offset="0.3294" stop-color="#ffd68a"/><stop offset="0.3765" stop-color="#ffb06e"/><stop offset="0.4353" stop-color="#ff8d55"/><stop offset="0.5118" stop-color="#ff6c3d"/><stop offset="0.6118" stop-color="#ff4e27"/><stop offset="0.6706" stop-color="#fd401d"/><stop offset="0.7412" stop-color="#e32e11"/><stop offset="0.8353" stop-color="#cd1e07"/><stop offset="0.9647" stop-color="#bc1100"/><stop offset="1" stop-color="#ba0e00"/></linearGradient><linearGradient id="i52" gradientUnits="userSpaceOnUse" x1="1362.12" x2="1708.12"><stop offset="0" stop-color="#00ffc1"/><stop offset="0.0231" stop-color="#00ffc0"/><stop offset="0.0462" stop-color="#11ffbf"/><stop offset="0.1329" stop-color="#5cffba"/><stop offset="0.2081" stop-color="#a8ffb5"/><stop offset="0.2832" stop-color="#fffeaf"/><stop offset="0.3179" stop-color="#ffd892"/><stop offset="0.3642" stop-color="#ffb175"/><stop offset="0.422" stop-color="#ff8d5a"/><stop offset="0.4971" stop-color="#ff6c41"/><stop offset="0.5954" stop-color="#ff4d2a"/><stop offset="0.659" stop-color="#ff3f1f"/><stop offset="0.7283" stop-color="#e42c13"/><stop offset="0.8208" stop-color="#cd1d09"/><stop offset="0.9422" stop-color="#bd1000"/><stop offset="1" stop-color="#b90c00"/></linearGradient><linearGradient id="i53" gradientUnits="userSpaceOnUse" x1="1361.01" x2="1713.01"><stop offset="0" stop-color="#00ffc8"/><stop offset="0.0227" stop-color="#00ffc7"/><stop offset="0.0455" stop-color="#11ffc6"/><stop offset="0.1307" stop-color="#5effc2"/><stop offset="0.2045" stop-color="#abffbd"/><stop offset="0.2727" stop-color="#fdffb8"/><stop offset="0.3182" stop-color="#ffce92"/><stop offset="0.3636" stop-color="#ffa975"/><stop offset="0.4205" stop-color="#ff875b"/><stop offset="0.4943" stop-color="#ff6742"/><stop offset="0.5909" stop-color="#ff4a2b"/><stop offset="0.6534" stop-color="#fe3b20"/><stop offset="0.7216" stop-color="#e32a14"/><stop offset="0.8125" stop-color="#cd1b09"/><stop offset="0.9375" stop-color="#bd0e00"/><stop offset="1" stop-color="#b80a00"/></linearGradient><linearGradient id="i54" gradientUnits="userSpaceOnUse" x1="1359.89" x2="1717.89"><stop offset="0" stop-color="#00ffcf"/><stop offset="0.0223" stop-color="#00ffce"/><stop offset="0.0447" stop-color="#11ffcd"/><stop offset="0.1229" stop-color="#5affc9"/><stop offset="0.1955" stop-color="#a8ffc5"/><stop offset="0.2626" stop-color="#fbffc1"/><stop offset="0.2682" stop-color="#fffcbe"/><stop offset="0.3017" stop-color="#ffd59f"/><stop offset="0.3464" stop-color="#ffae80"/><stop offset="0.4022" stop-color="#ff8a63"/><stop offset="0.4749" stop-color="#ff6948"/><stop offset="0.5698" stop-color="#ff4a2f"/><stop offset="0.6425" stop-color="#ff3a22"/><stop offset="0.7151" stop-color="#e22714"/><stop offset="0.8045" stop-color="#cc190a"/><stop offset="0.9274" stop-color="#bc0d01"/><stop offset="1" stop-color="#b70800"/></linearGradient><linearGradient id="i55" gradientUnits="userSpaceOnUse" x1="1358.78" x2="1724.78"><stop offset="0" stop-color="#00ffd6"/><stop offset="0.0219" stop-color="#00ffd5"/><stop offset="0.0437" stop-color="#11ffd4"/><stop offset="0.1202" stop-color="#5bffd1"/><stop offset="0.1913" stop-color="#abffce"/><stop offset="0.2568" stop-color="#fffeca"/><stop offset="0.2896" stop-color="#ffd6a8"/><stop offset="0.3279" stop-color="#ffb38a"/><stop offset="0.377" stop-color="#ff906e"/><stop offset="0.4426" stop-color="#ff6f52"/><stop offset="0.5301" stop-color="#ff5038"/><stop offset="0.6339" stop-color="#fe3623"/><stop offset="0.6995" stop-color="#e32616"/><stop offset="0.7869" stop-color="#cd180b"/><stop offset="0.9071" stop-color="#bd0c02"/><stop offset="1" stop-color="#b60600"/></linearGradient><linearGradient id="i56" gradientUnits="userSpaceOnUse" x1="1357.66" x2="1729.66"><stop offset="0" stop-color="#0fd"/><stop offset="0.0215" stop-color="#00ffdc"/><stop offset="0.043" stop-color="#12ffdc"/><stop offset="0.1183" stop-color="#5dffd9"/><stop offset="0.1828" stop-color="#a7ffd6"/><stop offset="0.2419" stop-color="#f5ffd4"/><stop offset="0.2473" stop-color="#fdffd3"/><stop offset="0.2688" stop-color="#ffe4bc"/><stop offset="0.3065" stop-color="#ffbd9a"/><stop offset="0.3548" stop-color="#ff977a"/><stop offset="0.414" stop-color="#ff765d"/><stop offset="0.4946" stop-color="#ff5641"/><stop offset="0.6022" stop-color="#ff3928"/><stop offset="0.6237" stop-color="#ff3525"/><stop offset="0.6935" stop-color="#e32317"/><stop offset="0.7796" stop-color="#cd160c"/><stop offset="0.8978" stop-color="#bc0b03"/><stop offset="1" stop-color="#b50400"/></linearGradient><linearGradient id="i57" gradientUnits="userSpaceOnUse" x1="1356.55" x2="1734.55"><stop offset="0" stop-color="#00ffe4"/><stop offset="0.0212" stop-color="#00ffe4"/><stop offset="0.037" stop-color="#0dffe3"/><stop offset="0.1111" stop-color="#58ffe1"/><stop offset="0.1746" stop-color="#a4ffdf"/><stop offset="0.2328" stop-color="#f3ffdd"/><stop offset="0.2381" stop-color="#faffdd"/><stop offset="0.2434" stop-color="#fffcda"/><stop offset="0.2751" stop-color="#ffd3b6"/><stop offset="0.3122" stop-color="#ffb096"/><stop offset="0.3598" stop-color="#ff8d77"/><stop offset="0.4233" stop-color="#ff6c59"/><stop offset="0.5079" stop-color="#ff4d3e"/><stop offset="0.619" stop-color="#fe3125"/><stop offset="0.6825" stop-color="#e42218"/><stop offset="0.7672" stop-color="#cd150d"/><stop offset="0.8783" stop-color="#bd0a04"/><stop offset="0.9841" stop-color="#b60300"/><stop offset="1" stop-color="#b50200"/></linearGradient><linearGradient id="i58" gradientUnits="userSpaceOnUse" x1="1355.43" x2="1735.43"><stop offset="0" stop-color="#00ffec"/><stop offset="0.0211" stop-color="#00ffeb"/><stop offset="0.0368" stop-color="#0dffeb"/><stop offset="0.1105" stop-color="#5affea"/><stop offset="0.1737" stop-color="#a7ffe8"/><stop offset="0.2368" stop-color="#ffffe6"/><stop offset="0.2684" stop-color="#ffd5c0"/><stop offset="0.3053" stop-color="#ffb09e"/><stop offset="0.3526" stop-color="#ff8d7d"/><stop offset="0.4158" stop-color="#ff6b5e"/><stop offset="0.4947" stop-color="#ff4e43"/><stop offset="0.6053" stop-color="#ff3229"/><stop offset="0.6211" stop-color="#fd2e26"/><stop offset="0.6842" stop-color="#e32019"/><stop offset="0.7684" stop-color="#cd130e"/><stop offset="0.8842" stop-color="#bc0804"/><stop offset="0.9947" stop-color="#b50200"/><stop offset="1" stop-color="#b50100"/></linearGradient><linearGradient id="i59" gradientUnits="userSpaceOnUse" x1="1354.32" x2="1734.32"><stop offset="0" stop-color="#00fff4"/><stop offset="0.0211" stop-color="#00fff3"/><stop offset="0.0368" stop-color="#0dfff3"/><stop offset="0.1053" stop-color="#56fff3"/><stop offset="0.1684" stop-color="#a3fff2"/><stop offset="0.2263" stop-color="#f5fff1"/><stop offset="0.2316" stop-color="#fdfff1"/><stop offset="0.2421" stop-color="#fff2e4"/><stop offset="0.2737" stop-color="#ffcbbf"/><stop offset="0.3105" stop-color="#ffa89e"/><stop offset="0.3579" stop-color="#ff867e"/><stop offset="0.4211" stop-color="#ff665f"/><stop offset="0.5053" stop-color="#ff4842"/><stop offset="0.6211" stop-color="#ff2d28"/><stop offset="0.6842" stop-color="#e41e1b"/><stop offset="0.7684" stop-color="#cd120f"/><stop offset="0.8789" stop-color="#bd0806"/><stop offset="1" stop-color="#b50100"/></linearGradient><linearGradient id="i60" gradientUnits="userSpaceOnUse" x1="1353.2" x2="1735.2"><stop offset="0" stop-color="#00fffc"/><stop offset="0.0209" stop-color="#00fffc"/><stop offset="0.0366" stop-color="#0efffc"/><stop offset="0.1047" stop-color="#57fffc"/><stop offset="0.1675" stop-color="#a6fffc"/><stop offset="0.2199" stop-color="#f2fffc"/><stop offset="0.2251" stop-color="#fafffc"/><stop offset="0.2304" stop-color="#fffcf9"/><stop offset="0.2618" stop-color="#ffd2cf"/><stop offset="0.2984" stop-color="#ffadaa"/><stop offset="0.3455" stop-color="#ff8987"/><stop offset="0.4084" stop-color="#ff6866"/><stop offset="0.4869" stop-color="#ff4b49"/><stop offset="0.5969" stop-color="#ff2f2e"/><stop offset="0.623" stop-color="#fd2a29"/><stop offset="0.6859" stop-color="#e31c1b"/><stop offset="0.7696" stop-color="#cd1010"/><stop offset="0.8848" stop-color="#bd0606"/><stop offset="1" stop-color="#b50000"/></linearGradient><linearGradient id="i61" gradientUnits="userSpaceOnUse" x1="1352.09" x2="1734.09"><stop offset="0" stop-color="#00faff"/><stop offset="0.0209" stop-color="#00faff"/><stop offset="0.0366" stop-color="#0dfaff"/><stop offset="0.1047" stop-color="#57f9ff"/><stop offset="0.1675" stop-color="#a5f8ff"/><stop offset="0.2304" stop-color="#fff7fe"/><stop offset="0.2618" stop-color="#ffcdd3"/><stop offset="0.2984" stop-color="#ffa9ae"/><stop offset="0.3455" stop-color="#ff868b"/><stop offset="0.4084" stop-color="#ff6569"/><stop offset="0.4869" stop-color="#ff484c"/><stop offset="0.5969" stop-color="#ff2d30"/><stop offset="0.623" stop-color="#ff282b"/><stop offset="0.6859" stop-color="#e41b1d"/><stop offset="0.7696" stop-color="#cd0f11"/><stop offset="0.8796" stop-color="#bd0607"/><stop offset="1" stop-color="#b50000"/></linearGradient><linearGradient id="i62" gradientUnits="userSpaceOnUse" x1="1350.97" x2="1734.97"><stop offset="0" stop-color="#00f2ff"/><stop offset="0.0208" stop-color="#00f2ff"/><stop offset="0.0365" stop-color="#0df1ff"/><stop offset="0.1042" stop-color="#55f0ff"/><stop offset="0.1667" stop-color="#a2efff"/><stop offset="0.224" stop-color="#f3eeff"/><stop offset="0.2292" stop-color="#fbedff"/><stop offset="0.2344" stop-color="#ffeafb"/><stop offset="0.2656" stop-color="#ffc3d2"/><stop offset="0.3021" stop-color="#ffa0ae"/><stop offset="0.349" stop-color="#ff7f8b"/><stop offset="0.4115" stop-color="#ff606a"/><stop offset="0.4948" stop-color="#ff434b"/><stop offset="0.6042" stop-color="#ff2930"/><stop offset="0.625" stop-color="#fe252c"/><stop offset="0.6875" stop-color="#e3181e"/><stop offset="0.7708" stop-color="#cd0d12"/><stop offset="0.8854" stop-color="#bd0407"/><stop offset="0.9948" stop-color="#b50001"/><stop offset="1" stop-color="#b50001"/></linearGradient><linearGradient id="i63" gradientUnits="userSpaceOnUse" x1="1349.86" x2="1733.86"><stop offset="0" stop-color="#00eaff"/><stop offset="0.0208" stop-color="#00eaff"/><stop offset="0.0365" stop-color="#0de9ff"/><stop offset="0.1094" stop-color="#5ae7ff"/><stop offset="0.1719" stop-color="#a6e5ff"/><stop offset="0.2292" stop-color="#f6e3ff"/><stop offset="0.2344" stop-color="#fee3ff"/><stop offset="0.2708" stop-color="#ffb9d1"/><stop offset="0.3073" stop-color="#ff98ad"/><stop offset="0.3542" stop-color="#ff798b"/><stop offset="0.4167" stop-color="#ff5b6a"/><stop offset="0.5" stop-color="#ff3f4c"/><stop offset="0.6146" stop-color="#ff2530"/><stop offset="0.625" stop-color="#ff242e"/><stop offset="0.6927" stop-color="#e2161e"/><stop offset="0.776" stop-color="#cd0c12"/><stop offset="0.8906" stop-color="#bc0308"/><stop offset="1" stop-color="#b50001"/></linearGradient><linearGradient id="i64" gradientUnits="userSpaceOnUse" x1="1348.74" x2="1726.74"><stop offset="0" stop-color="#00e3ff"/><stop offset="0.0212" stop-color="#00e2ff"/><stop offset="0.037" stop-color="#0de1ff"/><stop offset="0.1111" stop-color="#58dfff"/><stop offset="0.1746" stop-color="#a3dcff"/><stop offset="0.2328" stop-color="#f1daff"/><stop offset="0.2434" stop-color="#ffd8fe"/><stop offset="0.2751" stop-color="#ffb4d5"/><stop offset="0.3122" stop-color="#ff94b1"/><stop offset="0.3598" stop-color="#ff768e"/><stop offset="0.4233" stop-color="#ff586d"/><stop offset="0.5079" stop-color="#ff3d4e"/><stop offset="0.619" stop-color="#ff2433"/><stop offset="0.6402" stop-color="#fe212e"/><stop offset="0.7037" stop-color="#e31520"/><stop offset="0.7884" stop-color="#cd0b14"/><stop offset="0.9048" stop-color="#bd0209"/><stop offset="1" stop-color="#b60003"/></linearGradient><linearGradient id="i65" gradientUnits="userSpaceOnUse" x1="1347.63" x2="1719.63"><stop offset="0" stop-color="#00dbff"/><stop offset="0.0215" stop-color="#00daff"/><stop offset="0.043" stop-color="#12daff"/><stop offset="0.1183" stop-color="#5cd7ff"/><stop offset="0.1882" stop-color="#add3ff"/><stop offset="0.2473" stop-color="#fbd0ff"/><stop offset="0.2527" stop-color="#ffccfb"/><stop offset="0.2849" stop-color="#ffabd4"/><stop offset="0.3226" stop-color="#ff8db0"/><stop offset="0.371" stop-color="#ff6f8e"/><stop offset="0.4355" stop-color="#ff536d"/><stop offset="0.5215" stop-color="#ff394f"/><stop offset="0.6398" stop-color="#ff2132"/><stop offset="0.6559" stop-color="#fd1e2f"/><stop offset="0.7204" stop-color="#e31321"/><stop offset="0.8065" stop-color="#cd0914"/><stop offset="0.9247" stop-color="#bc000a"/><stop offset="1" stop-color="#b70005"/></linearGradient><linearGradient id="i66" gradientUnits="userSpaceOnUse" x1="1346.51" x2="1712.51"><stop offset="0" stop-color="#00d4ff"/><stop offset="0.0219" stop-color="#00d3ff"/><stop offset="0.0437" stop-color="#11d2ff"/><stop offset="0.1202" stop-color="#5bcfff"/><stop offset="0.1913" stop-color="#aacbff"/><stop offset="0.2514" stop-color="#f7c7ff"/><stop offset="0.2568" stop-color="#fec7ff"/><stop offset="0.2951" stop-color="#ffa2d2"/><stop offset="0.3388" stop-color="#ff82ab"/><stop offset="0.3934" stop-color="#ff6488"/><stop offset="0.4645" stop-color="#ff4967"/><stop offset="0.5574" stop-color="#ff3049"/><stop offset="0.6667" stop-color="#fe1c31"/><stop offset="0.7322" stop-color="#e41122"/><stop offset="0.8197" stop-color="#cd0815"/><stop offset="0.9344" stop-color="#bd000b"/><stop offset="1" stop-color="#b80007"/></linearGradient><linearGradient id="i67" gradientUnits="userSpaceOnUse" x1="1345.4" x2="1705.4"><stop offset="0" stop-color="#00cdff"/><stop offset="0.0222" stop-color="#0cf"/><stop offset="0.0444" stop-color="#11cbff"/><stop offset="0.1222" stop-color="#59c7ff"/><stop offset="0.1944" stop-color="#a7c3ff"/><stop offset="0.2611" stop-color="#f9beff"/><stop offset="0.2667" stop-color="#ffbcfd"/><stop offset="0.3" stop-color="#ff9dd6"/><stop offset="0.3444" stop-color="#ff7eaf"/><stop offset="0.4" stop-color="#ff618b"/><stop offset="0.4722" stop-color="#ff466a"/><stop offset="0.5667" stop-color="#ff2e4b"/><stop offset="0.6778" stop-color="#ff1b33"/><stop offset="0.7556" stop-color="#e10e22"/><stop offset="0.8444" stop-color="#cc0615"/><stop offset="0.9556" stop-color="#bd000b"/><stop offset="1" stop-color="#b90008"/></linearGradient><linearGradient id="i68" gradientUnits="userSpaceOnUse" x1="1344.28" x2="1698.28"><stop offset="0" stop-color="#00c6ff"/><stop offset="0.0226" stop-color="#00c5ff"/><stop offset="0.0452" stop-color="#11c4ff"/><stop offset="0.1299" stop-color="#5dbfff"/><stop offset="0.2034" stop-color="#aabaff"/><stop offset="0.2712" stop-color="#fcb5ff"/><stop offset="0.2768" stop-color="#ffb2fb"/><stop offset="0.3107" stop-color="#ff95d5"/><stop offset="0.3559" stop-color="#ff77af"/><stop offset="0.4124" stop-color="#ff5c8b"/><stop offset="0.4859" stop-color="#ff426a"/><stop offset="0.5819" stop-color="#ff2b4c"/><stop offset="0.6949" stop-color="#ff1834"/><stop offset="0.7627" stop-color="#e40e24"/><stop offset="0.8531" stop-color="#cd0517"/><stop offset="0.9548" stop-color="#bf000e"/><stop offset="1" stop-color="#bb000a"/></linearGradient><linearGradient id="i69" gradientUnits="userSpaceOnUse" x1="1343.17" x2="1691.17"><stop offset="0" stop-color="#00c0ff"/><stop offset="0.023" stop-color="#00bfff"/><stop offset="0.046" stop-color="#11bdff"/><stop offset="0.1322" stop-color="#5cb8ff"/><stop offset="0.2069" stop-color="#a7b3ff"/><stop offset="0.2759" stop-color="#f7adff"/><stop offset="0.2816" stop-color="#feadff"/><stop offset="0.3218" stop-color="#ff8cd4"/><stop offset="0.3678" stop-color="#ff70ae"/><stop offset="0.4253" stop-color="#ff568b"/><stop offset="0.5" stop-color="#ff3e6b"/><stop offset="0.5977" stop-color="#ff274d"/><stop offset="0.7126" stop-color="#fd1534"/><stop offset="0.7816" stop-color="#e30c25"/><stop offset="0.8736" stop-color="#cd0318"/><stop offset="0.9655" stop-color="#c0000f"/><stop offset="1" stop-color="#bd000c"/></linearGradient><linearGradient id="i70" gradientUnits="userSpaceOnUse" x1="1342.05" x2="1684.05"><stop offset="0" stop-color="#00baff"/><stop offset="0.0234" stop-color="#00b8ff"/><stop offset="0.0526" stop-color="#15b7ff"/><stop offset="0.1404" stop-color="#60b1ff"/><stop offset="0.2164" stop-color="#ababff"/><stop offset="0.2865" stop-color="#faa5ff"/><stop offset="0.2924" stop-color="#ffa3fd"/><stop offset="0.3275" stop-color="#ff88d8"/><stop offset="0.3743" stop-color="#ff6db2"/><stop offset="0.4327" stop-color="#ff538e"/><stop offset="0.5088" stop-color="#ff3b6d"/><stop offset="0.6082" stop-color="#ff254f"/><stop offset="0.7251" stop-color="#ff1436"/><stop offset="0.7953" stop-color="#e40a27"/><stop offset="0.8889" stop-color="#cd0219"/><stop offset="0.9942" stop-color="#bf000f"/><stop offset="1" stop-color="#be000f"/></linearGradient><linearGradient id="i71" gradientUnits="userSpaceOnUse" x1="1340.94" x2="1674.94"><stop offset="0" stop-color="#00b3ff"/><stop offset="0.024" stop-color="#00b2ff"/><stop offset="0.0539" stop-color="#15b0ff"/><stop offset="0.1437" stop-color="#5eaaff"/><stop offset="0.2275" stop-color="#aea3ff"/><stop offset="0.2994" stop-color="#fc9dff"/><stop offset="0.3114" stop-color="#ff95f4"/><stop offset="0.3533" stop-color="#ff79cc"/><stop offset="0.4072" stop-color="#ff5ea5"/><stop offset="0.4731" stop-color="#ff4683"/><stop offset="0.5569" stop-color="#ff3063"/><stop offset="0.6707" stop-color="#ff1b46"/><stop offset="0.7485" stop-color="#fe1137"/><stop offset="0.8204" stop-color="#e30827"/><stop offset="0.9162" stop-color="#cd011a"/><stop offset="1" stop-color="#c10012"/></linearGradient><linearGradient id="i72" gradientUnits="userSpaceOnUse" x1="1339.82" x2="1667.82"><stop offset="0" stop-color="#00adff"/><stop offset="0.0244" stop-color="#00acff"/><stop offset="0.0549" stop-color="#14aaff"/><stop offset="0.1524" stop-color="#62a3ff"/><stop offset="0.2378" stop-color="#b19cff"/><stop offset="0.311" stop-color="#ff95ff"/><stop offset="0.3537" stop-color="#ff79d5"/><stop offset="0.4024" stop-color="#ff60b0"/><stop offset="0.4634" stop-color="#ff498e"/><stop offset="0.5427" stop-color="#ff336e"/><stop offset="0.6463" stop-color="#ff1f50"/><stop offset="0.7622" stop-color="#ff0f39"/><stop offset="0.8415" stop-color="#e20628"/><stop offset="0.939" stop-color="#cd001a"/><stop offset="1" stop-color="#c40014"/></linearGradient><linearGradient id="i73" gradientUnits="userSpaceOnUse" x1="1338.71" x2="1660.71"><stop offset="0" stop-color="#00a8ff"/><stop offset="0.0248" stop-color="#00a6ff"/><stop offset="0.0621" stop-color="#18a4ff"/><stop offset="0.1615" stop-color="#669cff"/><stop offset="0.2484" stop-color="#b495ff"/><stop offset="0.3168" stop-color="#fa8eff"/><stop offset="0.323" stop-color="#ff8cfd"/><stop offset="0.3665" stop-color="#ff71d4"/><stop offset="0.4161" stop-color="#ff5ab0"/><stop offset="0.4845" stop-color="#ff428b"/><stop offset="0.5714" stop-color="#ff2d6a"/><stop offset="0.6832" stop-color="#ff194c"/><stop offset="0.7826" stop-color="#fe0d39"/><stop offset="0.8571" stop-color="#e30529"/><stop offset="0.9503" stop-color="#ce001c"/><stop offset="1" stop-color="#c70017"/></linearGradient><linearGradient id="i74" gradientUnits="userSpaceOnUse" x1="1337.59" x2="1653.59"><stop offset="0" stop-color="#00a2ff"/><stop offset="0.0253" stop-color="#00a0ff"/><stop offset="0.0633" stop-color="#189eff"/><stop offset="0.1646" stop-color="#6496ff"/><stop offset="0.2532" stop-color="#b18eff"/><stop offset="0.3291" stop-color="#fd86ff"/><stop offset="0.3481" stop-color="#ff7bee"/><stop offset="0.3924" stop-color="#ff64c9"/><stop offset="0.4494" stop-color="#ff4da4"/><stop offset="0.5253" stop-color="#ff3781"/><stop offset="0.6203" stop-color="#ff2361"/><stop offset="0.7468" stop-color="#f14"/><stop offset="0.7975" stop-color="#ff0b3b"/><stop offset="0.8797" stop-color="#e3032a"/><stop offset="0.962" stop-color="#d0001e"/><stop offset="1" stop-color="#ca001a"/></linearGradient><linearGradient id="i75" gradientUnits="userSpaceOnUse" x1="1336.48" x2="1646.48"><stop offset="0" stop-color="#009cff"/><stop offset="0.0258" stop-color="#009bff"/><stop offset="0.0645" stop-color="#1898ff"/><stop offset="0.1677" stop-color="#6390ff"/><stop offset="0.2581" stop-color="#ae88ff"/><stop offset="0.3419" stop-color="#ff7fff"/><stop offset="0.3871" stop-color="#ff66d6"/><stop offset="0.4452" stop-color="#ff4eaf"/><stop offset="0.5161" stop-color="#ff398b"/><stop offset="0.6065" stop-color="#ff256b"/><stop offset="0.729" stop-color="#ff134c"/><stop offset="0.8194" stop-color="#fe093c"/><stop offset="0.8968" stop-color="#e4022b"/><stop offset="1" stop-color="#cd001d"/></linearGradient><linearGradient id="i76" gradientUnits="userSpaceOnUse" x1="1335.36" x2="1639.36"><stop offset="0" stop-color="#0097ff"/><stop offset="0.0263" stop-color="#0095ff"/><stop offset="0.0724" stop-color="#1c92ff"/><stop offset="0.1776" stop-color="#6689ff"/><stop offset="0.2763" stop-color="#b780ff"/><stop offset="0.3487" stop-color="#fb79ff"/><stop offset="0.3553" stop-color="#ff77fd"/><stop offset="0.4013" stop-color="#ff60d5"/><stop offset="0.4605" stop-color="#ff49ae"/><stop offset="0.5329" stop-color="#ff358c"/><stop offset="0.625" stop-color="#ff226b"/><stop offset="0.75" stop-color="#ff104d"/><stop offset="0.8355" stop-color="#ff073e"/><stop offset="0.9276" stop-color="#e1002b"/><stop offset="1" stop-color="#d10020"/></linearGradient><linearGradient id="i77" gradientUnits="userSpaceOnUse" x1="1334.25" x2="1632.25"><stop offset="0" stop-color="#0092ff"/><stop offset="0.0268" stop-color="#0090ff"/><stop offset="0.0738" stop-color="#1b8dff"/><stop offset="0.1812" stop-color="#6584ff"/><stop offset="0.2819" stop-color="#b47aff"/><stop offset="0.3624" stop-color="#fd72ff"/><stop offset="0.396" stop-color="#ff62e3"/><stop offset="0.4497" stop-color="#ff4cbd"/><stop offset="0.5168" stop-color="#ff389a"/><stop offset="0.604" stop-color="#ff2578"/><stop offset="0.7181" stop-color="#ff1459"/><stop offset="0.8591" stop-color="#ff053e"/><stop offset="0.9396" stop-color="#e4002d"/><stop offset="1" stop-color="#d60024"/></linearGradient><linearGradient id="i78" gradientUnits="userSpaceOnUse" x1="1333.14" x2="1625.14"><stop offset="0" stop-color="#008dff"/><stop offset="0.0274" stop-color="#008bff"/><stop offset="0.0822" stop-color="#1f87ff"/><stop offset="0.1986" stop-color="#6d7dff"/><stop offset="0.3014" stop-color="#bd73ff"/><stop offset="0.3767" stop-color="#ff6bff"/><stop offset="0.4247" stop-color="#ff55d7"/><stop offset="0.4863" stop-color="#ff40b1"/><stop offset="0.5616" stop-color="#ff2e8e"/><stop offset="0.6575" stop-color="#ff1c6e"/><stop offset="0.7877" stop-color="#ff0b4f"/><stop offset="0.8836" stop-color="#fd023e"/><stop offset="0.9658" stop-color="#e3002e"/><stop offset="1" stop-color="#db0028"/></linearGradient><linearGradient id="i79" gradientUnits="userSpaceOnUse" x1="1332.02" x2="1618.02"><stop offset="0" stop-color="#08f"/><stop offset="0.028" stop-color="#0086ff"/><stop offset="0.0839" stop-color="#1f82ff"/><stop offset="0.2028" stop-color="#6c78ff"/><stop offset="0.3077" stop-color="#ba6dff"/><stop offset="0.3846" stop-color="#fb65ff"/><stop offset="0.3916" stop-color="#ff63fc"/><stop offset="0.4406" stop-color="#ff4fd6"/><stop offset="0.5035" stop-color="#ff3bb1"/><stop offset="0.5804" stop-color="#ff298e"/><stop offset="0.6853" stop-color="#ff186d"/><stop offset="0.8182" stop-color="#ff084f"/><stop offset="0.9021" stop-color="#ff0141"/><stop offset="0.986" stop-color="#e4002f"/><stop offset="1" stop-color="#e1002d"/></linearGradient><linearGradient id="i80" gradientUnits="userSpaceOnUse" x1="1330.91" x2="1610.91"><stop offset="0" stop-color="#0083ff"/><stop offset="0.0286" stop-color="#0081ff"/><stop offset="0.0929" stop-color="#237cff"/><stop offset="0.2143" stop-color="#6f72ff"/><stop offset="0.3214" stop-color="#bd67ff"/><stop offset="0.4" stop-color="#fe5eff"/><stop offset="0.4643" stop-color="#ff47d0"/><stop offset="0.5357" stop-color="#ff33a9"/><stop offset="0.6214" stop-color="#ff2187"/><stop offset="0.7357" stop-color="#f16"/><stop offset="0.8857" stop-color="#ff0248"/><stop offset="0.9286" stop-color="#fe0041"/><stop offset="1" stop-color="#e70032"/></linearGradient><linearGradient id="i81" gradientUnits="userSpaceOnUse" x1="1329.79" x2="1603.79"><stop offset="0" stop-color="#007eff"/><stop offset="0.0292" stop-color="#007cff"/><stop offset="0.0949" stop-color="#27f"/><stop offset="0.219" stop-color="#6d6dff"/><stop offset="0.3285" stop-color="#ba62ff"/><stop offset="0.4161" stop-color="#ff58fe"/><stop offset="0.4672" stop-color="#ff45d8"/><stop offset="0.5328" stop-color="#ff33b3"/><stop offset="0.6204" stop-color="#ff218e"/><stop offset="0.7299" stop-color="#ff116d"/><stop offset="0.8759" stop-color="#ff024f"/><stop offset="0.9489" stop-color="#ff0043"/><stop offset="1" stop-color="#ee0038"/></linearGradient><linearGradient id="i82" gradientUnits="userSpaceOnUse" x1="1328.68" x2="1596.68"><stop offset="0" stop-color="#007aff"/><stop offset="0.0299" stop-color="#07f"/><stop offset="0.1045" stop-color="#2672ff"/><stop offset="0.2313" stop-color="#7167ff"/><stop offset="0.3433" stop-color="#bd5cff"/><stop offset="0.4254" stop-color="#fc53ff"/><stop offset="0.4328" stop-color="#ff51fc"/><stop offset="0.4925" stop-color="#ff3dd3"/><stop offset="0.5672" stop-color="#ff2bac"/><stop offset="0.6567" stop-color="#ff1b89"/><stop offset="0.7761" stop-color="#ff0c68"/><stop offset="0.9179" stop-color="#ff004d"/><stop offset="0.9776" stop-color="#fe0043"/><stop offset="1" stop-color="#f6003e"/></linearGradient><linearGradient id="i83" gradientUnits="userSpaceOnUse" x1="1327.56" x2="1587.56"><stop offset="0" stop-color="#0075ff"/><stop offset="0.0308" stop-color="#0073ff"/><stop offset="0.1154" stop-color="#296cff"/><stop offset="0.2462" stop-color="#7461ff"/><stop offset="0.3692" stop-color="#c555ff"/><stop offset="0.4462" stop-color="#fe4dff"/><stop offset="0.5154" stop-color="#ff38d2"/><stop offset="0.5923" stop-color="#ff27ab"/><stop offset="0.6923" stop-color="#ff1687"/><stop offset="0.8154" stop-color="#ff0867"/><stop offset="0.9231" stop-color="#ff0052"/><stop offset="1" stop-color="#ff0046"/></linearGradient><linearGradient id="i84" gradientUnits="userSpaceOnUse" x1="1326.45" x2="1580.45"><stop offset="0" stop-color="#0071ff"/><stop offset="0.0315" stop-color="#006eff"/><stop offset="0.1181" stop-color="#2968ff"/><stop offset="0.2598" stop-color="#775cff"/><stop offset="0.3858" stop-color="#c74fff"/><stop offset="0.4646" stop-color="#ff46fe"/><stop offset="0.5276" stop-color="#ff35d5"/><stop offset="0.6063" stop-color="#ff24ae"/><stop offset="0.7008" stop-color="#ff158c"/><stop offset="0.8268" stop-color="#ff076b"/><stop offset="0.9213" stop-color="#ff0058"/><stop offset="1" stop-color="#ff004b"/></linearGradient><linearGradient id="i85" gradientUnits="userSpaceOnUse" x1="1325.33" x2="1573.33"><stop offset="0" stop-color="#006cff"/><stop offset="0.0323" stop-color="#006aff"/><stop offset="0.129" stop-color="#2c63ff"/><stop offset="0.2742" stop-color="#7a56ff"/><stop offset="0.4032" stop-color="#ca4aff"/><stop offset="0.4758" stop-color="#fc42ff"/><stop offset="0.4919" stop-color="#ff3ef6"/><stop offset="0.5565" stop-color="#ff2ecf"/><stop offset="0.6371" stop-color="#ff1eaa"/><stop offset="0.7419" stop-color="#ff0f87"/><stop offset="0.879" stop-color="#ff0266"/><stop offset="1" stop-color="#ff0051"/></linearGradient><linearGradient id="i86" gradientUnits="userSpaceOnUse" x1="1324.22" x2="1566.22"><stop offset="0" stop-color="#0068ff"/><stop offset="0.0331" stop-color="#06f"/><stop offset="0.1322" stop-color="#2c5eff"/><stop offset="0.281" stop-color="#7852ff"/><stop offset="0.4132" stop-color="#c745ff"/><stop offset="0.4959" stop-color="#fe3cff"/><stop offset="0.5702" stop-color="#ff2ad3"/><stop offset="0.6529" stop-color="#ff1bad"/><stop offset="0.7603" stop-color="#ff0d89"/><stop offset="0.9008" stop-color="#ff0068"/><stop offset="1" stop-color="#ff0056"/></linearGradient><linearGradient id="i87" gradientUnits="userSpaceOnUse" x1="1323.1" x2="1559.1"><stop offset="0" stop-color="#0064ff"/><stop offset="0.0339" stop-color="#0062ff"/><stop offset="0.1356" stop-color="#2b5aff"/><stop offset="0.2881" stop-color="#774eff"/><stop offset="0.4237" stop-color="#c441ff"/><stop offset="0.5169" stop-color="#ff36fe"/><stop offset="0.5847" stop-color="#ff27d6"/><stop offset="0.6695" stop-color="#ff18b0"/><stop offset="0.7797" stop-color="#ff0b8c"/><stop offset="0.9068" stop-color="#ff006d"/><stop offset="1" stop-color="#ff005c"/></linearGradient><linearGradient id="i88" gradientUnits="userSpaceOnUse" x1="1321.99" x2="1551.99"><stop offset="0" stop-color="#0060ff"/><stop offset="0.0348" stop-color="#005eff"/><stop offset="0.1478" stop-color="#2f55ff"/><stop offset="0.3043" stop-color="#7a48ff"/><stop offset="0.4435" stop-color="#c73bff"/><stop offset="0.5304" stop-color="#fc32ff"/><stop offset="0.5478" stop-color="#ff2ef6"/><stop offset="0.6261" stop-color="#ff1fcd"/><stop offset="0.7217" stop-color="#ff11a6"/><stop offset="0.8435" stop-color="#ff0483"/><stop offset="0.9217" stop-color="#ff0071"/><stop offset="1" stop-color="#ff0062"/></linearGradient><linearGradient id="i89" gradientUnits="userSpaceOnUse" x1="1320.87" x2="1544.87"><stop offset="0" stop-color="#005cff"/><stop offset="0.0357" stop-color="#005aff"/><stop offset="0.1518" stop-color="#2e51ff"/><stop offset="0.3214" stop-color="#7d43ff"/><stop offset="0.4732" stop-color="#ce35ff"/><stop offset="0.5536" stop-color="#fe2dff"/><stop offset="0.6339" stop-color="#ff1dd4"/><stop offset="0.7232" stop-color="#ff11af"/><stop offset="0.8393" stop-color="#ff048c"/><stop offset="0.9107" stop-color="#ff007b"/><stop offset="1" stop-color="#ff0069"/></linearGradient><linearGradient id="i90" gradientUnits="userSpaceOnUse" x1="1319.76" x2="1537.76"><stop offset="0" stop-color="#0058ff"/><stop offset="0.0367" stop-color="#0056ff"/><stop offset="0.156" stop-color="#2e4dff"/><stop offset="0.3303" stop-color="#7b3fff"/><stop offset="0.4862" stop-color="#cb31ff"/><stop offset="0.578" stop-color="#ff27fe"/><stop offset="0.6514" stop-color="#ff1ad7"/><stop offset="0.7431" stop-color="#ff0eb2"/><stop offset="0.8624" stop-color="#ff028e"/><stop offset="1" stop-color="#ff0070"/></linearGradient><linearGradient id="i91" gradientUnits="userSpaceOnUse" x1="1318.64" x2="1530.64"><stop offset="0" stop-color="#0054ff"/><stop offset="0.0377" stop-color="#0052ff"/><stop offset="0.1698" stop-color="#3149ff"/><stop offset="0.3491" stop-color="#7e3bff"/><stop offset="0.5094" stop-color="#ce2cff"/><stop offset="0.5943" stop-color="#fd23ff"/><stop offset="0.6226" stop-color="#ff1ef1"/><stop offset="0.7075" stop-color="#ff12ca"/><stop offset="0.8113" stop-color="#ff06a5"/><stop offset="0.8962" stop-color="#ff008e"/><stop offset="1" stop-color="#f07"/></linearGradient><linearGradient id="i92" gradientUnits="userSpaceOnUse" x1="1317.53" x2="1523.53"><stop offset="0" stop-color="#0051ff"/><stop offset="0.0388" stop-color="#004eff"/><stop offset="0.1748" stop-color="#3045ff"/><stop offset="0.3592" stop-color="#7c37ff"/><stop offset="0.5243" stop-color="#cb28ff"/><stop offset="0.6214" stop-color="#ff1eff"/><stop offset="0.7087" stop-color="#ff11d5"/><stop offset="0.8155" stop-color="#ff05ae"/><stop offset="0.8932" stop-color="#ff0098"/><stop offset="1" stop-color="#ff007f"/></linearGradient><linearGradient id="i93" gradientUnits="userSpaceOnUse" x1="1316.41" x2="1516.41"><stop offset="0" stop-color="#004dff"/><stop offset="0.04" stop-color="#004bff"/><stop offset="0.18" stop-color="#3041ff"/><stop offset="0.37" stop-color="#7b33ff"/><stop offset="0.54" stop-color="#c824ff"/><stop offset="0.65" stop-color="#ff19fd"/><stop offset="0.74" stop-color="#ff0dd4"/><stop offset="0.85" stop-color="#ff02ae"/><stop offset="0.99" stop-color="#ff008a"/><stop offset="1" stop-color="#f08"/></linearGradient><linearGradient id="i94" gradientUnits="userSpaceOnUse" x1="1315.3" x2="1507.3"><stop offset="0" stop-color="#004aff"/><stop offset="0.0417" stop-color="#0047ff"/><stop offset="0.1979" stop-color="#333dff"/><stop offset="0.4062" stop-color="#822eff"/><stop offset="0.5833" stop-color="#cf1eff"/><stop offset="0.6771" stop-color="#fd15ff"/><stop offset="0.7188" stop-color="#ff10ed"/><stop offset="0.8229" stop-color="#ff05c4"/><stop offset="0.8958" stop-color="#ff00ad"/><stop offset="1" stop-color="#ff0093"/></linearGradient><linearGradient id="i95" gradientUnits="userSpaceOnUse" x1="1314.18" x2="1500.18"><stop offset="0" stop-color="#0046ff"/><stop offset="0.043" stop-color="#04f"/><stop offset="0.2043" stop-color="#3239ff"/><stop offset="0.4194" stop-color="#802aff"/><stop offset="0.6129" stop-color="#d11aff"/><stop offset="0.7097" stop-color="#f1f"/><stop offset="0.8065" stop-color="#ff06d6"/><stop offset="0.8925" stop-color="#ff00b9"/><stop offset="1" stop-color="#ff009d"/></linearGradient><linearGradient id="i96" gradientUnits="userSpaceOnUse" x1="1313.07" x2="1493.07"><stop offset="0" stop-color="#0043ff"/><stop offset="0.0444" stop-color="#0040ff"/><stop offset="0.2111" stop-color="#3236ff"/><stop offset="0.4333" stop-color="#7f26ff"/><stop offset="0.6333" stop-color="#cf16ff"/><stop offset="0.7333" stop-color="#fc0dff"/><stop offset="0.7444" stop-color="#ff0cfd"/><stop offset="0.8444" stop-color="#ff02d5"/><stop offset="0.9667" stop-color="#ff00af"/><stop offset="1" stop-color="#ff00a7"/></linearGradient><linearGradient id="i97" gradientUnits="userSpaceOnUse" x1="1311.95" x2="1485.95"><stop offset="0" stop-color="#0040ff"/><stop offset="0.046" stop-color="#003dff"/><stop offset="0.2184" stop-color="#3133ff"/><stop offset="0.4483" stop-color="#7d23ff"/><stop offset="0.6552" stop-color="#cc13ff"/><stop offset="0.7701" stop-color="#fd08ff"/><stop offset="0.8736" stop-color="#ff00d8"/><stop offset="1" stop-color="#ff00b2"/></linearGradient><linearGradient id="i98" gradientUnits="userSpaceOnUse" x1="1310.84" x2="1478.84"><stop offset="0" stop-color="#003cff"/><stop offset="0.0476" stop-color="#003aff"/><stop offset="0.2381" stop-color="#342fff"/><stop offset="0.4762" stop-color="#801fff"/><stop offset="0.6905" stop-color="#ce0eff"/><stop offset="0.8095" stop-color="#ff04ff"/><stop offset="0.881" stop-color="#ff00e3"/><stop offset="1" stop-color="#ff00be"/></linearGradient><linearGradient id="i99" gradientUnits="userSpaceOnUse" x1="1309.72" x2="1471.72"><stop offset="0" stop-color="#0039ff"/><stop offset="0.0494" stop-color="#0037ff"/><stop offset="0.2469" stop-color="#342bff"/><stop offset="0.5062" stop-color="#821aff"/><stop offset="0.7284" stop-color="#d00aff"/><stop offset="0.8395" stop-color="#fc01ff"/><stop offset="0.8519" stop-color="#ff00fd"/><stop offset="0.963" stop-color="#ff00d6"/><stop offset="1" stop-color="#ff00cb"/></linearGradient><linearGradient id="i100" gradientUnits="userSpaceOnUse" x1="1308.61" x2="1464.61"><stop offset="0" stop-color="#0036ff"/><stop offset="0.0641" stop-color="#0233ff"/><stop offset="0.3462" stop-color="#4c23ff"/><stop offset="0.6026" stop-color="#9912ff"/><stop offset="0.8333" stop-color="#ea00ff"/><stop offset="0.8846" stop-color="#fe00ff"/><stop offset="1" stop-color="#ff00d9"/></linearGradient><linearGradient id="i101" gradientUnits="userSpaceOnUse" x1="1307.49" x2="1457.49"><stop offset="0" stop-color="#03f"/><stop offset="0.0667" stop-color="#0230ff"/><stop offset="0.3733" stop-color="#4e1fff"/><stop offset="0.64" stop-color="#9c0eff"/><stop offset="0.8533" stop-color="#e200ff"/><stop offset="0.9333" stop-color="#f0f"/><stop offset="1" stop-color="#ff00e8"/></linearGradient><linearGradient id="i102" gradientUnits="userSpaceOnUse" x1="1306.38" x2="1450.38"><stop offset="0" stop-color="#0030ff"/><stop offset="0.0694" stop-color="#022dff"/><stop offset="0.3889" stop-color="#4e1cff"/><stop offset="0.6667" stop-color="#9a0bff"/><stop offset="0.8472" stop-color="#d200ff"/><stop offset="0.9722" stop-color="#fc00ff"/><stop offset="1" stop-color="#ff00f8"/></linearGradient><linearGradient id="i103" gradientUnits="userSpaceOnUse" x1="1305.26" x2="1443.26"><stop offset="0" stop-color="#002dff"/><stop offset="0.0725" stop-color="#022aff"/><stop offset="0.4058" stop-color="#4d19ff"/><stop offset="0.7101" stop-color="#9c07ff"/><stop offset="0.8406" stop-color="#c200ff"/><stop offset="1" stop-color="#f400ff"/></linearGradient><linearGradient id="i104" gradientUnits="userSpaceOnUse" x1="1304.15" x2="1436.15"><stop offset="0" stop-color="#002aff"/><stop offset="0.0758" stop-color="#0227ff"/><stop offset="0.4242" stop-color="#4c16ff"/><stop offset="0.7424" stop-color="#9b04ff"/><stop offset="0.8333" stop-color="#b300ff"/><stop offset="1" stop-color="#e300ff"/></linearGradient><linearGradient id="i105" gradientUnits="userSpaceOnUse" x1="1303.03" x2="1429.03"><stop offset="0" stop-color="#0027ff"/><stop offset="0.0794" stop-color="#0224ff"/><stop offset="0.4603" stop-color="#4f12ff"/><stop offset="0.7937" stop-color="#9d00ff"/><stop offset="1" stop-color="#d300ff"/></linearGradient><linearGradient id="i106" gradientUnits="userSpaceOnUse" x1="1301.92" x2="1419.92"><stop offset="0" stop-color="#0025ff"/><stop offset="0.0847" stop-color="#0221ff"/><stop offset="0.4915" stop-color="#4e0fff"/><stop offset="0.8136" stop-color="#9300ff"/><stop offset="1" stop-color="#c000ff"/></linearGradient><linearGradient id="i107" gradientUnits="userSpaceOnUse" x1="1300.8" x2="1412.8"><stop offset="0" stop-color="#02f"/><stop offset="0.0893" stop-color="#021eff"/><stop offset="0.5179" stop-color="#4d0dff"/><stop offset="0.8214" stop-color="#8a00ff"/><stop offset="1" stop-color="#b100ff"/></linearGradient><linearGradient id="i108" gradientUnits="userSpaceOnUse" x1="1299.69" x2="1405.69"><stop offset="0" stop-color="#001fff"/><stop offset="0.0943" stop-color="#021cff"/><stop offset="0.5472" stop-color="#4c0aff"/><stop offset="0.8113" stop-color="#7d00ff"/><stop offset="1" stop-color="#a300ff"/></linearGradient><linearGradient id="i109" gradientUnits="userSpaceOnUse" x1="1298.57" x2="1398.57"><stop offset="0" stop-color="#001dff"/><stop offset="0.1" stop-color="#0219ff"/><stop offset="0.6" stop-color="#4f06ff"/><stop offset="0.8" stop-color="#7100ff"/><stop offset="1" stop-color="#9600ff"/></linearGradient><linearGradient id="i110" gradientUnits="userSpaceOnUse" x1="1297.46" x2="1391.46"><stop offset="0" stop-color="#001aff"/><stop offset="0.1064" stop-color="#0217ff"/><stop offset="0.6383" stop-color="#4e04ff"/><stop offset="0.8085" stop-color="#6900ff"/><stop offset="1" stop-color="#8900ff"/></linearGradient><linearGradient id="i111" gradientUnits="userSpaceOnUse" x1="1296.34" x2="1384.34"><stop offset="0" stop-color="#0017ff"/><stop offset="0.1136" stop-color="#0214ff"/><stop offset="0.6818" stop-color="#4d01ff"/><stop offset="1" stop-color="#7d00ff"/></linearGradient><linearGradient id="i112" gradientUnits="userSpaceOnUse" x1="1295.23" x2="1377.23"><stop offset="0" stop-color="#0015ff"/><stop offset="0.122" stop-color="#0212ff"/><stop offset="0.7317" stop-color="#4d00ff"/><stop offset="1" stop-color="#7100ff"/></linearGradient><linearGradient id="i113" gradientUnits="userSpaceOnUse" x1="1294.11" x2="1370.11"><stop offset="0" stop-color="#0013ff"/><stop offset="0.1316" stop-color="#020fff"/><stop offset="0.7105" stop-color="#4200ff"/><stop offset="1" stop-color="#60f"/></linearGradient><linearGradient id="i114" gradientUnits="userSpaceOnUse" x1="1293" x2="1363"><stop offset="0" stop-color="#0010ff"/><stop offset="0.1429" stop-color="#020dff"/><stop offset="0.6857" stop-color="#3800ff"/><stop offset="1" stop-color="#5b00ff"/></linearGradient><linearGradient id="i115" gradientUnits="userSpaceOnUse" x1="1291.88" x2="1355.88"><stop offset="0" stop-color="#000eff"/><stop offset="0.1562" stop-color="#020aff"/><stop offset="0.6562" stop-color="#2f00ff"/><stop offset="1" stop-color="#5100ff"/></linearGradient><linearGradient id="i116" gradientUnits="userSpaceOnUse" x1="1290.77" x2="1348.77"><stop offset="0" stop-color="#000bff"/><stop offset="0.1724" stop-color="#0208ff"/><stop offset="0.6207" stop-color="#2600ff"/><stop offset="1" stop-color="#4700ff"/></linearGradient><linearGradient id="i117" gradientUnits="userSpaceOnUse" x1="1290" x2="1340"><stop offset="0" stop-color="#0009ff"/><stop offset="0.16" stop-color="#0006ff"/><stop offset="0.6" stop-color="#1d00ff"/><stop offset="1" stop-color="#3a00ff"/></linearGradient><linearGradient id="i118" gradientUnits="userSpaceOnUse" x1="1290" x2="1334"><stop offset="0" stop-color="#0006ff"/><stop offset="0.1818" stop-color="#0104ff"/><stop offset="0.5455" stop-color="#1600ff"/><stop offset="1" stop-color="#30f"/></linearGradient><linearGradient id="i119" gradientUnits="userSpaceOnUse" x1="1290" x2="1326"><stop offset="0" stop-color="#0004ff"/><stop offset="0.1667" stop-color="#0002ff"/><stop offset="1" stop-color="#2800ff"/></linearGradient><linearGradient id="i120" gradientUnits="userSpaceOnUse" x1="1290" x2="1318"><stop offset="0" stop-color="#0001ff"/><stop offset="0.2143" stop-color="#0100ff"/><stop offset="1" stop-color="#1f00ff"/></linearGradient><linearGradient id="i121" gradientUnits="userSpaceOnUse" x1="1290" x2="1312"><stop offset="0" stop-color="#00f"/><stop offset="0.1818" stop-color="#00f"/><stop offset="1" stop-color="#1800ff"/></linearGradient><linearGradient id="n0" gradientUnits="userSpaceOnUse" x1="1642" x2="1903"><stop offset="0" stop-color="#86ffce"/><stop offset="0.6322" stop-color="#e4ffca"/><stop offset="0.8046" stop-color="#fffec8"/><stop offset="1" stop-color="#ffe0af"/></linearGradient><linearGradient id="n1" gradientUnits="userSpaceOnUse" x1="1642" x2="1903"><stop offset="0" stop-color="#87ffd0"/><stop offset="0.6322" stop-color="#e6ffcc"/><stop offset="0.7931" stop-color="#fffeca"/><stop offset="1" stop-color="#ffdeb0"/></linearGradient><linearGradient id="n2" gradientUnits="userSpaceOnUse" x1="1642" x2="1903"><stop offset="0" stop-color="#89ffd2"/><stop offset="0.6322" stop-color="#e8ffce"/><stop offset="0.7816" stop-color="#fffdcc"/><stop offset="1" stop-color="#ffdcb0"/></linearGradient><linearGradient id="n3" gradientUnits="userSpaceOnUse" x1="1642" x2="1903"><stop offset="0" stop-color="#8affd4"/><stop offset="0.6207" stop-color="#e8ffd0"/><stop offset="0.7701" stop-color="#fffdce"/><stop offset="1" stop-color="#ffdbb0"/></linearGradient><linearGradient id="n4" gradientUnits="userSpaceOnUse" x1="1642" x2="1903"><stop offset="0" stop-color="#8bffd6"/><stop offset="0.6207" stop-color="#eaffd2"/><stop offset="0.7586" stop-color="#fffdd0"/><stop offset="1" stop-color="#ffd9b1"/></linearGradient><linearGradient id="n5" gradientUnits="userSpaceOnUse" x1="1642" x2="1903"><stop offset="0" stop-color="#8dffd7"/><stop offset="0.6207" stop-color="#ebffd4"/><stop offset="0.7471" stop-color="#fffdd2"/><stop offset="1" stop-color="#ffd7b1"/></linearGradient><linearGradient id="n6" gradientUnits="userSpaceOnUse" x1="1642" x2="1903"><stop offset="0" stop-color="#8effd9"/><stop offset="0.6092" stop-color="#ecffd6"/><stop offset="0.7356" stop-color="#fffdd4"/><stop offset="1" stop-color="#ffd6b1"/></linearGradient><linearGradient id="n7" gradientUnits="userSpaceOnUse" x1="1642" x2="1903"><stop offset="0" stop-color="#8fffdb"/><stop offset="0.6092" stop-color="#edffd8"/><stop offset="0.7241" stop-color="#fffdd6"/><stop offset="1" stop-color="#ffd4b2"/></linearGradient><linearGradient id="n8" gradientUnits="userSpaceOnUse" x1="1642" x2="1903"><stop offset="0" stop-color="#91ffdd"/><stop offset="0.6092" stop-color="#efffda"/><stop offset="0.7126" stop-color="#fffdd8"/><stop offset="1" stop-color="#ffd2b2"/></linearGradient><linearGradient id="n9" gradientUnits="userSpaceOnUse" x1="1642" x2="1903"><stop offset="0" stop-color="#92ffdf"/><stop offset="0.6092" stop-color="#f1ffdc"/><stop offset="0.7011" stop-color="#fffdda"/><stop offset="1" stop-color="#ffd0b3"/></linearGradient><linearGradient id="n10" gradientUnits="userSpaceOnUse" x1="1642" x2="1903"><stop offset="0" stop-color="#94ffe1"/><stop offset="0.5977" stop-color="#f2ffde"/><stop offset="0.6897" stop-color="#fffddc"/><stop offset="1" stop-color="#ffcfb3"/></linearGradient><linearGradient id="n11" gradientUnits="userSpaceOnUse" x1="1642" x2="1903"><stop offset="0" stop-color="#95ffe3"/><stop offset="0.5977" stop-color="#f4ffe0"/><stop offset="0.6782" stop-color="#fffcde"/><stop offset="1" stop-color="#ffcdb3"/></linearGradient><linearGradient id="n12" gradientUnits="userSpaceOnUse" x1="1642" x2="1903"><stop offset="0" stop-color="#96ffe5"/><stop offset="0.5977" stop-color="#f6ffe3"/><stop offset="0.6667" stop-color="#fffce0"/><stop offset="0.9885" stop-color="#ffcdb5"/><stop offset="1" stop-color="#ffcbb4"/></linearGradient><linearGradient id="n13" gradientUnits="userSpaceOnUse" x1="1642" x2="1903"><stop offset="0" stop-color="#98ffe7"/><stop offset="0.5862" stop-color="#f6ffe5"/><stop offset="0.6552" stop-color="#fffce2"/><stop offset="0.977" stop-color="#ffcdb6"/><stop offset="1" stop-color="#ffcab4"/></linearGradient><linearGradient id="n14" gradientUnits="userSpaceOnUse" x1="1642" x2="1903"><stop offset="0" stop-color="#99ffe9"/><stop offset="0.5862" stop-color="#f8ffe7"/><stop offset="0.6437" stop-color="#fffce4"/><stop offset="0.9655" stop-color="#ffccb8"/><stop offset="1" stop-color="#ffc8b4"/></linearGradient><linearGradient id="n15" gradientUnits="userSpaceOnUse" x1="1642" x2="1903"><stop offset="0" stop-color="#9bffeb"/><stop offset="0.5862" stop-color="#faffe9"/><stop offset="0.6322" stop-color="#fffce6"/><stop offset="0.954" stop-color="#ffccba"/><stop offset="1" stop-color="#ffc7b4"/></linearGradient><linearGradient id="n16" gradientUnits="userSpaceOnUse" x1="1642" x2="1903"><stop offset="0" stop-color="#9cffed"/><stop offset="0.5862" stop-color="#fcffeb"/><stop offset="0.6437" stop-color="#fff8e5"/><stop offset="0.977" stop-color="#ffc8b7"/><stop offset="1" stop-color="#ffc5b5"/></linearGradient><linearGradient id="n17" gradientUnits="userSpaceOnUse" x1="1642" x2="1903"><stop offset="0" stop-color="#9effef"/><stop offset="0.5747" stop-color="#fcffee"/><stop offset="0.6437" stop-color="#fff6e5"/><stop offset="0.977" stop-color="#ffc6b8"/><stop offset="1" stop-color="#ffc3b5"/></linearGradient><linearGradient id="n18" gradientUnits="userSpaceOnUse" x1="1642" x2="1903"><stop offset="0" stop-color="#9ffff1"/><stop offset="0.5862" stop-color="#fffeef"/><stop offset="0.908" stop-color="#ffcdc0"/><stop offset="1" stop-color="#ffc2b5"/></linearGradient><linearGradient id="n19" gradientUnits="userSpaceOnUse" x1="1642" x2="1903"><stop offset="0" stop-color="#a1fff3"/><stop offset="0.5747" stop-color="#fffef1"/><stop offset="0.8851" stop-color="#ffcec3"/><stop offset="1" stop-color="#ffc0b6"/></linearGradient><linearGradient id="n20" gradientUnits="userSpaceOnUse" x1="1642" x2="1903"><stop offset="0" stop-color="#a2fff5"/><stop offset="0.5632" stop-color="#fffdf3"/><stop offset="0.8736" stop-color="#ffcec5"/><stop offset="1" stop-color="#ffbeb6"/></linearGradient><linearGradient id="n21" gradientUnits="userSpaceOnUse" x1="1642" x2="1903"><stop offset="0" stop-color="#a4fff7"/><stop offset="0.5517" stop-color="#fffdf5"/><stop offset="0.8621" stop-color="#ffcec7"/><stop offset="1" stop-color="#ffbdb6"/></linearGradient><linearGradient id="n22" gradientUnits="userSpaceOnUse" x1="1642" x2="1903"><stop offset="0" stop-color="#a5fff9"/><stop offset="0.5402" stop-color="#fffdf7"/><stop offset="0.8506" stop-color="#ffcec9"/><stop offset="1" stop-color="#ffbbb7"/></linearGradient><linearGradient id="n23" gradientUnits="userSpaceOnUse" x1="1642" x2="1903"><stop offset="0" stop-color="#a7fffc"/><stop offset="0.5287" stop-color="#fffdfa"/><stop offset="0.8391" stop-color="#ffcdca"/><stop offset="1" stop-color="#ffbab7"/></linearGradient><linearGradient id="n24" gradientUnits="userSpaceOnUse" x1="1642" x2="1903"><stop offset="0" stop-color="#a9fffe"/><stop offset="0.5172" stop-color="#fffdfc"/><stop offset="0.8276" stop-color="#ffcdcc"/><stop offset="1" stop-color="#ffb8b7"/></linearGradient><linearGradient id="n25" gradientUnits="userSpaceOnUse" x1="1642" x2="1903"><stop offset="0" stop-color="#aafeff"/><stop offset="0.5057" stop-color="#fffdfe"/><stop offset="0.8161" stop-color="#ffcdce"/><stop offset="1" stop-color="#ffb7b8"/></linearGradient><linearGradient id="n26" gradientUnits="userSpaceOnUse" x1="1642" x2="1903"><stop offset="0" stop-color="#aafcff"/><stop offset="0.5057" stop-color="#fffbfe"/><stop offset="0.8161" stop-color="#ffcbce"/><stop offset="1" stop-color="#ffb5b8"/></linearGradient><linearGradient id="n27" gradientUnits="userSpaceOnUse" x1="1642" x2="1903"><stop offset="0" stop-color="#aafaff"/><stop offset="0.5057" stop-color="#fff9fe"/><stop offset="0.8161" stop-color="#ffc9cf"/><stop offset="1" stop-color="#ffb4b8"/></linearGradient><linearGradient id="n28" gradientUnits="userSpaceOnUse" x1="1642" x2="1903"><stop offset="0" stop-color="#aaf7ff"/><stop offset="0.5057" stop-color="#fff6ff"/><stop offset="0.8161" stop-color="#ffc8cf"/><stop offset="1" stop-color="#ffb2b9"/></linearGradient><linearGradient id="n29" gradientUnits="userSpaceOnUse" x1="1642" x2="1903"><stop offset="0" stop-color="#aaf5ff"/><stop offset="0.5057" stop-color="#fff4ff"/><stop offset="0.8161" stop-color="#ffc6cf"/><stop offset="1" stop-color="#ffb0b9"/></linearGradient><linearGradient id="n30" gradientUnits="userSpaceOnUse" x1="1642" x2="1903"><stop offset="0" stop-color="#aaf3ff"/><stop offset="0.5057" stop-color="#fff2ff"/><stop offset="0.8161" stop-color="#ffc4cf"/><stop offset="1" stop-color="#ffafb9"/></linearGradient><linearGradient id="n31" gradientUnits="userSpaceOnUse" x1="1642" x2="1903"><stop offset="0" stop-color="#abf1ff"/><stop offset="0.5172" stop-color="#ffeefd"/><stop offset="0.8391" stop-color="#ffc0cd"/><stop offset="1" stop-color="#ffadb9"/></linearGradient><linearGradient id="n32" gradientUnits="userSpaceOnUse" x1="1642" x2="1903"><stop offset="0" stop-color="#abefff"/><stop offset="0.5172" stop-color="#ffecfd"/><stop offset="0.8391" stop-color="#ffbecd"/><stop offset="1" stop-color="#ffacba"/></linearGradient><linearGradient id="n33" gradientUnits="userSpaceOnUse" x1="1642" x2="1903"><stop offset="0" stop-color="#abedff"/><stop offset="0.5172" stop-color="#ffeafd"/><stop offset="0.8391" stop-color="#ffbccd"/><stop offset="1" stop-color="#ffaaba"/></linearGradient><linearGradient id="n34" gradientUnits="userSpaceOnUse" x1="1642" x2="1903"><stop offset="0" stop-color="#abebff"/><stop offset="0.5172" stop-color="#ffe8fe"/><stop offset="0.8391" stop-color="#ffbbcd"/><stop offset="1" stop-color="#ffa9ba"/></linearGradient><linearGradient id="n35" gradientUnits="userSpaceOnUse" x1="1642" x2="1903"><stop offset="0" stop-color="#abe9ff"/><stop offset="0.5172" stop-color="#ffe6fe"/><stop offset="0.8391" stop-color="#ffb9ce"/><stop offset="1" stop-color="#ffa7bb"/></linearGradient><linearGradient id="n36" gradientUnits="userSpaceOnUse" x1="1642" x2="1903"><stop offset="0" stop-color="#abe7ff"/><stop offset="0.5172" stop-color="#ffe4fe"/><stop offset="0.8391" stop-color="#ffb7ce"/><stop offset="1" stop-color="#ffa6bb"/></linearGradient><linearGradient id="n37" gradientUnits="userSpaceOnUse" x1="1642" x2="1903"><stop offset="0" stop-color="#abe4ff"/><stop offset="0.5172" stop-color="#ffe2fe"/><stop offset="0.8391" stop-color="#ffb6ce"/><stop offset="1" stop-color="#ffa4bb"/></linearGradient><linearGradient id="n38" gradientUnits="userSpaceOnUse" x1="1642" x2="1903"><stop offset="0" stop-color="#abe2ff"/><stop offset="0.5172" stop-color="#ffdffe"/><stop offset="0.8391" stop-color="#ffb4ce"/><stop offset="1" stop-color="#ffa3bc"/></linearGradient><linearGradient id="n39" gradientUnits="userSpaceOnUse" x1="1642" x2="1903"><stop offset="0" stop-color="#ace0ff"/><stop offset="0.5172" stop-color="#ffddfe"/><stop offset="0.8391" stop-color="#ffb3cf"/><stop offset="1" stop-color="#ffa2bc"/></linearGradient><linearGradient id="n40" gradientUnits="userSpaceOnUse" x1="1642" x2="1903"><stop offset="0" stop-color="#acdeff"/><stop offset="0.5172" stop-color="#ffdbff"/><stop offset="0.8391" stop-color="#ffb1cf"/><stop offset="1" stop-color="#ffa0bc"/></linearGradient><linearGradient id="n41" gradientUnits="userSpaceOnUse" x1="1642" x2="1903"><stop offset="0" stop-color="#acdcff"/><stop offset="0.5172" stop-color="#ffd9ff"/><stop offset="0.8391" stop-color="#ffafcf"/><stop offset="1" stop-color="#ff9fbc"/></linearGradient><linearGradient id="n42" gradientUnits="userSpaceOnUse" x1="1642" x2="1903"><stop offset="0" stop-color="#acdaff"/><stop offset="0.5287" stop-color="#ffd6fd"/><stop offset="0.8621" stop-color="#ffabcd"/><stop offset="1" stop-color="#ff9dbd"/></linearGradient><linearGradient id="n43" gradientUnits="userSpaceOnUse" x1="1642" x2="1903"><stop offset="0" stop-color="#acd8ff"/><stop offset="0.5287" stop-color="#ffd4fd"/><stop offset="0.8621" stop-color="#ffaacd"/><stop offset="1" stop-color="#ff9cbd"/></linearGradient><linearGradient id="n44" gradientUnits="userSpaceOnUse" x1="1642" x2="1903"><stop offset="0" stop-color="#acd7ff"/><stop offset="0.5287" stop-color="#ffd2fd"/><stop offset="0.8621" stop-color="#ffa8cd"/><stop offset="1" stop-color="#ff9abd"/></linearGradient><linearGradient id="n45" gradientUnits="userSpaceOnUse" x1="1642" x2="1903"><stop offset="0" stop-color="#acd5ff"/><stop offset="0.5287" stop-color="#ffd0fd"/><stop offset="0.8621" stop-color="#ffa7cd"/><stop offset="1" stop-color="#ff99be"/></linearGradient><linearGradient id="n46" gradientUnits="userSpaceOnUse" x1="1642" x2="1903"><stop offset="0" stop-color="#acd3ff"/><stop offset="0.5287" stop-color="#ffcefe"/><stop offset="0.8621" stop-color="#ffa5ce"/><stop offset="1" stop-color="#ff98be"/></linearGradient><linearGradient id="n47" gradientUnits="userSpaceOnUse" x1="1642" x2="1903"><stop offset="0" stop-color="#add1ff"/><stop offset="0.5287" stop-color="#ffccfe"/><stop offset="0.8621" stop-color="#ffa4ce"/><stop offset="1" stop-color="#ff96be"/></linearGradient><linearGradient id="n48" gradientUnits="userSpaceOnUse" x1="1642" x2="1903"><stop offset="0" stop-color="#adcfff"/><stop offset="0.5287" stop-color="#ffcafe"/><stop offset="0.8621" stop-color="#ffa2ce"/><stop offset="1" stop-color="#ff95be"/></linearGradient><linearGradient id="n49" gradientUnits="userSpaceOnUse" x1="1642" x2="1903"><stop offset="0" stop-color="#adcdff"/><stop offset="0.5287" stop-color="#ffc8fe"/><stop offset="0.8621" stop-color="#ffa1ce"/><stop offset="1" stop-color="#ff93bf"/></linearGradient><linearGradient id="lg31" x1="0" y1="0" x2="0" y2="1"><stop offset="0" stop-color="#474747"/><stop offset="1" stop-color="#2b2b2b"/></linearGradient><linearGradient id="lg32" x1="0" y1="0" x2="0" y2="1"><stop offset="0" stop-color="#a2a2a2"/><stop offset="0.5" stop-color="#7c7c7c"/><stop offset="1" stop-color="#5a5a5a"/></linearGradient><linearGradient id="lg33" x1="0" y1="0" x2="0" y2="1"><stop offset="0" stop-color="#828282"/><stop offset="0.5" stop-color="#5c5c5c"/><stop offset="1" stop-color="#3e3e3e"/></linearGradient><linearGradient id="lg34" x1="0" y1="0" x2="0" y2="1"><stop offset="0" stop-color="#666666"/><stop offset="1" stop-color="#949494"/></linearGradient><linearGradient id="lg35" x1="0" y1="0" x2="0" y2="1"><stop offset="0" stop-color="#a0a0a0"/><stop offset="0.5" stop-color="#8c8c8c"/><stop offset="0.5" stop-color="#646464"/><stop offset="1" stop-color="#747474"/></linearGradient><linearGradient id="lg36" x1="0" y1="0" x2="0" y2="1"><stop offset="0" stop-color="#666666"/><stop offset="1" stop-color="#949494"/></linearGradient><linearGradient id="lg37" x1="0" y1="0" x2="0" y2="1"><stop offset="0" stop-color="#666666"/><stop offset="1" stop-color="#949494"/></linearGradient><linearGradient id="lg38" x1="0" y1="0" x2="0" y2="1"><stop offset="0" stop-color="#666666"/><stop offset="1" stop-color="#949494"/></linearGradient><linearGradient id="lg39" x1="0" y1="0" x2="0" y2="1"><stop offset="0" stop-color="#666666"/><stop offset="1" stop-color="#949494"/></linearGradient><linearGradient id="lg40" x1="0" y1="0" x2="0" y2="1"><stop offset="0" stop-color="#666666"/><stop offset="1" stop-color="#949494"/></linearGradient><linearGradient id="lg41" x1="0" y1="0" x2="0" y2="1"><stop offset="0" stop-color="#3c3c3c"/><stop offset="1" stop-color="#2a2a2a"/></linearGradient><linearGradient id="lg42" x1="0" y1="0" x2="0" y2="1"><stop offset="0" stop-color="#2c2c2c"/><stop offset="1" stop-color="#464646"/></linearGradient><linearGradient id="lg43" x1="0" y1="0" x2="0" y2="1"><stop offset="0" stop-color="#666666"/><stop offset="1" stop-color="#949494"/></linearGradient><linearGradient id="lg44" x1="0" y1="0" x2="0" y2="1"><stop offset="0" stop-color="#666666"/><stop offset="1" stop-color="#949494"/></linearGradient><linearGradient id="lg45" x1="0" y1="0" x2="1" y2="0"><stop offset="0" stop-color="#2b679c"/><stop offset="0.45" stop-color="#2c6fa2"/><stop offset="0.6" stop-color="#2e86ad"/><stop offset="1" stop-color="#2f98b6"/></linearGradient></defs>
<rect x="0" y="0" width="1920" height="23" fill="#62aed6"/>
<rect x="0" y="23" width="1920" height="66" fill="#222222"/>
<rect x="0" y="89" width="1920" height="951" fill="#333333"/>
<rect x="0" y="89" width="1" height="889" fill="#262626"/>
<rect x="1919" y="89" width="1" height="889" fill="#262626"/>
<rect x="2" y="3" width="16" height="16" fill="url(#lg1)"/>
<rect x="2" y="3" width="16" height="16" fill="url(#lg2)"/>
<path d="M2 19v-7l3 4.500 -1 2.500zM18 3v6l-3.500 -3 0.500 -3z" fill="#140808" opacity="0.6"/>
<rect x="2.2" y="12.4" width="2.6" height="2.2" fill="#2820a0" opacity="0.8"/>
<ellipse cx="9.600" cy="11" rx="6.200" ry="7.400" fill="url(#ichalo)"/>
<text x="9.8" y="16.4" font-size="14.8" fill="#000" text-anchor="middle" font-weight="bold" textLength="9.6" lengthAdjust="spacingAndGlyphs" stroke="#000" stroke-width="0.4">5</text>
<rect x="1828" y="11" width="8" height="2" fill="#111"/>
<path d="M1855.800 6v-1.500h6.700v7h-1.800" fill="none" stroke="#111" stroke-width="1"/>
<rect x="1853.5" y="7" width="6.8" height="6.4" fill="none" stroke="#111" stroke-width="1"/>
<rect x="1853" y="6" width="7.8" height="1.8" fill="#111"/>
<rect x="1872" y="0" width="45" height="18.8" fill="#c75050"/>
<path d="M1891 5.900l8 7.400M1899 5.900l-8 7.400" stroke="#fff" stroke-width="1.900" fill="none"/>
<rect x="0" y="22.6" width="1920" height="0.8" fill="#1c1c1c"/>
<path d="M1 23H183V49.500a3 3 0 0 1 -3 3H4a3 3 0 0 1 -3 -3Z" fill="url(#lg3)"/>
<path d="M1.300 23V49.500a2.700 2.700 0 0 0 2.700 2.700H180a2.700 2.700 0 0 0 2.700 -2.700V23" fill="none" stroke="#b8a8a8" stroke-opacity="0.9" stroke-width="1"/>
<text x="6.3" y="46.6" font-size="30" fill="#6a0808" font-weight="bold" textLength="116.3" lengthAdjust="spacingAndGlyphs" opacity="0.45" stroke="#6a0808" stroke-width="1.2">CalMAN</text>
<text x="5.9" y="45.7" font-size="30" fill="url(#lg4)" font-weight="bold" textLength="116.3" lengthAdjust="spacingAndGlyphs" stroke="url(#lg4)" stroke-width="0.9">CalMAN</text>
<text x="129.4" y="46.6" font-size="30" fill="#6a0808" font-weight="bold" textLength="17.5" lengthAdjust="spacingAndGlyphs" opacity="0.45" stroke="#6a0808" stroke-width="1.2">5</text>
<text x="129" y="45.7" font-size="30" fill="url(#lg4)" font-weight="bold" textLength="17.5" lengthAdjust="spacingAndGlyphs" stroke="url(#lg4)" stroke-width="0.9">5</text>
<circle cx="89.8" cy="29.7" r="1.5" fill="#8a1010"/>
<path d="M85.800 33.300l2.500 -1.300 2.600 0.600 2.700 -1.600M89.800 32.200l-1.200 3.200 2.600 1.600 0.300 2.400M88.600 35.400l-1.300 2 -2.300 0.700" stroke="#8a1010" stroke-width="1.300" fill="none" stroke-linecap="round" stroke-linejoin="round"/>
<circle cx="166" cy="37.5" r="10" fill="url(#lg5)"/>
<path d="M161 35h10l-5 5.500z" fill="#fff"/>
<rect x="190" y="36" width="1730" height="4" fill="url(#lg6)"/>
<rect x="190" y="35.2" width="1730" height="0.8" fill="url(#lg6)" opacity="0.45"/>
<rect x="190" y="40" width="1730" height="0.8" fill="url(#lg6)" opacity="0.45"/>
<path d="M-2 58.500H23.500a3.500 3.500 0 0 1 3.500 3.500V82a3.500 3.500 0 0 1 -3.500 3.500H-2Z" fill="url(#lg7)" stroke="#dcdcdc" stroke-width="1.200"/>
<circle cx="12.9" cy="72" r="10.2" fill="url(#lg8)"/>
<path d="M10 66.700v9.600l5.500 -4.800z" fill="#fff"/>
<path d="M29.500 89V62.500a4 4 0 0 1 4 -4H117a4 4 0 0 1 4 4V89" fill="url(#lg9)" stroke="#7c7c7c" stroke-width="1"/>
<line x1="87.5" y1="59" x2="87.5" y2="89" stroke="#7c7c7c" stroke-width="1"/>
<circle cx="103" cy="75" r="10" fill="url(#lg10)"/>
<path d="M103 72.300v6.600M99.700 75.600h6.600" stroke="#8c8c8c" stroke-width="1"/>
<path d="M1352.5 88V61.500a3 3 0 0 1 3 -3H1504.5a3 3 0 0 1 3 3V88Z" fill="url(#lg11)"/>
<path d="M1353.1 88V61.500a3 3 0 0 1 3 -3H1358.5V88Z" fill="#1fdc1f"/>
<circle cx="1452.3" cy="73" r="9.8" fill="url(#lg12)"/>
<path d="M1447.3 71.900h10l-5 5.400z" fill="#fff"/>
<line x1="1471.7" y1="60" x2="1471.7" y2="88" stroke="#3a3a3a" stroke-width="1"/>
<circle cx="1492" cy="72.7" r="12.5" fill="#0a0af0" stroke="#e8e8ff" stroke-width="1"/>
<text x="1492" y="76" font-size="9.5" fill="#fff" text-anchor="middle" textLength="15" lengthAdjust="spacingAndGlyphs">232</text>
<path d="M1513.3 88V61.500a3 3 0 0 1 3 -3H1665.5a3 3 0 0 1 3 3V88Z" fill="url(#lg11)"/>
<path d="M1513.9 88V61.500a3 3 0 0 1 3 -3H1519.3V88Z" fill="#e6e600"/>
<circle cx="1652.3" cy="73" r="9.8" fill="url(#lg13)"/>
<path d="M1647.3 71.900h10l-5 5.400z" fill="#fff"/>
<path d="M1675 88V61.500a3 3 0 0 1 3 -3H1814.8a3 3 0 0 1 3 3V88Z" fill="url(#lg11)"/>
<path d="M1675.6 88V61.500a3 3 0 0 1 3 -3H1681V88Z" fill="#e6e600"/>
<circle cx="1801.7" cy="73" r="9.8" fill="url(#lg14)"/>
<path d="M1796.7 71.900h10l-5 5.400z" fill="#fff"/>
<rect x="1821.5" y="58.5" width="33.5" height="27.5" fill="url(#lg15)" rx="3.5" stroke="#dcdcdc" stroke-width="1.2"/>
<circle cx="1838.25" cy="72.3" r="10" fill="url(#lg16)"/>
<rect x="1857.5" y="58.5" width="33" height="27.5" fill="url(#lg15)" rx="3.5" stroke="#dcdcdc" stroke-width="1.2"/>
<circle cx="1874" cy="72.3" r="10" fill="url(#lg17)"/>
<path d="M1896.500 58.500H1926V86H1896.500a3.500 3.500 0 0 1 -3.500 -3.500V62a3.500 3.500 0 0 1 3.500 -3.500Z" fill="url(#lg15)" stroke="#dcdcdc" stroke-width="1.200"/>
<circle cx="1906.8" cy="72.3" r="10" fill="url(#lg18)"/>
<path d="M1909.300 67v9.200l-5.300 -4.600z" fill="#fff"/>
<g transform="translate(1838 72.200)" fill="none" stroke="#dedede"><circle r="3.900" stroke-width="1.900"/><path d="M0 -6.400V-4.600M0 6.400V4.600M-6.400 0H-4.600M6.400 0H4.600M-4.500 -4.500L-3.300 -3.300M4.500 4.500L3.300 3.300M-4.500 4.500L-3.300 3.300M4.500 -4.500L3.300 -3.300" stroke-width="2.100"/></g>
<text x="1874" y="77.6" font-size="15.5" fill="#f0f0f0" text-anchor="middle" font-weight="bold" stroke="#f0f0f0" stroke-width="0.5">?</text>
<text x="185" y="213.8" font-size="15.2" fill="#d6d6d6" text-anchor="middle" textLength="95" lengthAdjust="spacingAndGlyphs">RGB Balance</text>
<rect x="55" y="220.5" width="291" height="500" fill="#242424"/>
<line x1="55" y1="670.5" x2="346" y2="670.5" stroke="#858585" stroke-width="1.2"/>
<line x1="55" y1="620.5" x2="346" y2="620.5" stroke="#858585" stroke-width="1.2"/>
<line x1="55" y1="570.5" x2="346" y2="570.5" stroke="#858585" stroke-width="1.2"/>
<line x1="55" y1="520.5" x2="346" y2="520.5" stroke="#858585" stroke-width="1.2"/>
<line x1="55" y1="470.5" x2="346" y2="470.5" stroke="#858585" stroke-width="1.2"/>
<line x1="55" y1="420.5" x2="346" y2="420.5" stroke="#858585" stroke-width="1.2"/>
<line x1="55" y1="370.5" x2="346" y2="370.5" stroke="#858585" stroke-width="1.2"/>
<line x1="55" y1="320.5" x2="346" y2="320.5" stroke="#858585" stroke-width="1.2"/>
<line x1="55" y1="270.5" x2="346" y2="270.5" stroke="#858585" stroke-width="1.2"/>
<rect x="55" y="220.5" width="291" height="500" fill="none" stroke="#8e8e8e" stroke-width="2"/>
<line x1="47.5" y1="720.5" x2="55" y2="720.5" stroke="#c8c8c8" stroke-width="1.2"/>
<line x1="47.5" y1="670.5" x2="55" y2="670.5" stroke="#c8c8c8" stroke-width="1.2"/>
<line x1="47.5" y1="620.5" x2="55" y2="620.5" stroke="#c8c8c8" stroke-width="1.2"/>
<line x1="47.5" y1="570.5" x2="55" y2="570.5" stroke="#c8c8c8" stroke-width="1.2"/>
<line x1="47.5" y1="520.5" x2="55" y2="520.5" stroke="#c8c8c8" stroke-width="1.2"/>
<line x1="47.5" y1="470.5" x2="55" y2="470.5" stroke="#c8c8c8" stroke-width="1.2"/>
<line x1="47.5" y1="420.5" x2="55" y2="420.5" stroke="#c8c8c8" stroke-width="1.2"/>
<line x1="47.5" y1="370.5" x2="55" y2="370.5" stroke="#c8c8c8" stroke-width="1.2"/>
<line x1="47.5" y1="320.5" x2="55" y2="320.5" stroke="#c8c8c8" stroke-width="1.2"/>
<line x1="47.5" y1="270.5" x2="55" y2="270.5" stroke="#c8c8c8" stroke-width="1.2"/>
<line x1="47.5" y1="220.5" x2="55" y2="220.5" stroke="#c8c8c8" stroke-width="1.2"/>
<line x1="55" y1="720.5" x2="55" y2="727" stroke="#c8c8c8" stroke-width="1.2"/>
<line x1="346" y1="720.5" x2="346" y2="727" stroke="#c8c8c8" stroke-width="1.2"/>
<text x="47.3" y="727.1" font-size="15.4" fill="#d6d6d6" text-anchor="end" textLength="22.4764" lengthAdjust="spacingAndGlyphs">-10</text>
<text x="47.3" y="677.1" font-size="15.4" fill="#d6d6d6" text-anchor="end" textLength="13.8283" lengthAdjust="spacingAndGlyphs">-8</text>
<text x="47.3" y="627.1" font-size="15.4" fill="#d6d6d6" text-anchor="end" textLength="13.8283" lengthAdjust="spacingAndGlyphs">-6</text>
<text x="47.3" y="577.1" font-size="15.4" fill="#d6d6d6" text-anchor="end" textLength="13.8283" lengthAdjust="spacingAndGlyphs">-4</text>
<text x="47.3" y="527.1" font-size="15.4" fill="#d6d6d6" text-anchor="end" textLength="13.8283" lengthAdjust="spacingAndGlyphs">-2</text>
<text x="47.3" y="477.1" font-size="15.4" fill="#d6d6d6" text-anchor="end" textLength="8.64813" lengthAdjust="spacingAndGlyphs">0</text>
<text x="47.3" y="427.1" font-size="15.4" fill="#d6d6d6" text-anchor="end" textLength="8.64813" lengthAdjust="spacingAndGlyphs">2</text>
<text x="47.3" y="377.1" font-size="15.4" fill="#d6d6d6" text-anchor="end" textLength="8.64813" lengthAdjust="spacingAndGlyphs">4</text>
<text x="47.3" y="327.1" font-size="15.4" fill="#d6d6d6" text-anchor="end" textLength="8.64813" lengthAdjust="spacingAndGlyphs">6</text>
<text x="47.3" y="277.1" font-size="15.4" fill="#d6d6d6" text-anchor="end" textLength="8.64813" lengthAdjust="spacingAndGlyphs">8</text>
<text x="47.3" y="227.1" font-size="15.4" fill="#d6d6d6" text-anchor="end" textLength="17.2963" lengthAdjust="spacingAndGlyphs">10</text>
<text x="200.5" y="738.3" font-size="15.4" fill="#d6d6d6" text-anchor="middle" textLength="44" lengthAdjust="spacingAndGlyphs">100W</text>
<rect x="84.5" y="470.5" width="77" height="236.5" fill="url(#lg19)" stroke="#000" stroke-width="1.4"/>
<rect x="162.7" y="380.5" width="77" height="90" fill="url(#lg20)" stroke="#000" stroke-width="1.4"/>
<rect x="241.3" y="470.5" width="77" height="219.5" fill="url(#lg21)" stroke="#000" stroke-width="1.4"/>
<text x="518" y="133.3" font-size="15.2" fill="#d6d6d6" text-anchor="middle" textLength="48" lengthAdjust="spacingAndGlyphs">DeltaL</text>
<rect x="454" y="138.5" width="158.5" height="352" fill="#242424"/>
<line x1="454" y1="197.5" x2="612.5" y2="197.5" stroke="#858585" stroke-width="1.1"/>
<line x1="454" y1="256" x2="612.5" y2="256" stroke="#858585" stroke-width="1.1"/>
<line x1="454" y1="315.7" x2="612.5" y2="315.7" stroke="#858585" stroke-width="1.1"/>
<line x1="454" y1="373.8" x2="612.5" y2="373.8" stroke="#858585" stroke-width="1.1"/>
<line x1="454" y1="432.5" x2="612.5" y2="432.5" stroke="#858585" stroke-width="1.1"/>
<line x1="469" y1="314.6" x2="596" y2="314.6" stroke="#111" stroke-width="1.4"/>
<line x1="454" y1="196" x2="612.5" y2="196" stroke="#e81e1e" stroke-width="2.2"/>
<line x1="454" y1="432" x2="612.5" y2="432" stroke="#e81e1e" stroke-width="2.2"/>
<line x1="454" y1="255" x2="612.5" y2="255" stroke="#eeee10" stroke-width="2"/>
<line x1="454" y1="373" x2="612.5" y2="373" stroke="#eeee10" stroke-width="2"/>
<line x1="454" y1="278.4" x2="612.5" y2="278.4" stroke="#0a8a0a" stroke-width="1.3"/>
<line x1="454" y1="349.6" x2="612.5" y2="349.6" stroke="#0a8a0a" stroke-width="1.3"/>
<rect x="454" y="138.5" width="158.5" height="352" fill="none" stroke="#8e8e8e" stroke-width="2"/>
<line x1="446.5" y1="138.5" x2="454" y2="138.5" stroke="#c8c8c8" stroke-width="1.2"/>
<line x1="446.5" y1="197.5" x2="454" y2="197.5" stroke="#c8c8c8" stroke-width="1.2"/>
<line x1="446.5" y1="256" x2="454" y2="256" stroke="#c8c8c8" stroke-width="1.2"/>
<line x1="446.5" y1="315.7" x2="454" y2="315.7" stroke="#c8c8c8" stroke-width="1.2"/>
<line x1="446.5" y1="373.8" x2="454" y2="373.8" stroke="#c8c8c8" stroke-width="1.2"/>
<line x1="446.5" y1="432.5" x2="454" y2="432.5" stroke="#c8c8c8" stroke-width="1.2"/>
<line x1="446.5" y1="490.5" x2="454" y2="490.5" stroke="#c8c8c8" stroke-width="1.2"/>
<line x1="454" y1="490.5" x2="454" y2="497" stroke="#c8c8c8" stroke-width="1.2"/>
<line x1="612.5" y1="490.5" x2="612.5" y2="497" stroke="#c8c8c8" stroke-width="1.2"/>
<text x="446.4" y="145.3" font-size="15.4" fill="#d6d6d6" text-anchor="end" textLength="17.2963" lengthAdjust="spacingAndGlyphs">15</text>
<text x="446.4" y="204.3" font-size="15.4" fill="#d6d6d6" text-anchor="end" textLength="17.2963" lengthAdjust="spacingAndGlyphs">10</text>
<text x="446.4" y="262.7" font-size="15.4" fill="#d6d6d6" text-anchor="end" textLength="8.64813" lengthAdjust="spacingAndGlyphs">5</text>
<text x="446.4" y="322.5" font-size="15.4" fill="#d6d6d6" text-anchor="end" textLength="8.64813" lengthAdjust="spacingAndGlyphs">0</text>
<text x="446.4" y="380.6" font-size="15.4" fill="#d6d6d6" text-anchor="end" textLength="13.8283" lengthAdjust="spacingAndGlyphs">-5</text>
<text x="446.4" y="439.3" font-size="15.4" fill="#d6d6d6" text-anchor="end" textLength="22.4764" lengthAdjust="spacingAndGlyphs">-10</text>
<text x="446.4" y="497.3" font-size="15.4" fill="#d6d6d6" text-anchor="end" textLength="22.4764" lengthAdjust="spacingAndGlyphs">-15</text>
<text x="534" y="507.8" font-size="15.4" fill="#d6d6d6" text-anchor="middle" textLength="43.5" lengthAdjust="spacingAndGlyphs">100W</text>
<text x="737.3" y="133.3" font-size="15.2" fill="#d6d6d6" text-anchor="middle" textLength="49.5" lengthAdjust="spacingAndGlyphs">DeltaC</text>
<rect x="673" y="138.5" width="158.5" height="352" fill="#242424"/>
<line x1="673" y1="197.5" x2="831.5" y2="197.5" stroke="#858585" stroke-width="1.1"/>
<line x1="673" y1="256" x2="831.5" y2="256" stroke="#858585" stroke-width="1.1"/>
<line x1="673" y1="315.7" x2="831.5" y2="315.7" stroke="#858585" stroke-width="1.1"/>
<line x1="673" y1="373.8" x2="831.5" y2="373.8" stroke="#858585" stroke-width="1.1"/>
<line x1="673" y1="432.5" x2="831.5" y2="432.5" stroke="#858585" stroke-width="1.1"/>
<rect x="689.3" y="227.3" width="125" height="87.7" fill="url(#lg22)" stroke="#000" stroke-width="2"/>
<line x1="673" y1="196" x2="831.5" y2="196" stroke="#e81e1e" stroke-width="2.2"/>
<line x1="673" y1="432" x2="831.5" y2="432" stroke="#e81e1e" stroke-width="2.2"/>
<line x1="673" y1="255" x2="831.5" y2="255" stroke="#eeee10" stroke-width="2"/>
<line x1="673" y1="373" x2="831.5" y2="373" stroke="#eeee10" stroke-width="2"/>
<line x1="673" y1="278.4" x2="831.5" y2="278.4" stroke="#0a8a0a" stroke-width="1.3"/>
<line x1="673" y1="349.6" x2="831.5" y2="349.6" stroke="#0a8a0a" stroke-width="1.3"/>
<rect x="673" y="138.5" width="158.5" height="352" fill="none" stroke="#8e8e8e" stroke-width="2"/>
<line x1="665.5" y1="138.5" x2="673" y2="138.5" stroke="#c8c8c8" stroke-width="1.2"/>
<line x1="665.5" y1="197.5" x2="673" y2="197.5" stroke="#c8c8c8" stroke-width="1.2"/>
<line x1="665.5" y1="256" x2="673" y2="256" stroke="#c8c8c8" stroke-width="1.2"/>
<line x1="665.5" y1="315.7" x2="673" y2="315.7" stroke="#c8c8c8" stroke-width="1.2"/>
<line x1="665.5" y1="373.8" x2="673" y2="373.8" stroke="#c8c8c8" stroke-width="1.2"/>
<line x1="665.5" y1="432.5" x2="673" y2="432.5" stroke="#c8c8c8" stroke-width="1.2"/>
<line x1="665.5" y1="490.5" x2="673" y2="490.5" stroke="#c8c8c8" stroke-width="1.2"/>
<line x1="673" y1="490.5" x2="673" y2="497" stroke="#c8c8c8" stroke-width="1.2"/>
<line x1="831.5" y1="490.5" x2="831.5" y2="497" stroke="#c8c8c8" stroke-width="1.2"/>
<text x="665.4" y="145.3" font-size="15.4" fill="#d6d6d6" text-anchor="end" textLength="17.2963" lengthAdjust="spacingAndGlyphs">15</text>
<text x="665.4" y="204.3" font-size="15.4" fill="#d6d6d6" text-anchor="end" textLength="17.2963" lengthAdjust="spacingAndGlyphs">10</text>
<text x="665.4" y="262.7" font-size="15.4" fill="#d6d6d6" text-anchor="end" textLength="8.64813" lengthAdjust="spacingAndGlyphs">5</text>
<text x="665.4" y="322.5" font-size="15.4" fill="#d6d6d6" text-anchor="end" textLength="8.64813" lengthAdjust="spacingAndGlyphs">0</text>
<text x="665.4" y="380.6" font-size="15.4" fill="#d6d6d6" text-anchor="end" textLength="13.8283" lengthAdjust="spacingAndGlyphs">-5</text>
<text x="665.4" y="439.3" font-size="15.4" fill="#d6d6d6" text-anchor="end" textLength="22.4764" lengthAdjust="spacingAndGlyphs">-10</text>
<text x="665.4" y="497.3" font-size="15.4" fill="#d6d6d6" text-anchor="end" textLength="22.4764" lengthAdjust="spacingAndGlyphs">-15</text>
<text x="753" y="507.8" font-size="15.4" fill="#d6d6d6" text-anchor="middle" textLength="43.5" lengthAdjust="spacingAndGlyphs">100W</text>
<text x="956.5" y="133.3" font-size="15.2" fill="#d6d6d6" text-anchor="middle" textLength="51.5" lengthAdjust="spacingAndGlyphs">DeltaH</text>
<rect x="893" y="138.5" width="158.5" height="352" fill="#242424"/>
<line x1="893" y1="197.5" x2="1051.5" y2="197.5" stroke="#858585" stroke-width="1.1"/>
<line x1="893" y1="256" x2="1051.5" y2="256" stroke="#858585" stroke-width="1.1"/>
<line x1="893" y1="315.7" x2="1051.5" y2="315.7" stroke="#858585" stroke-width="1.1"/>
<line x1="893" y1="373.8" x2="1051.5" y2="373.8" stroke="#858585" stroke-width="1.1"/>
<line x1="893" y1="432.5" x2="1051.5" y2="432.5" stroke="#858585" stroke-width="1.1"/>
<line x1="908" y1="314.6" x2="1035" y2="314.6" stroke="#111" stroke-width="1.4"/>
<line x1="893" y1="196" x2="1051.5" y2="196" stroke="#e81e1e" stroke-width="2.2"/>
<line x1="893" y1="432" x2="1051.5" y2="432" stroke="#e81e1e" stroke-width="2.2"/>
<line x1="893" y1="255" x2="1051.5" y2="255" stroke="#eeee10" stroke-width="2"/>
<line x1="893" y1="373" x2="1051.5" y2="373" stroke="#eeee10" stroke-width="2"/>
<line x1="893" y1="278.4" x2="1051.5" y2="278.4" stroke="#0a8a0a" stroke-width="1.3"/>
<line x1="893" y1="349.6" x2="1051.5" y2="349.6" stroke="#0a8a0a" stroke-width="1.3"/>
<rect x="893" y="138.5" width="158.5" height="352" fill="none" stroke="#8e8e8e" stroke-width="2"/>
<line x1="885.5" y1="138.5" x2="893" y2="138.5" stroke="#c8c8c8" stroke-width="1.2"/>
<line x1="885.5" y1="197.5" x2="893" y2="197.5" stroke="#c8c8c8" stroke-width="1.2"/>
<line x1="885.5" y1="256" x2="893" y2="256" stroke="#c8c8c8" stroke-width="1.2"/>
<line x1="885.5" y1="315.7" x2="893" y2="315.7" stroke="#c8c8c8" stroke-width="1.2"/>
<line x1="885.5" y1="373.8" x2="893" y2="373.8" stroke="#c8c8c8" stroke-width="1.2"/>
<line x1="885.5" y1="432.5" x2="893" y2="432.5" stroke="#c8c8c8" stroke-width="1.2"/>
<line x1="885.5" y1="490.5" x2="893" y2="490.5" stroke="#c8c8c8" stroke-width="1.2"/>
<line x1="893" y1="490.5" x2="893" y2="497" stroke="#c8c8c8" stroke-width="1.2"/>
<line x1="1051.5" y1="490.5" x2="1051.5" y2="497" stroke="#c8c8c8" stroke-width="1.2"/>
<text x="885.4" y="145.3" font-size="15.4" fill="#d6d6d6" text-anchor="end" textLength="17.2963" lengthAdjust="spacingAndGlyphs">15</text>
<text x="885.4" y="204.3" font-size="15.4" fill="#d6d6d6" text-anchor="end" textLength="17.2963" lengthAdjust="spacingAndGlyphs">10</text>
<text x="885.4" y="262.7" font-size="15.4" fill="#d6d6d6" text-anchor="end" textLength="8.64813" lengthAdjust="spacingAndGlyphs">5</text>
<text x="885.4" y="322.5" font-size="15.4" fill="#d6d6d6" text-anchor="end" textLength="8.64813" lengthAdjust="spacingAndGlyphs">0</text>
<text x="885.4" y="380.6" font-size="15.4" fill="#d6d6d6" text-anchor="end" textLength="13.8283" lengthAdjust="spacingAndGlyphs">-5</text>
<text x="885.4" y="439.3" font-size="15.4" fill="#d6d6d6" text-anchor="end" textLength="22.4764" lengthAdjust="spacingAndGlyphs">-10</text>
<text x="885.4" y="497.3" font-size="15.4" fill="#d6d6d6" text-anchor="end" textLength="22.4764" lengthAdjust="spacingAndGlyphs">-15</text>
<text x="973" y="507.8" font-size="15.4" fill="#d6d6d6" text-anchor="middle" textLength="43.5" lengthAdjust="spacingAndGlyphs">100W</text>
<rect x="377" y="519" width="736" height="177" fill="#000"/>
<rect x="397.7" y="526.7" width="76.4" height="62.6" fill="#b5beb2" stroke="#f4f4f4" stroke-width="1.4"/>
<rect x="397.7" y="607.7" width="76.4" height="62.6" fill="#bfbfbf" stroke="#f4f4f4" stroke-width="1.4"/>
<text x="436" y="687" font-size="13.6" fill="#fff" text-anchor="middle" textLength="38" lengthAdjust="spacingAndGlyphs" stroke="#fff" stroke-width="0.35">White</text>
<rect x="488.7" y="526.7" width="75.6" height="62.6" fill="#941b0c" stroke="#f4f4f4" stroke-width="1.4"/>
<rect x="488.7" y="607.7" width="75.6" height="62.6" fill="#bf0000" stroke="#f4f4f4" stroke-width="1.4"/>
<text x="526" y="687" font-size="13.6" fill="#fff" text-anchor="middle" textLength="25" lengthAdjust="spacingAndGlyphs" stroke="#fff" stroke-width="0.35">Red</text>
<rect x="578.7" y="526.7" width="75.6" height="62.6" fill="#5eac00" stroke="#f4f4f4" stroke-width="1.4"/>
<rect x="578.7" y="607.7" width="75.6" height="62.6" fill="#28b928" stroke="#f4f4f4" stroke-width="1.4"/>
<text x="616" y="687" font-size="13.6" fill="#fff" text-anchor="middle" textLength="39.5" lengthAdjust="spacingAndGlyphs" stroke="#fff" stroke-width="0.35">Green</text>
<rect x="668.7" y="526.7" width="75.6" height="62.6" fill="#0024a5" stroke="#f4f4f4" stroke-width="1.4"/>
<rect x="668.7" y="607.7" width="75.6" height="62.6" fill="#0a0ab9" stroke="#f4f4f4" stroke-width="1.4"/>
<text x="706" y="687" font-size="13.6" fill="#fff" text-anchor="middle" textLength="28.5" lengthAdjust="spacingAndGlyphs" stroke="#fff" stroke-width="0.35">Blue</text>
<rect x="758.7" y="526.7" width="75.6" height="62.6" fill="#50aea3" stroke="#f4f4f4" stroke-width="1.4"/>
<rect x="758.7" y="607.7" width="75.6" height="62.6" fill="#00b9b9" stroke="#f4f4f4" stroke-width="1.4"/>
<text x="796" y="687" font-size="13.6" fill="#fff" text-anchor="middle" textLength="30" lengthAdjust="spacingAndGlyphs" stroke="#fff" stroke-width="0.35">Cyan</text>
<rect x="848.7" y="526.7" width="75.6" height="62.6" fill="#962ca8" stroke="#f4f4f4" stroke-width="1.4"/>
<rect x="848.7" y="607.7" width="75.6" height="62.6" fill="#b900b9" stroke="#f4f4f4" stroke-width="1.4"/>
<text x="886" y="687" font-size="13.6" fill="#fff" text-anchor="middle" textLength="55.7" lengthAdjust="spacingAndGlyphs" stroke="#fff" stroke-width="0.35">Magenta</text>
<rect x="938.7" y="526.7" width="75.6" height="62.6" fill="#adac00" stroke="#f4f4f4" stroke-width="1.4"/>
<rect x="938.7" y="607.7" width="75.6" height="62.6" fill="#bfbd32" stroke="#f4f4f4" stroke-width="1.4"/>
<text x="976" y="687" font-size="13.6" fill="#fff" text-anchor="middle" textLength="40.5" lengthAdjust="spacingAndGlyphs" stroke="#fff" stroke-width="0.35">Yellow</text>
<rect x="1028.7" y="526.7" width="75.6" height="62.6" fill="#f4fcf3" stroke="#f4f4f4" stroke-width="1.4"/>
<rect x="1028.7" y="607.7" width="75.6" height="62.6" fill="#fcfcfc" stroke="#f4f4f4" stroke-width="1.4"/>
<text x="1066" y="687" font-size="13.6" fill="#fff" text-anchor="middle" textLength="37" lengthAdjust="spacingAndGlyphs" stroke="#fff" stroke-width="0.35">100W</text>
<text x="392" y="576.8" font-size="14.4" fill="#fff" textLength="36.8" lengthAdjust="spacingAndGlyphs" transform="rotate(-90 392 576.8)" stroke="#fff" stroke-width="0.3">Actual</text>
<text x="392" y="658.2" font-size="14.4" fill="#fff" textLength="37.4" lengthAdjust="spacingAndGlyphs" transform="rotate(-90 392 658.2)" stroke="#fff" stroke-width="0.3">Target</text>
<text x="737" y="724.3" font-size="15.2" fill="#d6d6d6" text-anchor="middle" textLength="92" lengthAdjust="spacingAndGlyphs">DeltaE 2000</text>
<rect x="409" y="731.5" width="681" height="218" fill="#242424"/>
<line x1="409" y1="804.5" x2="1090" y2="804.5" stroke="#858585" stroke-width="1.1"/>
<line x1="409" y1="877.2" x2="1090" y2="877.2" stroke="#858585" stroke-width="1.1"/>
<rect x="417.7" y="831.5" width="65.3" height="117.5" fill="url(#lg23)" stroke="#000" stroke-width="1.6"/>
<rect x="502.9" y="849" width="65.3" height="100" fill="url(#lg24)" stroke="#000" stroke-width="1.6"/>
<rect x="588.1" y="844.5" width="65.3" height="104.5" fill="url(#lg25)" stroke="#000" stroke-width="1.6"/>
<rect x="673.3" y="869.5" width="65.3" height="79.5" fill="url(#lg26)" stroke="#000" stroke-width="1.6"/>
<rect x="758.5" y="855" width="65.3" height="94" fill="url(#lg27)" stroke="#000" stroke-width="1.6"/>
<rect x="843.7" y="855" width="65.3" height="94" fill="url(#lg28)" stroke="#000" stroke-width="1.6"/>
<rect x="928.9" y="884" width="65.3" height="65" fill="url(#lg29)" stroke="#000" stroke-width="1.6"/>
<rect x="1014.1" y="829.5" width="65.3" height="119.5" fill="url(#lg30)" stroke="#000" stroke-width="1.6"/>
<line x1="409" y1="803.5" x2="1090" y2="803.5" stroke="#e81e1e" stroke-width="1.9"/>
<line x1="409" y1="876.6" x2="1090" y2="876.6" stroke="#f0f010" stroke-width="1.7"/>
<line x1="409" y1="905.8" x2="1090" y2="905.8" stroke="#0a8a0a" stroke-width="1.6"/>
<rect x="409" y="731.5" width="681" height="218" fill="none" stroke="#8e8e8e" stroke-width="2"/>
<line x1="401.5" y1="731.5" x2="409" y2="731.5" stroke="#c8c8c8" stroke-width="1.2"/>
<line x1="401.5" y1="804.5" x2="409" y2="804.5" stroke="#c8c8c8" stroke-width="1.2"/>
<line x1="401.5" y1="877.2" x2="409" y2="877.2" stroke="#c8c8c8" stroke-width="1.2"/>
<line x1="401.5" y1="949.5" x2="409" y2="949.5" stroke="#c8c8c8" stroke-width="1.2"/>
<line x1="409" y1="949.5" x2="409" y2="956" stroke="#c8c8c8" stroke-width="1.2"/>
<line x1="494.125" y1="949.5" x2="494.125" y2="956" stroke="#c8c8c8" stroke-width="1.2"/>
<line x1="579.25" y1="949.5" x2="579.25" y2="956" stroke="#c8c8c8" stroke-width="1.2"/>
<line x1="664.375" y1="949.5" x2="664.375" y2="956" stroke="#c8c8c8" stroke-width="1.2"/>
<line x1="749.5" y1="949.5" x2="749.5" y2="956" stroke="#c8c8c8" stroke-width="1.2"/>
<line x1="834.625" y1="949.5" x2="834.625" y2="956" stroke="#c8c8c8" stroke-width="1.2"/>
<line x1="919.75" y1="949.5" x2="919.75" y2="956" stroke="#c8c8c8" stroke-width="1.2"/>
<line x1="1004.88" y1="949.5" x2="1004.88" y2="956" stroke="#c8c8c8" stroke-width="1.2"/>
<line x1="1090" y1="949.5" x2="1090" y2="956" stroke="#c8c8c8" stroke-width="1.2"/>
<text x="401.3" y="738.3" font-size="15.4" fill="#d6d6d6" text-anchor="end" textLength="17.2963" lengthAdjust="spacingAndGlyphs">15</text>
<text x="401.3" y="811.2" font-size="15.4" fill="#d6d6d6" text-anchor="end" textLength="17.2963" lengthAdjust="spacingAndGlyphs">10</text>
<text x="401.3" y="884" font-size="15.4" fill="#d6d6d6" text-anchor="end" textLength="8.64813" lengthAdjust="spacingAndGlyphs">5</text>
<text x="401.3" y="956.5" font-size="15.4" fill="#d6d6d6" text-anchor="end" textLength="8.64813" lengthAdjust="spacingAndGlyphs">0</text>
<text x="451.6" y="966.8" font-size="16.2" fill="#d6d6d6" text-anchor="middle" textLength="44.7" lengthAdjust="spacingAndGlyphs">White</text>
<text x="536.725" y="966.8" font-size="16.2" fill="#d6d6d6" text-anchor="middle" textLength="28.5" lengthAdjust="spacingAndGlyphs">Red</text>
<text x="621.85" y="966.8" font-size="16.2" fill="#d6d6d6" text-anchor="middle" textLength="46.5" lengthAdjust="spacingAndGlyphs">Green</text>
<text x="706.975" y="966.8" font-size="16.2" fill="#d6d6d6" text-anchor="middle" textLength="33.5" lengthAdjust="spacingAndGlyphs">Blue</text>
<text x="792.1" y="966.8" font-size="16.2" fill="#d6d6d6" text-anchor="middle" textLength="35.5" lengthAdjust="spacingAndGlyphs">Cyan</text>
<text x="877.225" y="966.8" font-size="16.2" fill="#d6d6d6" text-anchor="middle" textLength="66" lengthAdjust="spacingAndGlyphs">Magenta</text>
<text x="962.35" y="966.8" font-size="16.2" fill="#d6d6d6" text-anchor="middle" textLength="47.5" lengthAdjust="spacingAndGlyphs">Yellow</text>
<text x="1047.47" y="966.8" font-size="16.2" fill="#d6d6d6" text-anchor="middle" textLength="43.5" lengthAdjust="spacingAndGlyphs">100W</text>
<rect x="1121" y="104" width="795" height="629" fill="#000"/>
<rect x="1128" y="111" width="783.3" height="615" fill="#333333"/>
<text x="1519.5" y="131" font-size="15" fill="#d6d6d6" text-anchor="middle" textLength="87" lengthAdjust="spacingAndGlyphs">CIE 1931 xy</text>
<rect x="1161.5" y="137" width="745.5" height="558.5" fill="#242424"/>
<g clip-path="url(#hs)"><g filter="url(#vb)"><rect x="1199.96" y="148" width="90" height="4.6" fill="url(#o0)"/><rect x="1193.84" y="152" width="108" height="4.6" fill="url(#o1)"/><rect x="1189.4" y="156" width="124" height="4.6" fill="url(#o2)"/><rect x="1185.75" y="160" width="138" height="4.6" fill="url(#o3)"/><rect x="1182.74" y="164" width="152" height="4.6" fill="url(#o4)"/><rect x="1180.17" y="168" width="164" height="4.6" fill="url(#o5)"/><rect x="1177.89" y="172" width="174" height="4.6" fill="url(#o6)"/><rect x="1175.83" y="176" width="184" height="4.6" fill="url(#o7)"/><rect x="1173.98" y="180" width="192" height="4.6" fill="url(#o8)"/><rect x="1172.33" y="184" width="202" height="4.6" fill="url(#o9)"/><rect x="1170.87" y="188" width="210" height="4.6" fill="url(#o10)"/><rect x="1169.58" y="192" width="218" height="4.6" fill="url(#o11)"/><rect x="1168.43" y="196" width="226" height="4.6" fill="url(#o12)"/><rect x="1167.38" y="200" width="234" height="4.6" fill="url(#o13)"/><rect x="1166.39" y="204" width="240" height="4.6" fill="url(#o14)"/><rect x="1165.52" y="208" width="248" height="4.6" fill="url(#o15)"/><rect x="1164.73" y="212" width="254" height="4.6" fill="url(#o16)"/><rect x="1164.02" y="216" width="262" height="4.6" fill="url(#o17)"/><rect x="1163.43" y="220" width="268" height="4.6" fill="url(#o18)"/><rect x="1162.95" y="224" width="274" height="4.6" fill="url(#o19)"/><rect x="1162.52" y="228" width="280" height="4.6" fill="url(#o20)"/><rect x="1162.19" y="232" width="286" height="4.6" fill="url(#o21)"/><rect x="1161.88" y="236" width="292" height="4.6" fill="url(#o22)"/><rect x="1161.62" y="240" width="298" height="4.6" fill="url(#o23)"/><rect x="1161.37" y="244" width="304" height="4.6" fill="url(#o24)"/><rect x="1161.14" y="248" width="310" height="4.6" fill="url(#o25)"/><rect x="1160.91" y="252" width="316" height="4.6" fill="url(#o26)"/><rect x="1160.68" y="256" width="322" height="4.6" fill="url(#o27)"/><rect x="1160.46" y="260" width="328" height="4.6" fill="url(#o28)"/><rect x="1160.26" y="264" width="334" height="4.6" fill="url(#o29)"/><rect x="1160.09" y="268" width="340" height="4.6" fill="url(#o30)"/><rect x="1160" y="272" width="344" height="4.6" fill="url(#o31)"/><rect x="1160" y="276" width="350" height="4.6" fill="url(#o32)"/><rect x="1160" y="280" width="356" height="4.6" fill="url(#o33)"/><rect x="1160" y="284" width="362" height="4.6" fill="url(#o34)"/><rect x="1160" y="288" width="366" height="4.6" fill="url(#o35)"/><rect x="1160" y="292" width="372" height="4.6" fill="url(#o36)"/><rect x="1160" y="296" width="378" height="4.6" fill="url(#o37)"/><rect x="1160" y="300" width="382" height="4.6" fill="url(#o38)"/><rect x="1160" y="304" width="388" height="4.6" fill="url(#o39)"/><rect x="1160.15" y="308" width="394" height="4.6" fill="url(#o40)"/><rect x="1160.41" y="312" width="398" height="4.6" fill="url(#o41)"/><rect x="1160.69" y="316" width="404" height="4.6" fill="url(#o42)"/><rect x="1160.99" y="320" width="410" height="4.6" fill="url(#o43)"/><rect x="1161.32" y="324" width="414" height="4.6" fill="url(#o44)"/><rect x="1161.7" y="328" width="420" height="4.6" fill="url(#o45)"/><rect x="1162.11" y="332" width="424" height="4.6" fill="url(#o46)"/><rect x="1162.54" y="336" width="428" height="4.6" fill="url(#o47)"/><rect x="1162.99" y="340" width="434" height="4.6" fill="url(#o48)"/><rect x="1163.46" y="344" width="438" height="4.6" fill="url(#o49)"/><rect x="1163.94" y="348" width="444" height="4.6" fill="url(#o50)"/><rect x="1164.45" y="352" width="448" height="4.6" fill="url(#o51)"/><rect x="1164.98" y="356" width="454" height="4.6" fill="url(#o52)"/><rect x="1165.52" y="360" width="458" height="4.6" fill="url(#o53)"/><rect x="1166.1" y="364" width="464" height="4.6" fill="url(#o54)"/><rect x="1166.7" y="368" width="468" height="4.6" fill="url(#o55)"/><rect x="1167.33" y="372" width="472" height="4.6" fill="url(#o56)"/><rect x="1167.98" y="376" width="478" height="4.6" fill="url(#o57)"/><rect x="1168.66" y="380" width="482" height="4.6" fill="url(#o58)"/><rect x="1169.36" y="384" width="486" height="4.6" fill="url(#o59)"/><rect x="1170.08" y="388" width="492" height="4.6" fill="url(#o60)"/><rect x="1170.84" y="392" width="496" height="4.6" fill="url(#o61)"/><rect x="1171.62" y="396" width="500" height="4.6" fill="url(#o62)"/><rect x="1172.43" y="400" width="506" height="4.6" fill="url(#o63)"/><rect x="1173.25" y="404" width="510" height="4.6" fill="url(#o64)"/><rect x="1174.08" y="408" width="514" height="4.6" fill="url(#o65)"/><rect x="1174.91" y="412" width="518" height="4.6" fill="url(#o66)"/><rect x="1175.73" y="416" width="522" height="4.6" fill="url(#o67)"/><rect x="1176.55" y="420" width="526" height="4.6" fill="url(#o68)"/><rect x="1177.38" y="424" width="532" height="4.6" fill="url(#o69)"/><rect x="1178.24" y="428" width="536" height="4.6" fill="url(#o70)"/><rect x="1179.17" y="432" width="540" height="4.6" fill="url(#o71)"/><rect x="1180.21" y="436" width="544" height="4.6" fill="url(#o72)"/><rect x="1181.47" y="440" width="548" height="4.6" fill="url(#o73)"/><rect x="1182.9" y="444" width="552" height="4.6" fill="url(#o74)"/><rect x="1184.28" y="448" width="556" height="4.6" fill="url(#o75)"/><rect x="1185.64" y="452" width="560" height="4.6" fill="url(#o76)"/><rect x="1187.01" y="456" width="564" height="4.6" fill="url(#o77)"/><rect x="1188.39" y="460" width="568" height="4.6" fill="url(#o78)"/><rect x="1189.78" y="464" width="572" height="4.6" fill="url(#o79)"/><rect x="1191.18" y="468" width="576" height="4.6" fill="url(#o80)"/><rect x="1192.62" y="472" width="580" height="4.6" fill="url(#o81)"/><rect x="1194.07" y="476" width="582" height="4.6" fill="url(#o82)"/><rect x="1195.54" y="480" width="586" height="4.6" fill="url(#o83)"/><rect x="1197.02" y="484" width="590" height="4.6" fill="url(#o84)"/><rect x="1198.5" y="488" width="594" height="4.6" fill="url(#o85)"/><rect x="1199.97" y="492" width="598" height="4.6" fill="url(#o86)"/><rect x="1201.43" y="496" width="602" height="4.6" fill="url(#o87)"/><rect x="1202.88" y="500" width="604" height="4.6" fill="url(#o88)"/><rect x="1204.33" y="504" width="602" height="4.6" fill="url(#o89)"/><rect x="1205.79" y="508" width="602" height="4.6" fill="url(#o90)"/><rect x="1207.29" y="512" width="600" height="4.6" fill="url(#o91)"/><rect x="1208.8" y="516" width="594" height="4.6" fill="url(#o92)"/><rect x="1210.36" y="520" width="580" height="4.6" fill="url(#o93)"/><rect x="1211.95" y="524" width="568" height="4.6" fill="url(#o94)"/><rect x="1213.54" y="528" width="556" height="4.6" fill="url(#o95)"/><rect x="1215.15" y="532" width="544" height="4.6" fill="url(#o96)"/><rect x="1216.76" y="536" width="530" height="4.6" fill="url(#o97)"/><rect x="1218.36" y="540" width="518" height="4.6" fill="url(#o98)"/><rect x="1219.96" y="544" width="506" height="4.6" fill="url(#o99)"/><rect x="1221.57" y="548" width="492" height="4.6" fill="url(#o100)"/><rect x="1223.18" y="552" width="480" height="4.6" fill="url(#o101)"/><rect x="1224.79" y="556" width="468" height="4.6" fill="url(#o102)"/><rect x="1226.4" y="560" width="454" height="4.6" fill="url(#o103)"/><rect x="1227.98" y="564" width="442" height="4.6" fill="url(#o104)"/><rect x="1229.56" y="568" width="430" height="4.6" fill="url(#o105)"/><rect x="1231.13" y="572" width="418" height="4.6" fill="url(#o106)"/><rect x="1232.72" y="576" width="404" height="4.6" fill="url(#o107)"/><rect x="1234.37" y="580" width="392" height="4.6" fill="url(#o108)"/><rect x="1236.07" y="584" width="380" height="4.6" fill="url(#o109)"/><rect x="1237.88" y="588" width="366" height="4.6" fill="url(#o110)"/><rect x="1239.78" y="592" width="354" height="4.6" fill="url(#o111)"/><rect x="1241.74" y="596" width="340" height="4.6" fill="url(#o112)"/><rect x="1243.74" y="600" width="328" height="4.6" fill="url(#o113)"/><rect x="1245.77" y="604" width="314" height="4.6" fill="url(#o114)"/><rect x="1247.84" y="608" width="302" height="4.6" fill="url(#o115)"/><rect x="1249.97" y="612" width="288" height="4.6" fill="url(#o116)"/><rect x="1252.14" y="616" width="276" height="4.6" fill="url(#o117)"/><rect x="1254.33" y="620" width="262" height="4.6" fill="url(#o118)"/><rect x="1256.53" y="624" width="248" height="4.6" fill="url(#o119)"/><rect x="1258.76" y="628" width="236" height="4.6" fill="url(#o120)"/><rect x="1261.02" y="632" width="222" height="4.6" fill="url(#o121)"/><rect x="1263.33" y="636" width="208" height="4.6" fill="url(#o122)"/><rect x="1265.69" y="640" width="196" height="4.6" fill="url(#o123)"/><rect x="1268.09" y="644" width="182" height="4.6" fill="url(#o124)"/><rect x="1270.55" y="648" width="168" height="4.6" fill="url(#o125)"/><rect x="1273.07" y="652" width="156" height="4.6" fill="url(#o126)"/><rect x="1275.69" y="656" width="142" height="4.6" fill="url(#o127)"/><rect x="1278.38" y="660" width="128" height="4.6" fill="url(#o128)"/><rect x="1281.11" y="664" width="114" height="4.6" fill="url(#o129)"/><rect x="1283.84" y="668" width="100" height="4.6" fill="url(#o130)"/><rect x="1286.71" y="672" width="86" height="4.6" fill="url(#o131)"/><rect x="1289.76" y="676" width="72" height="4.6" fill="url(#o132)"/><rect x="1293.12" y="680" width="58" height="4.6" fill="url(#o133)"/><rect x="1297.1" y="684" width="42" height="4.6" fill="url(#o134)"/></g></g><g clip-path="url(#tri)"><g filter="url(#vb)"><rect x="1420.1" y="294" width="26" height="3.6" fill="url(#i0)"/><rect x="1418.98" y="297" width="32" height="3.6" fill="url(#i1)"/><rect x="1417.87" y="300" width="38" height="3.6" fill="url(#i2)"/><rect x="1416.75" y="303" width="44" height="3.6" fill="url(#i3)"/><rect x="1415.64" y="306" width="50" height="3.6" fill="url(#i4)"/><rect x="1414.52" y="309" width="56" height="3.6" fill="url(#i5)"/><rect x="1413.41" y="312" width="62" height="3.6" fill="url(#i6)"/><rect x="1412.29" y="315" width="68" height="3.6" fill="url(#i7)"/><rect x="1411.18" y="318" width="76" height="3.6" fill="url(#i8)"/><rect x="1410.06" y="321" width="82" height="3.6" fill="url(#i9)"/><rect x="1408.95" y="324" width="88" height="3.6" fill="url(#i10)"/><rect x="1407.83" y="327" width="94" height="3.6" fill="url(#i11)"/><rect x="1406.72" y="330" width="100" height="3.6" fill="url(#i12)"/><rect x="1405.6" y="333" width="106" height="3.6" fill="url(#i13)"/><rect x="1404.49" y="336" width="112" height="3.6" fill="url(#i14)"/><rect x="1403.37" y="339" width="118" height="3.6" fill="url(#i15)"/><rect x="1402.26" y="342" width="124" height="3.6" fill="url(#i16)"/><rect x="1401.14" y="345" width="130" height="3.6" fill="url(#i17)"/><rect x="1400.03" y="348" width="136" height="3.6" fill="url(#i18)"/><rect x="1398.91" y="351" width="142" height="3.6" fill="url(#i19)"/><rect x="1397.8" y="354" width="150" height="3.6" fill="url(#i20)"/><rect x="1396.68" y="357" width="156" height="3.6" fill="url(#i21)"/><rect x="1395.57" y="360" width="162" height="3.6" fill="url(#i22)"/><rect x="1394.45" y="363" width="168" height="3.6" fill="url(#i23)"/><rect x="1393.34" y="366" width="174" height="3.6" fill="url(#i24)"/><rect x="1392.22" y="369" width="180" height="3.6" fill="url(#i25)"/><rect x="1391.11" y="372" width="186" height="3.6" fill="url(#i26)"/><rect x="1389.99" y="375" width="192" height="3.6" fill="url(#i27)"/><rect x="1388.88" y="378" width="198" height="3.6" fill="url(#i28)"/><rect x="1387.76" y="381" width="204" height="3.6" fill="url(#i29)"/><rect x="1386.65" y="384" width="210" height="3.6" fill="url(#i30)"/><rect x="1385.53" y="387" width="216" height="3.6" fill="url(#i31)"/><rect x="1384.42" y="390" width="224" height="3.6" fill="url(#i32)"/><rect x="1383.3" y="393" width="230" height="3.6" fill="url(#i33)"/><rect x="1382.19" y="396" width="236" height="3.6" fill="url(#i34)"/><rect x="1381.08" y="399" width="242" height="3.6" fill="url(#i35)"/><rect x="1379.96" y="402" width="248" height="3.6" fill="url(#i36)"/><rect x="1378.85" y="405" width="254" height="3.6" fill="url(#i37)"/><rect x="1377.73" y="408" width="260" height="3.6" fill="url(#i38)"/><rect x="1376.62" y="411" width="266" height="3.6" fill="url(#i39)"/><rect x="1375.5" y="414" width="272" height="3.6" fill="url(#i40)"/><rect x="1374.39" y="417" width="278" height="3.6" fill="url(#i41)"/><rect x="1373.27" y="420" width="284" height="3.6" fill="url(#i42)"/><rect x="1372.16" y="423" width="292" height="3.6" fill="url(#i43)"/><rect x="1371.04" y="426" width="298" height="3.6" fill="url(#i44)"/><rect x="1369.93" y="429" width="304" height="3.6" fill="url(#i45)"/><rect x="1368.81" y="432" width="310" height="3.6" fill="url(#i46)"/><rect x="1367.7" y="435" width="316" height="3.6" fill="url(#i47)"/><rect x="1366.58" y="438" width="322" height="3.6" fill="url(#i48)"/><rect x="1365.47" y="441" width="328" height="3.6" fill="url(#i49)"/><rect x="1364.35" y="444" width="334" height="3.6" fill="url(#i50)"/><rect x="1363.24" y="447" width="340" height="3.6" fill="url(#i51)"/><rect x="1362.12" y="450" width="346" height="3.6" fill="url(#i52)"/><rect x="1361.01" y="453" width="352" height="3.6" fill="url(#i53)"/><rect x="1359.89" y="456" width="358" height="3.6" fill="url(#i54)"/><rect x="1358.78" y="459" width="366" height="3.6" fill="url(#i55)"/><rect x="1357.66" y="462" width="372" height="3.6" fill="url(#i56)"/><rect x="1356.55" y="465" width="378" height="3.6" fill="url(#i57)"/><rect x="1355.43" y="468" width="380" height="3.6" fill="url(#i58)"/><rect x="1354.32" y="471" width="380" height="3.6" fill="url(#i59)"/><rect x="1353.2" y="474" width="382" height="3.6" fill="url(#i60)"/><rect x="1352.09" y="477" width="382" height="3.6" fill="url(#i61)"/><rect x="1350.97" y="480" width="384" height="3.6" fill="url(#i62)"/><rect x="1349.86" y="483" width="384" height="3.6" fill="url(#i63)"/><rect x="1348.74" y="486" width="378" height="3.6" fill="url(#i64)"/><rect x="1347.63" y="489" width="372" height="3.6" fill="url(#i65)"/><rect x="1346.51" y="492" width="366" height="3.6" fill="url(#i66)"/><rect x="1345.4" y="495" width="360" height="3.6" fill="url(#i67)"/><rect x="1344.28" y="498" width="354" height="3.6" fill="url(#i68)"/><rect x="1343.17" y="501" width="348" height="3.6" fill="url(#i69)"/><rect x="1342.05" y="504" width="342" height="3.6" fill="url(#i70)"/><rect x="1340.94" y="507" width="334" height="3.6" fill="url(#i71)"/><rect x="1339.82" y="510" width="328" height="3.6" fill="url(#i72)"/><rect x="1338.71" y="513" width="322" height="3.6" fill="url(#i73)"/><rect x="1337.59" y="516" width="316" height="3.6" fill="url(#i74)"/><rect x="1336.48" y="519" width="310" height="3.6" fill="url(#i75)"/><rect x="1335.36" y="522" width="304" height="3.6" fill="url(#i76)"/><rect x="1334.25" y="525" width="298" height="3.6" fill="url(#i77)"/><rect x="1333.14" y="528" width="292" height="3.6" fill="url(#i78)"/><rect x="1332.02" y="531" width="286" height="3.6" fill="url(#i79)"/><rect x="1330.91" y="534" width="280" height="3.6" fill="url(#i80)"/><rect x="1329.79" y="537" width="274" height="3.6" fill="url(#i81)"/><rect x="1328.68" y="540" width="268" height="3.6" fill="url(#i82)"/><rect x="1327.56" y="543" width="260" height="3.6" fill="url(#i83)"/><rect x="1326.45" y="546" width="254" height="3.6" fill="url(#i84)"/><rect x="1325.33" y="549" width="248" height="3.6" fill="url(#i85)"/><rect x="1324.22" y="552" width="242" height="3.6" fill="url(#i86)"/><rect x="1323.1" y="555" width="236" height="3.6" fill="url(#i87)"/><rect x="1321.99" y="558" width="230" height="3.6" fill="url(#i88)"/><rect x="1320.87" y="561" width="224" height="3.6" fill="url(#i89)"/><rect x="1319.76" y="564" width="218" height="3.6" fill="url(#i90)"/><rect x="1318.64" y="567" width="212" height="3.6" fill="url(#i91)"/><rect x="1317.53" y="570" width="206" height="3.6" fill="url(#i92)"/><rect x="1316.41" y="573" width="200" height="3.6" fill="url(#i93)"/><rect x="1315.3" y="576" width="192" height="3.6" fill="url(#i94)"/><rect x="1314.18" y="579" width="186" height="3.6" fill="url(#i95)"/><rect x="1313.07" y="582" width="180" height="3.6" fill="url(#i96)"/><rect x="1311.95" y="585" width="174" height="3.6" fill="url(#i97)"/><rect x="1310.84" y="588" width="168" height="3.6" fill="url(#i98)"/><rect x="1309.72" y="591" width="162" height="3.6" fill="url(#i99)"/><rect x="1308.61" y="594" width="156" height="3.6" fill="url(#i100)"/><rect x="1307.49" y="597" width="150" height="3.6" fill="url(#i101)"/><rect x="1306.38" y="600" width="144" height="3.6" fill="url(#i102)"/><rect x="1305.26" y="603" width="138" height="3.6" fill="url(#i103)"/><rect x="1304.15" y="606" width="132" height="3.6" fill="url(#i104)"/><rect x="1303.03" y="609" width="126" height="3.6" fill="url(#i105)"/><rect x="1301.92" y="612" width="118" height="3.6" fill="url(#i106)"/><rect x="1300.8" y="615" width="112" height="3.6" fill="url(#i107)"/><rect x="1299.69" y="618" width="106" height="3.6" fill="url(#i108)"/><rect x="1298.57" y="621" width="100" height="3.6" fill="url(#i109)"/><rect x="1297.46" y="624" width="94" height="3.6" fill="url(#i110)"/><rect x="1296.34" y="627" width="88" height="3.6" fill="url(#i111)"/><rect x="1295.23" y="630" width="82" height="3.6" fill="url(#i112)"/><rect x="1294.11" y="633" width="76" height="3.6" fill="url(#i113)"/><rect x="1293" y="636" width="70" height="3.6" fill="url(#i114)"/><rect x="1291.88" y="639" width="64" height="3.6" fill="url(#i115)"/><rect x="1290.77" y="642" width="58" height="3.6" fill="url(#i116)"/><rect x="1290" y="645" width="50" height="3.6" fill="url(#i117)"/><rect x="1290" y="648" width="44" height="3.6" fill="url(#i118)"/><rect x="1290" y="651" width="36" height="3.6" fill="url(#i119)"/><rect x="1290" y="654" width="28" height="3.6" fill="url(#i120)"/><rect x="1290" y="657" width="22" height="3.6" fill="url(#i121)"/></g></g>
<rect x="1639" y="138" width="268" height="207" fill="#333"/>
<g clip-path="url(#ins)"><g filter="url(#vb)"><rect x="1642" y="139.5" width="261" height="4.65" fill="url(#n0)"/><rect x="1642" y="143.55" width="261" height="4.65" fill="url(#n1)"/><rect x="1642" y="147.6" width="261" height="4.65" fill="url(#n2)"/><rect x="1642" y="151.65" width="261" height="4.65" fill="url(#n3)"/><rect x="1642" y="155.7" width="261" height="4.65" fill="url(#n4)"/><rect x="1642" y="159.75" width="261" height="4.65" fill="url(#n5)"/><rect x="1642" y="163.8" width="261" height="4.65" fill="url(#n6)"/><rect x="1642" y="167.85" width="261" height="4.65" fill="url(#n7)"/><rect x="1642" y="171.9" width="261" height="4.65" fill="url(#n8)"/><rect x="1642" y="175.95" width="261" height="4.65" fill="url(#n9)"/><rect x="1642" y="180" width="261" height="4.65" fill="url(#n10)"/><rect x="1642" y="184.05" width="261" height="4.65" fill="url(#n11)"/><rect x="1642" y="188.1" width="261" height="4.65" fill="url(#n12)"/><rect x="1642" y="192.15" width="261" height="4.65" fill="url(#n13)"/><rect x="1642" y="196.2" width="261" height="4.65" fill="url(#n14)"/><rect x="1642" y="200.25" width="261" height="4.65" fill="url(#n15)"/><rect x="1642" y="204.3" width="261" height="4.65" fill="url(#n16)"/><rect x="1642" y="208.35" width="261" height="4.65" fill="url(#n17)"/><rect x="1642" y="212.4" width="261" height="4.65" fill="url(#n18)"/><rect x="1642" y="216.45" width="261" height="4.65" fill="url(#n19)"/><rect x="1642" y="220.5" width="261" height="4.65" fill="url(#n20)"/><rect x="1642" y="224.55" width="261" height="4.65" fill="url(#n21)"/><rect x="1642" y="228.6" width="261" height="4.65" fill="url(#n22)"/><rect x="1642" y="232.65" width="261" height="4.65" fill="url(#n23)"/><rect x="1642" y="236.7" width="261" height="4.65" fill="url(#n24)"/><rect x="1642" y="240.75" width="261" height="4.65" fill="url(#n25)"/><rect x="1642" y="244.8" width="261" height="4.65" fill="url(#n26)"/><rect x="1642" y="248.85" width="261" height="4.65" fill="url(#n27)"/><rect x="1642" y="252.9" width="261" height="4.65" fill="url(#n28)"/><rect x="1642" y="256.95" width="261" height="4.65" fill="url(#n29)"/><rect x="1642" y="261" width="261" height="4.65" fill="url(#n30)"/><rect x="1642" y="265.05" width="261" height="4.65" fill="url(#n31)"/><rect x="1642" y="269.1" width="261" height="4.65" fill="url(#n32)"/><rect x="1642" y="273.15" width="261" height="4.65" fill="url(#n33)"/><rect x="1642" y="277.2" width="261" height="4.65" fill="url(#n34)"/><rect x="1642" y="281.25" width="261" height="4.65" fill="url(#n35)"/><rect x="1642" y="285.3" width="261" height="4.65" fill="url(#n36)"/><rect x="1642" y="289.35" width="261" height="4.65" fill="url(#n37)"/><rect x="1642" y="293.4" width="261" height="4.65" fill="url(#n38)"/><rect x="1642" y="297.45" width="261" height="4.65" fill="url(#n39)"/><rect x="1642" y="301.5" width="261" height="4.65" fill="url(#n40)"/><rect x="1642" y="305.55" width="261" height="4.65" fill="url(#n41)"/><rect x="1642" y="309.6" width="261" height="4.65" fill="url(#n42)"/><rect x="1642" y="313.65" width="261" height="4.65" fill="url(#n43)"/><rect x="1642" y="317.7" width="261" height="4.65" fill="url(#n44)"/><rect x="1642" y="321.75" width="261" height="4.65" fill="url(#n45)"/><rect x="1642" y="325.8" width="261" height="4.65" fill="url(#n46)"/><rect x="1642" y="329.85" width="261" height="4.65" fill="url(#n47)"/><rect x="1642" y="333.9" width="261" height="4.65" fill="url(#n48)"/><rect x="1642" y="337.95" width="261" height="4.65" fill="url(#n49)"/></g></g>
<rect x="1642" y="139.5" width="261" height="202.5" fill="none" stroke="#9a9a9a" stroke-width="1.6"/>
<rect x="1161.5" y="137" width="745.5" height="558.5" fill="none" stroke="#b0b0b0" stroke-width="1.5"/>
<line x1="1161.5" y1="695.5" x2="1161.5" y2="701" stroke="#d8d8d8" stroke-width="1.4"/>
<line x1="1155" y1="695.5" x2="1161.5" y2="695.5" stroke="#d8d8d8" stroke-width="1.4"/>
<text x="1161.5" y="717.7" font-size="15.2" fill="#d6d6d6" text-anchor="middle" textLength="9" lengthAdjust="spacingAndGlyphs">0</text>
<text x="1154.9" y="701.2" font-size="15.2" fill="#d6d6d6" text-anchor="end" textLength="9" lengthAdjust="spacingAndGlyphs">0</text>
<line x1="1250.2" y1="695.5" x2="1250.2" y2="701" stroke="#d8d8d8" stroke-width="1.4"/>
<line x1="1155" y1="629.2" x2="1161.5" y2="629.2" stroke="#d8d8d8" stroke-width="1.4"/>
<text x="1250.2" y="717.7" font-size="15.2" fill="#d6d6d6" text-anchor="middle" textLength="23.5" lengthAdjust="spacingAndGlyphs">0,1</text>
<text x="1154.9" y="634.9" font-size="15.2" fill="#d6d6d6" text-anchor="end" textLength="23.5" lengthAdjust="spacingAndGlyphs">0,1</text>
<line x1="1338.9" y1="695.5" x2="1338.9" y2="701" stroke="#d8d8d8" stroke-width="1.4"/>
<line x1="1155" y1="562.9" x2="1161.5" y2="562.9" stroke="#d8d8d8" stroke-width="1.4"/>
<text x="1338.9" y="717.7" font-size="15.2" fill="#d6d6d6" text-anchor="middle" textLength="23.5" lengthAdjust="spacingAndGlyphs">0,2</text>
<text x="1154.9" y="568.6" font-size="15.2" fill="#d6d6d6" text-anchor="end" textLength="23.5" lengthAdjust="spacingAndGlyphs">0,2</text>
<line x1="1427.6" y1="695.5" x2="1427.6" y2="701" stroke="#d8d8d8" stroke-width="1.4"/>
<line x1="1155" y1="496.6" x2="1161.5" y2="496.6" stroke="#d8d8d8" stroke-width="1.4"/>
<text x="1427.6" y="717.7" font-size="15.2" fill="#d6d6d6" text-anchor="middle" textLength="23.5" lengthAdjust="spacingAndGlyphs">0,3</text>
<text x="1154.9" y="502.3" font-size="15.2" fill="#d6d6d6" text-anchor="end" textLength="23.5" lengthAdjust="spacingAndGlyphs">0,3</text>
<line x1="1516.3" y1="695.5" x2="1516.3" y2="701" stroke="#d8d8d8" stroke-width="1.4"/>
<line x1="1155" y1="430.3" x2="1161.5" y2="430.3" stroke="#d8d8d8" stroke-width="1.4"/>
<text x="1516.3" y="717.7" font-size="15.2" fill="#d6d6d6" text-anchor="middle" textLength="23.5" lengthAdjust="spacingAndGlyphs">0,4</text>
<text x="1154.9" y="436" font-size="15.2" fill="#d6d6d6" text-anchor="end" textLength="23.5" lengthAdjust="spacingAndGlyphs">0,4</text>
<line x1="1605" y1="695.5" x2="1605" y2="701" stroke="#d8d8d8" stroke-width="1.4"/>
<line x1="1155" y1="364" x2="1161.5" y2="364" stroke="#d8d8d8" stroke-width="1.4"/>
<text x="1605" y="717.7" font-size="15.2" fill="#d6d6d6" text-anchor="middle" textLength="23.5" lengthAdjust="spacingAndGlyphs">0,5</text>
<text x="1154.9" y="369.7" font-size="15.2" fill="#d6d6d6" text-anchor="end" textLength="23.5" lengthAdjust="spacingAndGlyphs">0,5</text>
<line x1="1693.7" y1="695.5" x2="1693.7" y2="701" stroke="#d8d8d8" stroke-width="1.4"/>
<line x1="1155" y1="297.7" x2="1161.5" y2="297.7" stroke="#d8d8d8" stroke-width="1.4"/>
<text x="1693.7" y="717.7" font-size="15.2" fill="#d6d6d6" text-anchor="middle" textLength="23.5" lengthAdjust="spacingAndGlyphs">0,6</text>
<text x="1154.9" y="303.4" font-size="15.2" fill="#d6d6d6" text-anchor="end" textLength="23.5" lengthAdjust="spacingAndGlyphs">0,6</text>
<line x1="1782.4" y1="695.5" x2="1782.4" y2="701" stroke="#d8d8d8" stroke-width="1.4"/>
<line x1="1155" y1="231.4" x2="1161.5" y2="231.4" stroke="#d8d8d8" stroke-width="1.4"/>
<text x="1782.4" y="717.7" font-size="15.2" fill="#d6d6d6" text-anchor="middle" textLength="23.5" lengthAdjust="spacingAndGlyphs">0,7</text>
<text x="1154.9" y="237.1" font-size="15.2" fill="#d6d6d6" text-anchor="end" textLength="23.5" lengthAdjust="spacingAndGlyphs">0,7</text>
<line x1="1871.1" y1="695.5" x2="1871.1" y2="701" stroke="#d8d8d8" stroke-width="1.4"/>
<line x1="1155" y1="165.1" x2="1161.5" y2="165.1" stroke="#d8d8d8" stroke-width="1.4"/>
<text x="1871.1" y="717.7" font-size="15.2" fill="#d6d6d6" text-anchor="middle" textLength="23.5" lengthAdjust="spacingAndGlyphs">0,8</text>
<text x="1154.9" y="170.8" font-size="15.2" fill="#d6d6d6" text-anchor="end" textLength="23.5" lengthAdjust="spacingAndGlyphs">0,8</text>
<rect x="1418.95" y="288.1" width="17.1" height="15.8" fill="none" stroke="#fff" stroke-width="1.75"/>
<rect x="1720.85" y="466.8" width="17.1" height="15.8" fill="none" stroke="#fff" stroke-width="1.75"/>
<rect x="1286.05" y="646.5" width="17.1" height="15.8" fill="none" stroke="#fff" stroke-width="1.75"/>
<rect x="1525.45" y="349.9" width="17.1" height="15.8" fill="none" stroke="#fff" stroke-width="1.75"/>
<rect x="1351.45" y="466.6" width="17.1" height="15.8" fill="none" stroke="#fff" stroke-width="1.75"/>
<rect x="1437.45" y="584.1" width="17.1" height="15.8" fill="none" stroke="#fff" stroke-width="1.75"/>
<rect x="1430.6" y="466.7" width="16.6" height="15.6" fill="none" stroke="#000" stroke-width="2.2"/>
<circle cx="1465" cy="296.2" r="5.8" fill="#00b400" stroke="#000" stroke-width="1.3"/>
<circle cx="1535.5" cy="345.9" r="5.8" fill="#b4b400" stroke="#000" stroke-width="1.3"/>
<circle cx="1702.8" cy="468" r="5.8" fill="#c80000" stroke="#000" stroke-width="1.3"/>
<circle cx="1385.5" cy="462" r="5.8" fill="#00b4b4" stroke="#000" stroke-width="1.3"/>
<circle cx="1421.5" cy="589" r="5.8" fill="#b400b4" stroke="#000" stroke-width="1.3"/>
<circle cx="1297.4" cy="640.9" r="5.8" fill="#0000c0" stroke="#000" stroke-width="1.3"/>
<circle cx="1440.3" cy="464.3" r="5.8" fill="#b8b8b8" stroke="#000" stroke-width="1.3"/>
<circle cx="1438.5" cy="467.4" r="5.8" fill="#ffffff" stroke="#000" stroke-width="1.3"/>
<circle cx="1780.9" cy="173.4" r="5.4" fill="#b8b8b8" stroke="#000" stroke-width="1.3"/>
<circle cx="1766.9" cy="193.9" r="5.4" fill="#ffffff" stroke="#000" stroke-width="1.3"/>
<rect x="1763.25" y="232.2" width="16.5" height="16" fill="none" stroke="#000" stroke-width="2"/>
<rect x="1286.5" y="754" width="458.5" height="211" fill="#000"/>
<rect x="0" y="978" width="1920" height="61.5" fill="url(#lg31)"/>
<path d="M0.8 1036V982.300a4 4 0 0 1 4 -4H147.1a4 4 0 0 1 4 4V1036a2.600 2.600 0 0 1 -2.600 2.600H3.4a2.600 2.600 0 0 1 -2.600 -2.600Z" fill="url(#lg32)"/>
<rect x="6.2" y="982.8" width="140.6" height="37" fill="#c0c0c0" rx="3" stroke="#a8a8a8" stroke-width="1.2"/>
<rect x="7.2" y="983.8" width="138.6" height="35" fill="none" rx="2.5" stroke="#000" stroke-width="1" stroke-opacity="0.22"/>
<path d="M152.85 1036V982.300a4 4 0 0 1 4 -4H299.15a4 4 0 0 1 4 4V1036a2.600 2.600 0 0 1 -2.600 2.600H155.45a2.600 2.600 0 0 1 -2.600 -2.600Z" fill="url(#lg32)"/>
<rect x="158.25" y="982.8" width="140.6" height="37" fill="#c00000" rx="3" stroke="#a8a8a8" stroke-width="1.2"/>
<rect x="159.25" y="983.8" width="138.6" height="35" fill="none" rx="2.5" stroke="#000" stroke-width="1" stroke-opacity="0.22"/>
<path d="M304.9 1036V982.300a4 4 0 0 1 4 -4H451.2a4 4 0 0 1 4 4V1036a2.600 2.600 0 0 1 -2.600 2.600H307.5a2.600 2.600 0 0 1 -2.600 -2.600Z" fill="url(#lg32)"/>
<rect x="310.3" y="982.8" width="140.6" height="37" fill="#00c000" rx="3" stroke="#a8a8a8" stroke-width="1.2"/>
<rect x="311.3" y="983.8" width="138.6" height="35" fill="none" rx="2.5" stroke="#000" stroke-width="1" stroke-opacity="0.22"/>
<path d="M456.95 1036V982.300a4 4 0 0 1 4 -4H603.25a4 4 0 0 1 4 4V1036a2.600 2.600 0 0 1 -2.600 2.600H459.55a2.600 2.600 0 0 1 -2.600 -2.600Z" fill="url(#lg32)"/>
<rect x="462.35" y="982.8" width="140.6" height="37" fill="#0000c0" rx="3" stroke="#a8a8a8" stroke-width="1.2"/>
<rect x="463.35" y="983.8" width="138.6" height="35" fill="none" rx="2.5" stroke="#000" stroke-width="1" stroke-opacity="0.22"/>
<path d="M609 1036V982.300a4 4 0 0 1 4 -4H755.3a4 4 0 0 1 4 4V1036a2.600 2.600 0 0 1 -2.600 2.600H611.6a2.600 2.600 0 0 1 -2.600 -2.600Z" fill="url(#lg32)"/>
<rect x="614.4" y="982.8" width="140.6" height="37" fill="#00c0c0" rx="3" stroke="#a8a8a8" stroke-width="1.2"/>
<rect x="615.4" y="983.8" width="138.6" height="35" fill="none" rx="2.5" stroke="#000" stroke-width="1" stroke-opacity="0.22"/>
<path d="M761.05 1036V982.300a4 4 0 0 1 4 -4H907.35a4 4 0 0 1 4 4V1036a2.600 2.600 0 0 1 -2.600 2.600H763.65a2.600 2.600 0 0 1 -2.600 -2.600Z" fill="url(#lg32)"/>
<rect x="766.45" y="982.8" width="140.6" height="37" fill="#c000c0" rx="3" stroke="#a8a8a8" stroke-width="1.2"/>
<rect x="767.45" y="983.8" width="138.6" height="35" fill="none" rx="2.5" stroke="#000" stroke-width="1" stroke-opacity="0.22"/>
<path d="M913.1 1036V982.300a4 4 0 0 1 4 -4H1059.4a4 4 0 0 1 4 4V1036a2.600 2.600 0 0 1 -2.600 2.600H915.7a2.600 2.600 0 0 1 -2.600 -2.600Z" fill="url(#lg32)"/>
<rect x="918.5" y="982.8" width="140.6" height="37" fill="#c0c000" rx="3" stroke="#a8a8a8" stroke-width="1.2"/>
<rect x="919.5" y="983.8" width="138.6" height="35" fill="none" rx="2.5" stroke="#000" stroke-width="1" stroke-opacity="0.22"/>
<path d="M1065.15 1036V982.300a4 4 0 0 1 4 -4H1211.45a4 4 0 0 1 4 4V1036a2.600 2.600 0 0 1 -2.600 2.600H1067.75a2.600 2.600 0 0 1 -2.600 -2.600Z" fill="url(#lg33)"/>
<rect x="1070.35" y="983" width="139.8" height="35.8" fill="#ffffff" rx="3" stroke="#d8d8d8" stroke-width="1"/>
<path d="M1597 1038.500V982a4 4 0 0 1 4 -4H1641a4 4 0 0 1 4 4V1038.500Z" fill="url(#lg32)"/>
<line x1="1597" y1="996" x2="1645" y2="996" stroke="#484848" stroke-width="1.2"/>
<line x1="1597" y1="997" x2="1645" y2="997" stroke="#9a9a9a" stroke-width="0.6"/>
<circle cx="1621.4" cy="987" r="7.3" fill="url(#lg34)"/>
<path d="M1617 988.500h8.800l-4.400 -4.200z" fill="#333"/>
<rect x="1605.5" y="1003" width="31.5" height="30" fill="url(#lg35)" rx="4" stroke="#1c1c1c" stroke-width="2.6"/>
<rect x="1603.7" y="1001.2" width="35.1" height="33.6" fill="none" rx="5.5" stroke="#d0d0d0" stroke-width="0.8"/>
<rect x="1614.2" y="1011" width="14" height="7" fill="#1c1c1c"/>
<rect x="1614.2" y="1018" width="14" height="7" fill="#000"/>
<path d="M1646.5 1008V982a4 4 0 0 1 4 -4H1690.9V1004a0 0 0 0 1 0 0V1008Z" fill="url(#lg32)"/>
<circle cx="1669.1" cy="993" r="10" fill="url(#lg36)"/>
<rect x="1691.7" y="978" width="44.4" height="30" fill="url(#lg32)"/>
<circle cx="1714.3" cy="993" r="10" fill="url(#lg37)"/>
<rect x="1736.9" y="978" width="44.4" height="30" fill="url(#lg32)"/>
<circle cx="1759.5" cy="993" r="10" fill="url(#lg38)"/>
<rect x="1782.1" y="978" width="44.4" height="30" fill="url(#lg32)"/>
<circle cx="1804.7" cy="993" r="10" fill="url(#lg39)"/>
<rect x="1827.3" y="978" width="44.4" height="30" fill="url(#lg32)"/>
<circle cx="1849.9" cy="993" r="10" fill="url(#lg40)"/>
<rect x="1872.5" y="978" width="43" height="30" fill="url(#lg41)"/>
<circle cx="1895.6" cy="992.8" r="10" fill="url(#lg42)"/>
<rect x="1665" y="989.3" width="8" height="7.6" fill="#2e2e2e"/>
<path d="M1712 989v9.600l8.200 -4.800z" fill="#2e2e2e"/>
<path d="M1757 988h-2.500v10h2.500M1762.800 988h2.500v10h-2.500" fill="none" stroke="#2e2e2e" stroke-width="1.600"/><path d="M1758.200 993h1.200M1760.600 993h1.200" stroke="#2e2e2e" stroke-width="1.500"/>
<path d="M1804.800 993c-1.500 -3 -6.300 -3.200 -6.300 0s4.800 3 6.300 0c1.500 -3 6.300 -3.200 6.300 0s-4.800 3 -6.300 0z" fill="none" stroke="#2e2e2e" stroke-width="1.500"/>
<path d="M1844.300 991.500a6 5 0 0 1 10.500 -2M1855.700 994.500a6 5 0 0 1 -10.500 2" fill="none" stroke="#2e2e2e" stroke-width="2"/><path d="M1855.800 986v4.500h-4.500zM1844.200 1000v-4.500h4.500z" fill="#2e2e2e"/>
<path d="M1646.500 1009.300H1782v29.200H1650.500a4 4 0 0 1 -4 -4Z" fill="url(#lg32)"/>
<path d="M1783.200 1009.300H1914.500a4 4 0 0 1 4 4V1034.500a4 4 0 0 1 -4 4H1783.200Z" fill="url(#lg32)"/>
<circle cx="1676.8" cy="1023.8" r="9.8" fill="url(#lg43)"/>
<circle cx="1890" cy="1023.8" r="9.8" fill="url(#lg44)"/>
<path d="M1676 1019.500l-3.500 4.300 3.500 4.300M1681 1019.500l-3.500 4.300 3.500 4.300" fill="none" stroke="#2e2e2e" stroke-width="1.500"/>
<path d="M1886 1019.500l3.500 4.300 -3.500 4.300M1891 1019.500l3.500 4.300 -3.500 4.300" fill="none" stroke="#2e2e2e" stroke-width="1.500"/>
<rect x="0" y="1038.7" width="1920" height="1" fill="#1e1e1e"/>
<rect x="0" y="1039.6" width="1920" height="9" fill="url(#lg45)"/>
<rect x="300.5" y="1041.5" width="57" height="7" fill="#7ea5c4" stroke="#a9c7de" stroke-width="0.8"/>
<path d="M319 1048c0.500 -3 3 -4.500 5 -4.500s4 1 5 4.500z" fill="#2a1418"/>
<rect x="252.5" y="1045" width="30" height="3" fill="#0b8a0b"/>
<path d="M198 1048a8 4 0 0 1 16 0z" fill="#3aa8e8"/>
<path d="M148 1048c3 -1.500 5 -2 7 0z" fill="#e8a030"/>
<path d="M20 1048l16 -2.500v2.500z" fill="#e8f0f8"/>
<path d="M68 1048v-1.500h12v1.500z" fill="#e8c870"/>
</svg>
<div class="t" style="left:760.50px;top:4.30px;font-size:15px;line-height:15px;color:#1b1b1b;transform:scaleX(0.9748);">CalMAN 5 CalMAN Ultimate for Business 84 Days Remaining</div>
<div class="t" style="left:35.20px;top:68.53px;font-size:11.3px;line-height:11.3px;color:#f2f2f2;transform:scaleX(1.0479);">History 1</div>
<div class="t" style="left:1361.50px;top:61.07px;font-size:11.5px;line-height:11.5px;color:#ffffff;transform:scaleX(0.9221);">X-Rite i1Pro 2</div>
<div class="t" style="left:1361.50px;top:75.07px;font-size:11.5px;line-height:11.5px;color:#ffffff;transform:scaleX(0.9211);">LCD Direct View</div>
<div class="t" style="left:1522.30px;top:61.07px;font-size:11.5px;line-height:11.5px;color:#ffffff;transform:scaleX(0.9333);">Generic Calibration DVD</div>
<div class="t" style="left:1684.00px;top:61.07px;font-size:11.5px;line-height:11.5px;color:#ffffff;transform:scaleX(0.9444);">Direct Display Control</div>
<h1 class="t" style="left:26.60px;top:115.66px;font-size:38.2px;line-height:38.2px;color:#f2f2f2;transform:scaleX(1.1127);">Color Management</h1>
<h2 class="t" style="left:15.60px;top:749.74px;font-size:30.2px;line-height:30.2px;color:#f2f2f2;transform:scaleX(1.1508);">Current Reading</h2>
<div class="t" style="left:17.40px;top:799.05px;font-size:26.4px;line-height:26.4px;color:#f2f2f2;transform:scaleX(1.1159);">x: 0,3117</div>
<div class="t" style="left:17.40px;top:843.15px;font-size:26.4px;line-height:26.4px;color:#f2f2f2;transform:scaleX(1.1012);">y: 0,3405</div>
<div class="t" style="left:17.40px;top:887.75px;font-size:26.4px;line-height:26.4px;color:#f2f2f2;transform:scaleX(1.0901);">fL: 97,735</div>
<div class="t" style="left:17.40px;top:931.95px;font-size:26.4px;line-height:26.4px;color:#f2f2f2;transform:scaleX(1.1387);">cd/m²: 334,865</div>
<div class="t" style="left:60.40px;top:1024.61px;font-size:11.8px;line-height:11.8px;color:#3c3c3c;font-weight:bold;transform:scaleX(0.9966);">White</div>
<div class="t" style="left:218.45px;top:1024.61px;font-size:11.8px;line-height:11.8px;color:#3c3c3c;font-weight:bold;transform:scaleX(0.8973);">Red</div>
<div class="t" style="left:365.00px;top:1024.61px;font-size:11.8px;line-height:11.8px;color:#3c3c3c;font-weight:bold;transform:scaleX(0.9092);">Green</div>
<div class="t" style="left:521.55px;top:1024.61px;font-size:11.8px;line-height:11.8px;color:#3c3c3c;font-weight:bold;transform:scaleX(0.8605);">Blue</div>
<div class="t" style="left:672.60px;top:1024.61px;font-size:11.8px;line-height:11.8px;color:#3c3c3c;font-weight:bold;transform:scaleX(0.8318);">Cyan</div>
<div class="t" style="left:814.40px;top:1024.61px;font-size:11.8px;line-height:11.8px;color:#3c3c3c;font-weight:bold;transform:scaleX(0.9298);">Magenta</div>
<div class="t" style="left:972.45px;top:1024.61px;font-size:11.8px;line-height:11.8px;color:#3c3c3c;font-weight:bold;transform:scaleX(0.8852);">Yellow</div>
<div class="t" style="left:1126.00px;top:1024.61px;font-size:11.8px;line-height:11.8px;color:#ffffff;font-weight:bold;transform:scaleX(0.9572);">100W</div>
<div class="t" style="left:1703.40px;top:1013.52px;font-size:21.6px;line-height:21.6px;color:#333333;transform:scaleX(1.0537);-webkit-text-stroke:0.5px #333;">Back</div>
<div class="t" style="left:1810.30px;top:1013.52px;font-size:21.6px;line-height:21.6px;color:#333333;transform:scaleX(1.1619);-webkit-text-stroke:0.5px #333;">Next</div>
</body></html>
